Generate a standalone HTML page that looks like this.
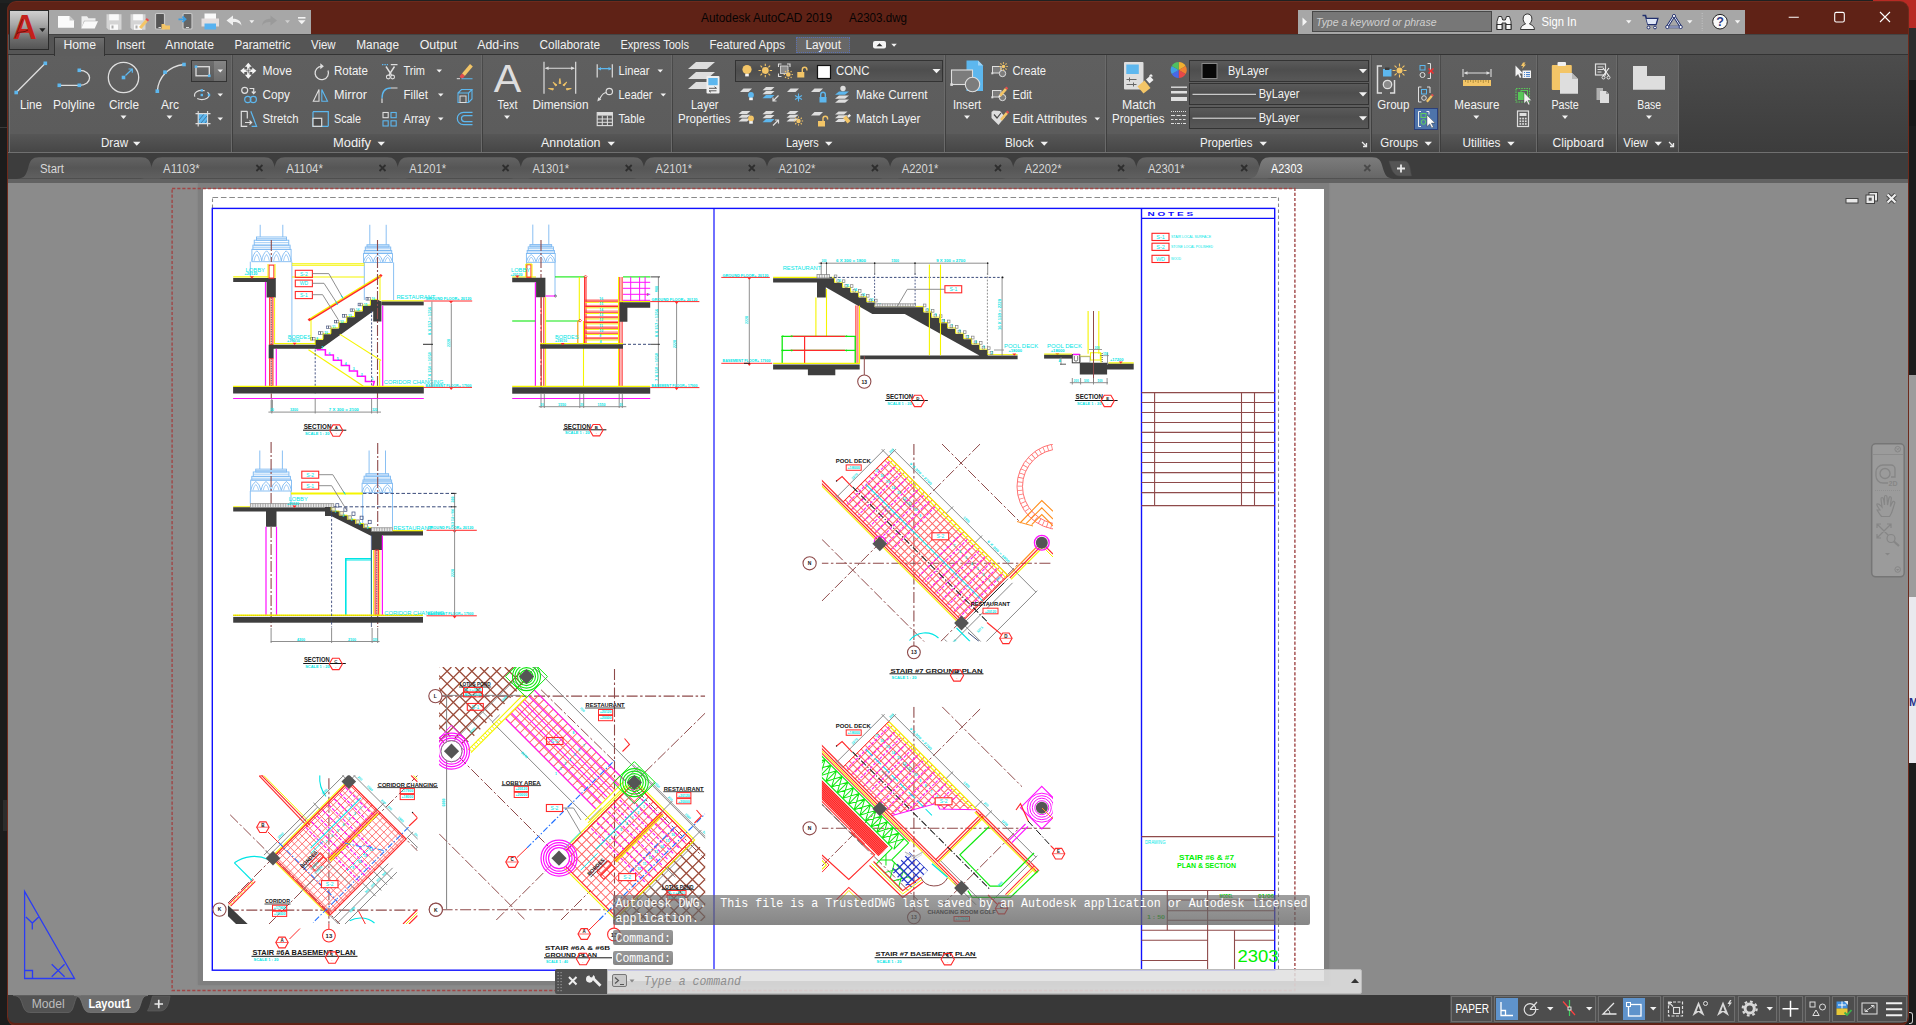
<!DOCTYPE html>
<html><head><meta charset="utf-8"><title>Autodesk AutoCAD 2019 - A2303.dwg</title>
<style>
html,body{margin:0;padding:0}
body{width:1916px;height:1025px;overflow:hidden;position:relative;background:#1c1c1c;font-family:"Liberation Sans",sans-serif}
#win{position:absolute;left:8px;top:2px;width:1900px;height:1023px;border-radius:8px;overflow:hidden;background:#5f2216;box-shadow:0 0 0 1px #6d2a1c}
#in{position:absolute;left:-8px;top:-2px;width:1916px;height:1025px}
#draw{position:absolute;left:8px;top:183px;width:1900px;height:812px;background:#8b8b8b;overflow:hidden}
</style></head><body>
<div style="position:absolute;left:0;top:0;width:1916px;height:3px;background:#1f2121"></div>
<div style="position:absolute;left:1873px;top:0;width:43px;height:28px;background:#b82a24"></div>
<div style="position:absolute;left:1908px;top:28px;width:8px;height:52px;background:#2b2b2b"></div>
<div style="position:absolute;left:1908px;top:80px;width:8px;height:46px;background:#181818"></div>
<div style="position:absolute;left:1909px;top:375px;width:7px;height:222px;background:#9c9c9c"></div>
<div style="position:absolute;left:1909px;top:597px;width:7px;height:166px;background:#e9e9ee"></div>
<div style="position:absolute;left:1909px;top:696px;width:7px;height:12px;overflow:hidden;color:#27318c;font:bold 11px Liberation Sans,sans-serif;line-height:12px">M</div>
<div style="position:absolute;left:0;top:127px;width:8px;height:1px;background:#3a3a3a"></div>
<div style="position:absolute;left:3px;top:800px;width:4px;height:31px;background:#2c2c2c"></div>
<div style="position:absolute;left:1909px;top:1012px;width:4px;height:12px;background:#111;border:1.5px solid #d0d0d0;border-left:none;border-radius:0 3px 3px 0;box-sizing:border-box"></div>
<div id="win"><div id="in">
<div id="draw"></div>
<div style="position:absolute;left:198px;top:183.3px;width:1130.5px;height:801.3px;background:#7f7f7f;box-shadow:0 0 1.5px #7f7f7f"></div>
<div style="position:absolute;left:203px;top:188.5px;width:1121.2px;height:792px;background:#fff"></div>
<svg width="1916" height="1025" viewBox="0 0 1916 1025" style="position:absolute;left:0;top:0;" font-family="Liberation Sans, sans-serif">
<rect x="172.1" y="188.5" width="1122.8" height="802" fill="none" stroke="#a04646" stroke-width="1.4" stroke-dasharray="3.2 1.9"/>
<path d="M212.5 208V197.5" fill="none" stroke="#8a8a8a" stroke-width="1.1" stroke-dasharray="3.6 2.4"/>
<path d="M212.5 197.5H1278.5" fill="none" stroke="#8a8a8a" stroke-width="1.1" stroke-dasharray="5.6 2.8"/>
<path d="M1278.5 197.5V970" fill="none" stroke="#8a8a8a" stroke-width="1.1" stroke-dasharray="3.6 2.4"/>
<rect x="212.3" y="208.4" width="1062.4" height="761.8" fill="none" stroke="#1010ff" stroke-width="1.4"/>
<line x1="714" y1="208.4" x2="714" y2="970" stroke="#1010ff" stroke-width="1.2"/>
<line x1="1141.5" y1="208.4" x2="1141.5" y2="970" stroke="#1010ff" stroke-width="1.4"/>
<line x1="1141.5" y1="218.3" x2="1274.7" y2="218.3" stroke="#1010ff" stroke-width="1.3"/>
<text x="1147.6" y="215.8" font-size="5.5" fill="#1010ff" textLength="45.5" lengthAdjust="spacingAndGlyphs" font-weight="bold">N O T E S</text>
<rect x="1152" y="233.3" width="17" height="7.2" fill="none" stroke="#ff2020" stroke-width="1.1"/>
<text x="1160.5" y="239.0" font-size="5.5" fill="#00e8e8" text-anchor="middle">S-1</text>
<text x="1171" y="238.3" font-size="4.3" fill="#00e8e8" textLength="40" lengthAdjust="spacingAndGlyphs">STAIR LOCAL SURFACE</text>
<rect x="1152" y="243.2" width="17" height="7.2" fill="none" stroke="#ff2020" stroke-width="1.1"/>
<text x="1160.5" y="248.89999999999998" font-size="5.5" fill="#00e8e8" text-anchor="middle">S-2</text>
<text x="1171" y="248.2" font-size="4.3" fill="#00e8e8" textLength="42" lengthAdjust="spacingAndGlyphs">STONE LOCAL POLISHED</text>
<rect x="1152" y="255.3" width="17" height="7.2" fill="none" stroke="#ff2020" stroke-width="1.1"/>
<text x="1160.5" y="261.0" font-size="5.5" fill="#00e8e8" text-anchor="middle">WD</text>
<text x="1171" y="260.3" font-size="4.3" fill="#00e8e8" textLength="10" lengthAdjust="spacingAndGlyphs">WOOD</text>
<line x1="1141.5" y1="392.6" x2="1274.7" y2="392.6" stroke="#8e4a4a" stroke-width="1.1"/>
<line x1="1141.5" y1="402.5" x2="1274.7" y2="402.5" stroke="#8e4a4a" stroke-width="1.1"/>
<line x1="1141.5" y1="412.5" x2="1274.7" y2="412.5" stroke="#8e4a4a" stroke-width="1.1"/>
<line x1="1141.5" y1="422.5" x2="1274.7" y2="422.5" stroke="#8e4a4a" stroke-width="1.1"/>
<line x1="1141.5" y1="432.4" x2="1274.7" y2="432.4" stroke="#8e4a4a" stroke-width="1.1"/>
<line x1="1141.5" y1="442.5" x2="1274.7" y2="442.5" stroke="#8e4a4a" stroke-width="1.1"/>
<line x1="1141.5" y1="452.5" x2="1274.7" y2="452.5" stroke="#8e4a4a" stroke-width="1.1"/>
<line x1="1141.5" y1="462.5" x2="1274.7" y2="462.5" stroke="#8e4a4a" stroke-width="1.1"/>
<line x1="1141.5" y1="472.6" x2="1274.7" y2="472.6" stroke="#8e4a4a" stroke-width="1.1"/>
<line x1="1141.5" y1="482.5" x2="1274.7" y2="482.5" stroke="#8e4a4a" stroke-width="1.1"/>
<line x1="1141.5" y1="492.6" x2="1274.7" y2="492.6" stroke="#8e4a4a" stroke-width="1.1"/>
<line x1="1141.5" y1="505.6" x2="1274.7" y2="505.6" stroke="#8e4a4a" stroke-width="1.1"/>
<line x1="1154.6" y1="392.6" x2="1154.6" y2="505.6" stroke="#8e4a4a" stroke-width="1.1"/>
<line x1="1241.5" y1="392.6" x2="1241.5" y2="505.6" stroke="#8e4a4a" stroke-width="1.1"/>
<line x1="1254.5" y1="392.6" x2="1254.5" y2="505.6" stroke="#8e4a4a" stroke-width="1.1"/>
<line x1="1141.5" y1="836.6" x2="1274.7" y2="836.6" stroke="#8e4a4a" stroke-width="1.1"/>
<text x="1145" y="844" font-size="4.8" fill="#00e8e8" textLength="20.5" lengthAdjust="spacingAndGlyphs">DRAWING</text>
<text x="1206.5" y="859.6" font-size="8" fill="#00f000" textLength="55" lengthAdjust="spacingAndGlyphs" text-anchor="middle" font-weight="bold">STAIR #6 &amp; #7</text>
<text x="1206.5" y="868" font-size="8" fill="#00f000" textLength="59" lengthAdjust="spacingAndGlyphs" text-anchor="middle" font-weight="bold">PLAN &amp; SECTION</text>
<line x1="1141.5" y1="890.5" x2="1274.7" y2="890.5" stroke="#8e4a4a" stroke-width="1.1"/>
<line x1="1167.3" y1="890.5" x2="1167.3" y2="930.3" stroke="#8e4a4a" stroke-width="1.1"/>
<line x1="1207.6" y1="890.5" x2="1207.6" y2="969" stroke="#8e4a4a" stroke-width="1.1"/>
<line x1="1234.5" y1="930.3" x2="1234.5" y2="969" stroke="#8e4a4a" stroke-width="1.1"/>
<line x1="1167.3" y1="900" x2="1274.7" y2="900" stroke="#8e4a4a" stroke-width="1.1"/>
<line x1="1167.3" y1="910.7" x2="1274.7" y2="910.7" stroke="#8e4a4a" stroke-width="1.1"/>
<line x1="1167.3" y1="920.3" x2="1274.7" y2="920.3" stroke="#8e4a4a" stroke-width="1.1"/>
<line x1="1141.5" y1="930.3" x2="1274.7" y2="930.3" stroke="#8e4a4a" stroke-width="1.1"/>
<line x1="1141.5" y1="940.2" x2="1207.6" y2="940.2" stroke="#8e4a4a" stroke-width="1.1"/>
<line x1="1234.5" y1="940.2" x2="1274.7" y2="940.2" stroke="#8e4a4a" stroke-width="1.1"/>
<line x1="1141.5" y1="960.5" x2="1207.6" y2="960.5" stroke="#8e4a4a" stroke-width="1.1"/>
<text x="1219.6" y="898" font-size="4.8" fill="#00d000" textLength="13.5" lengthAdjust="spacingAndGlyphs" font-weight="bold">MODEL</text>
<text x="1258" y="898" font-size="4.8" fill="#00d000" textLength="16" lengthAdjust="spacingAndGlyphs" font-weight="bold">01/06</text>
<text x="1147" y="919" font-size="5" fill="#00d000" textLength="18" lengthAdjust="spacingAndGlyphs" font-weight="bold">1 : 50</text>
<text x="1237.5" y="961.5" font-size="17" fill="#00f000" textLength="41" lengthAdjust="spacingAndGlyphs">2303</text>
<g id="v_secA"><line x1="260.2" y1="224.8" x2="260.2" y2="236.977" stroke="#7db9f2" stroke-width="0.9"/><line x1="282.8" y1="224.8" x2="282.8" y2="236.977" stroke="#7db9f2" stroke-width="0.9"/><rect x="256.46" y="236.98" width="30.07" height="3.21" fill="none" stroke="#7db9f2" stroke-width="0.9"/><line x1="256.465" y1="238.58" x2="286.535" y2="238.58" stroke="#7db9f2" stroke-width="0.7200000000000001"/><rect x="254.22" y="240.19" width="34.55" height="4.94" fill="none" stroke="#7db9f2" stroke-width="0.9"/><line x1="254.224" y1="242.66" x2="288.776" y2="242.66" stroke="#7db9f2" stroke-width="0.7200000000000001"/><rect x="252.9" y="245.14" width="37.21" height="4.2" fill="none" stroke="#7db9f2" stroke-width="0.9"/><line x1="252.89600000000002" y1="247.24" x2="290.104" y2="247.24" stroke="#7db9f2" stroke-width="0.7200000000000001"/><rect x="251.9" y="249.34" width="39.2" height="12.36" fill="none" stroke="#7db9f2" stroke-width="0.9"/><path d="M251.90 260.96 Q252.88 253.86 256.80 250.82 Q260.72 253.86 261.70 260.96" fill="none" stroke="#7db9f2" stroke-width="0.9"/><path d="M254.06 260.96 Q254.84 256.40 256.80 254.37 Q258.76 256.40 259.54 260.96" fill="none" stroke="#7db9f2" stroke-width="0.7200000000000001"/><path d="M261.70 260.96 Q262.68 253.86 266.60 250.82 Q270.52 253.86 271.50 260.96" fill="none" stroke="#7db9f2" stroke-width="0.9"/><path d="M263.86 260.96 Q264.64 256.40 266.60 254.37 Q268.56 256.40 269.34 260.96" fill="none" stroke="#7db9f2" stroke-width="0.7200000000000001"/><path d="M271.50 260.96 Q272.48 253.86 276.40 250.82 Q280.32 253.86 281.30 260.96" fill="none" stroke="#7db9f2" stroke-width="0.9"/><path d="M273.66 260.96 Q274.44 256.40 276.40 254.37 Q278.36 256.40 279.14 260.96" fill="none" stroke="#7db9f2" stroke-width="0.7200000000000001"/><path d="M281.30 260.96 Q282.28 253.86 286.20 250.82 Q290.12 253.86 291.10 260.96" fill="none" stroke="#7db9f2" stroke-width="0.9"/><path d="M283.46 260.96 Q284.24 256.40 286.20 254.37 Q288.16 256.40 288.94 260.96" fill="none" stroke="#7db9f2" stroke-width="0.7200000000000001"/><line x1="250.3" y1="261.7" x2="250.3" y2="277" stroke="#7db9f2" stroke-width="0.9"/><line x1="291.9" y1="261.7" x2="291.9" y2="341" stroke="#7db9f2" stroke-width="0.9"/><line x1="369.8" y1="224.8" x2="369.8" y2="244.728" stroke="#7db9f2" stroke-width="0.9"/><line x1="386.2" y1="224.8" x2="386.2" y2="244.728" stroke="#7db9f2" stroke-width="0.9"/><rect x="366.96" y="244.73" width="22.07" height="2.3" fill="none" stroke="#7db9f2" stroke-width="0.9"/><line x1="366.965" y1="245.88" x2="389.035" y2="245.88" stroke="#7db9f2" stroke-width="0.7200000000000001"/><rect x="365.26" y="247.03" width="25.47" height="3.53" fill="none" stroke="#7db9f2" stroke-width="0.9"/><line x1="365.264" y1="248.79" x2="390.736" y2="248.79" stroke="#7db9f2" stroke-width="0.7200000000000001"/><rect x="364.26" y="250.56" width="27.49" height="3.0" fill="none" stroke="#7db9f2" stroke-width="0.9"/><line x1="364.256" y1="252.06" x2="391.744" y2="252.06" stroke="#7db9f2" stroke-width="0.7200000000000001"/><rect x="363.5" y="253.56" width="29.0" height="8.84" fill="none" stroke="#7db9f2" stroke-width="0.9"/><path d="M363.50 261.87 Q364.47 256.80 368.33 254.62 Q372.20 256.80 373.17 261.87" fill="none" stroke="#7db9f2" stroke-width="0.9"/><path d="M365.63 261.87 Q366.40 258.61 368.33 257.16 Q370.27 258.61 371.04 261.87" fill="none" stroke="#7db9f2" stroke-width="0.7200000000000001"/><path d="M373.17 261.87 Q374.13 256.80 378.00 254.62 Q381.87 256.80 382.83 261.87" fill="none" stroke="#7db9f2" stroke-width="0.9"/><path d="M375.29 261.87 Q376.07 258.61 378.00 257.16 Q379.93 258.61 380.71 261.87" fill="none" stroke="#7db9f2" stroke-width="0.7200000000000001"/><path d="M382.83 261.87 Q383.80 256.80 387.67 254.62 Q391.53 256.80 392.50 261.87" fill="none" stroke="#7db9f2" stroke-width="0.9"/><path d="M384.96 261.87 Q385.73 258.61 387.67 257.16 Q389.60 258.61 390.37 261.87" fill="none" stroke="#7db9f2" stroke-width="0.7200000000000001"/><line x1="364.3" y1="262.4" x2="364.3" y2="300" stroke="#7db9f2" stroke-width="0.9"/><line x1="393.6" y1="262.4" x2="393.6" y2="300" stroke="#7db9f2" stroke-width="0.9"/><line x1="291.9" y1="263.7" x2="364.3" y2="263.7" stroke="#f5f500" stroke-width="1.1"/><line x1="291.9" y1="265.3" x2="364.3" y2="265.3" stroke="#f5f500" stroke-width="1.1"/><line x1="291.9" y1="277" x2="364.3" y2="277" stroke="#f5f500" stroke-width="1.1"/><line x1="233.2" y1="276.9" x2="268.6" y2="276.9" stroke="#f5f500" stroke-width="1.2"/><path d="M233.2 278.1H275.8V297.6H266.6V281.9H233.2Z" fill="#3e3e3e"/><rect x="269" y="265.1" width="4.9" height="13" fill="none" stroke="#ff2a2a" stroke-width="1.1"/><line x1="268" y1="264" x2="268" y2="278" stroke="#f5f500" stroke-width="1"/><line x1="275" y1="264" x2="275" y2="278" stroke="#f5f500" stroke-width="1"/><text x="245.5" y="272" font-size="6" fill="#00e5e5" textLength="19.5" lengthAdjust="spacingAndGlyphs">LOBBY</text><text x="244.5" y="275.3" font-size="3.4" fill="#00e5e5" textLength="13" lengthAdjust="spacingAndGlyphs" font-weight="bold">+20120</text><path d="M249.9 276.3h4l-2 2.4z" fill="#ff2a2a"/><line x1="265.5" y1="281.9" x2="265.5" y2="386.3" stroke="#ff10ff" stroke-width="1.2"/><rect x="269.6" y="297.6" width="3.4" height="47" fill="#ffb0a0" stroke="#ff2a2a" stroke-width="0.9"/><line x1="271.3" y1="297.6" x2="271.3" y2="344.7" stroke="#3a4a7a" stroke-width="0.8" stroke-dasharray="1.2 1.2"/><line x1="274.6" y1="297.6" x2="274.6" y2="344" stroke="#f5f500" stroke-width="1"/><line x1="273.6" y1="343.7" x2="318" y2="343.7" stroke="#f5f500" stroke-width="1.2"/><path d="M268.7 344.7H318.6L321 348.7H273.6V358.5H268.7Z" fill="#3e3e3e"/><rect x="269.6" y="358.5" width="3.4" height="28" fill="#ffb0a0" stroke="#ff2a2a" stroke-width="0.9"/><line x1="271.3" y1="358.5" x2="271.3" y2="386.3" stroke="#3a4a7a" stroke-width="0.8" stroke-dasharray="1.2 1.2"/><line x1="276.3" y1="348.7" x2="276.3" y2="386.3" stroke="#ff10ff" stroke-width="1.2"/><text x="287.8" y="338.8" font-size="6" fill="#00e5e5" textLength="23" lengthAdjust="spacingAndGlyphs">BORDES</text><text x="287" y="342.2" font-size="3.4" fill="#00e5e5" textLength="13" lengthAdjust="spacingAndGlyphs" font-weight="bold">+19010</text><path d="M292.6 342.7h4l-2 2.4z" fill="#ff2a2a"/><polygon points="315.1,345.7 315.1,340.0 323.0,340.0 323.0,334.3 330.9,334.3 330.9,328.6 338.8,328.6 338.8,322.9 346.7,322.9 346.7,317.2 354.6,317.2 354.6,311.5 362.5,311.5 362.5,305.8 370.4,305.8 370.4,300.1 378.3,300.1 381.4,301.6 381.4,321.5 373.2,321.5 373.2,311.3 321,348.7 315.1,348.7" fill="#3e3e3e" stroke="none" stroke-width="0"/><polyline points="315.1,345.0 315.1,339.3 323.0,339.3 323.0,333.6 330.9,333.6 330.9,327.9 338.8,327.9 338.8,322.2 346.7,322.2 346.7,316.5 354.6,316.5 354.6,310.8 362.5,310.8 362.5,305.1 370.4,305.1 370.4,299.4 378.3,299.4" fill="none" stroke="#f5f500" stroke-width="1"/><rect x="312.7" y="337.4" width="2.4" height="2.6" fill="none" stroke="#828282" stroke-width="0.7"/><rect x="310.7" y="337.4" width="2" height="2.6" fill="none" stroke="#3a4a7a" stroke-width="0.6"/><text x="316.3" y="339.7" font-size="3.2" fill="#00e5e5" font-weight="bold">8</text><rect x="320.6" y="331.7" width="2.4" height="2.6" fill="none" stroke="#828282" stroke-width="0.7"/><rect x="318.6" y="331.7" width="2" height="2.6" fill="none" stroke="#3a4a7a" stroke-width="0.6"/><text x="324.2" y="334.0" font-size="3.2" fill="#00e5e5" font-weight="bold">10</text><rect x="328.5" y="326.0" width="2.4" height="2.6" fill="none" stroke="#828282" stroke-width="0.7"/><rect x="326.5" y="326.0" width="2" height="2.6" fill="none" stroke="#3a4a7a" stroke-width="0.6"/><text x="332.1" y="328.3" font-size="3.2" fill="#00e5e5" font-weight="bold">11</text><rect x="336.4" y="320.3" width="2.4" height="2.6" fill="none" stroke="#828282" stroke-width="0.7"/><rect x="334.4" y="320.3" width="2" height="2.6" fill="none" stroke="#3a4a7a" stroke-width="0.6"/><text x="340.0" y="322.6" font-size="3.2" fill="#00e5e5" font-weight="bold">12</text><rect x="344.3" y="314.6" width="2.4" height="2.6" fill="none" stroke="#828282" stroke-width="0.7"/><rect x="342.3" y="314.6" width="2" height="2.6" fill="none" stroke="#3a4a7a" stroke-width="0.6"/><text x="347.9" y="316.9" font-size="3.2" fill="#00e5e5" font-weight="bold">13</text><rect x="352.2" y="308.9" width="2.4" height="2.6" fill="none" stroke="#828282" stroke-width="0.7"/><rect x="350.2" y="308.9" width="2" height="2.6" fill="none" stroke="#3a4a7a" stroke-width="0.6"/><text x="355.8" y="311.2" font-size="3.2" fill="#00e5e5" font-weight="bold">14</text><rect x="360.1" y="303.2" width="2.4" height="2.6" fill="none" stroke="#828282" stroke-width="0.7"/><rect x="358.1" y="303.2" width="2" height="2.6" fill="none" stroke="#3a4a7a" stroke-width="0.6"/><text x="363.7" y="305.5" font-size="3.2" fill="#00e5e5" font-weight="bold">15</text><rect x="368.0" y="297.5" width="2.4" height="2.6" fill="none" stroke="#828282" stroke-width="0.7"/><rect x="366.0" y="297.5" width="2" height="2.6" fill="none" stroke="#3a4a7a" stroke-width="0.6"/><text x="371.6" y="299.8" font-size="3.2" fill="#00e5e5" font-weight="bold">16</text><line x1="381.4" y1="300.8" x2="423.7" y2="300.8" stroke="#f5f500" stroke-width="1.2"/><rect x="381.4" y="301.6" width="42.3" height="3.8" fill="#3e3e3e"/><text x="396.4" y="299.3" font-size="6" fill="#00e5e5" textLength="39" lengthAdjust="spacingAndGlyphs">RESTAURANT</text><line x1="423.7" y1="301" x2="472.2" y2="301" stroke="#ff2a2a" stroke-width="1"/><path d="M449 301h4l-2 2.6z" fill="#ff2a2a"/><text x="425.5" y="300.1" font-size="3.6" fill="#00e5e5" textLength="46" lengthAdjust="spacingAndGlyphs" font-weight="bold">GROUND FLOOR+ 20120</text><line x1="382.7" y1="305.4" x2="382.7" y2="386.3" stroke="#ff10ff" stroke-width="1.2"/><line x1="309" y1="319.4" x2="380.7" y2="275.1" stroke="#f5f500" stroke-width="1.6"/><line x1="309.3" y1="320.6" x2="381" y2="276.3" stroke="#ff2a2a" stroke-width="1.5"/><path d="M307.6 319.7l1.8 -1.6l1.8 1.6l-1.8 1.6z" fill="#ff2a2a"/><path d="M379 275.6l1.8 -1.6l1.8 1.6l-1.8 1.6z" fill="#ff2a2a"/><line x1="311" y1="320" x2="311" y2="341" stroke="#f5f500" stroke-width="1"/><line x1="380" y1="276" x2="380" y2="300.5" stroke="#f5f500" stroke-width="1"/><rect x="295.3" y="270.3" width="17.1" height="7.1" fill="none" stroke="#ff2a2a" stroke-width="1.1"/><text x="303.85" y="275.65000000000003" font-size="5" fill="#00e5e5" text-anchor="middle">S-2</text><rect x="295.3" y="280.1" width="17.1" height="6.6" fill="none" stroke="#ff2a2a" stroke-width="1.1"/><text x="303.85" y="285.20000000000005" font-size="5" fill="#00e5e5" text-anchor="middle">WD</text><rect x="295.3" y="291.5" width="17.1" height="7.1" fill="none" stroke="#ff2a2a" stroke-width="1.1"/><text x="303.85" y="296.85" font-size="5" fill="#00e5e5" text-anchor="middle">S-1</text><polyline points="312.4,273.6 328.8,273.6 342.4,297.2" fill="none" stroke="#828282" stroke-width="0.9"/><polyline points="312.4,283.3 324,283.3 337,303.3" fill="none" stroke="#828282" stroke-width="0.9"/><polyline points="312.4,294.7 322.6,294.7 338.3,319.7" fill="none" stroke="#828282" stroke-width="0.9"/><line x1="341.3" y1="295.5" x2="343" y2="298.5" stroke="#00e5e5" stroke-width="1"/><line x1="336" y1="301.8" x2="337.7" y2="304.8" stroke="#00e5e5" stroke-width="1"/><polyline points="316.6,349.7 325.4,349.7 325.4,355.0 333.4,355.0 333.4,360.3 341.4,360.3 341.4,365.6 349.4,365.6 349.4,370.9 357.4,370.9 357.4,376.2 365.4,376.2 365.4,381.5 374.3,381.5 373,386.3" fill="none" stroke="#ff10ff" stroke-width="1.5"/><text x="321.5" y="349.2" font-size="3.4" fill="#00e5e5" font-weight="bold">7</text><text x="328.5" y="354.5" font-size="3.4" fill="#00e5e5" font-weight="bold">6</text><text x="336.8" y="359.8" font-size="3.4" fill="#00e5e5" font-weight="bold">5</text><text x="344.8" y="365" font-size="3.4" fill="#00e5e5" font-weight="bold">4</text><text x="352.8" y="370.4" font-size="3.4" fill="#00e5e5" font-weight="bold">3</text><text x="360.8" y="375.6" font-size="3.4" fill="#00e5e5" font-weight="bold">2</text><text x="371.5" y="379.8" font-size="3.4" fill="#00e5e5" font-weight="bold">1</text><line x1="308.5" y1="349.7" x2="363.4" y2="386.3" stroke="#f5f500" stroke-width="1.1"/><line x1="339.7" y1="334.1" x2="381.1" y2="360.5" stroke="#f5f500" stroke-width="1.1"/><line x1="379.7" y1="360.5" x2="379.7" y2="386.3" stroke="#f5f500" stroke-width="1"/><line x1="315.2" y1="345.7" x2="315.2" y2="393.8" stroke="#3a4a7a" stroke-width="0.9" stroke-dasharray="2.2 1.6"/><line x1="371.6" y1="311" x2="371.6" y2="393.8" stroke="#3a4a7a" stroke-width="0.9" stroke-dasharray="2.2 1.6"/><line x1="271.3" y1="240" x2="271.3" y2="262" stroke="#8e4a4a" stroke-width="1.1" stroke-dasharray="11 2 2 2"/><line x1="377.5" y1="240" x2="377.5" y2="398" stroke="#8e4a4a" stroke-width="1.1" stroke-dasharray="11 2 2 2"/><line x1="271.3" y1="393.5" x2="271.3" y2="398" stroke="#8e4a4a" stroke-width="1.1"/><line x1="233.1" y1="386.3" x2="423.8" y2="386.3" stroke="#f5f500" stroke-width="1.2"/><rect x="233.1" y="387" width="190.7" height="6.5" fill="#3e3e3e"/><line x1="233.1" y1="398.5" x2="423.8" y2="398.5" stroke="#ff10ff" stroke-width="1.2"/><text x="383.8" y="384.4" font-size="6" fill="#00e5e5" textLength="59.7" lengthAdjust="spacingAndGlyphs">CORIDOR CHANGING</text><line x1="423.8" y1="387.4" x2="472" y2="387.4" stroke="#ff2a2a" stroke-width="1"/><path d="M449.2 387.4h4l-2 2.6z" fill="#ff2a2a"/><text x="425.5" y="386.5" font-size="3.6" fill="#00e5e5" textLength="46" lengthAdjust="spacingAndGlyphs" font-weight="bold">BASEMENT FLOOR+ 17900</text><line x1="431.9" y1="301.6" x2="431.9" y2="387.4" stroke="#828282" stroke-width="0.9"/><line x1="451.3" y1="303.5" x2="451.3" y2="387.4" stroke="#828282" stroke-width="0.9"/><line x1="423" y1="344.3" x2="433" y2="344.3" stroke="#151515" stroke-width="0.9"/><text x="431" y="335" font-size="3.4" fill="#00e5e5" textLength="28" lengthAdjust="spacingAndGlyphs" font-weight="bold" transform="rotate(-90 431 335)">8 X 157 = 1256</text><text x="431" y="380" font-size="3.4" fill="#00e5e5" textLength="28" lengthAdjust="spacingAndGlyphs" font-weight="bold" transform="rotate(-90 431 380)">7 X 150 = 1050</text><text x="450" y="347" font-size="3.4" fill="#00e5e5" textLength="8" lengthAdjust="spacingAndGlyphs" font-weight="bold" transform="rotate(-90 450 347)">2220</text><line x1="268.4" y1="412.1" x2="381" y2="412.1" stroke="#828282" stroke-width="0.9"/><line x1="271.8" y1="398.5" x2="271.8" y2="413.5" stroke="#828282" stroke-width="0.9"/><line x1="315.2" y1="398.5" x2="315.2" y2="413.5" stroke="#828282" stroke-width="0.9"/><line x1="371.6" y1="398.5" x2="371.6" y2="413.5" stroke="#828282" stroke-width="0.9"/><line x1="377.4" y1="398.5" x2="377.4" y2="413.5" stroke="#828282" stroke-width="0.9"/><rect x="270.6" y="400" width="2.4" height="12" fill="#999"/><text x="290" y="411.3" font-size="3.4" fill="#00e5e5" textLength="8" lengthAdjust="spacingAndGlyphs" font-weight="bold">3200</text><text x="328.8" y="411.3" font-size="3.4" fill="#00e5e5" textLength="30" lengthAdjust="spacingAndGlyphs" font-weight="bold">7 X 300 = 2100</text><text x="270.2" y="411.3" font-size="3.2" fill="#00e5e5" font-weight="bold">20</text><text x="372" y="411.3" font-size="3.2" fill="#00e5e5" font-weight="bold">320</text><text x="303.7" y="429" font-size="7.2" fill="#151515" textLength="27.8" lengthAdjust="spacingAndGlyphs" font-weight="bold">SECTION</text><line x1="303.0" y1="430.2" x2="346.3" y2="430.2" stroke="#151515" stroke-width="1"/><polygon points="342.9,430.6 339.6,436.32 333.0,436.32 329.7,430.6 333.0,424.88 339.6,424.88" fill="none" stroke="#ff2a2a" stroke-width="1.1"/><text x="336.3" y="429.4" font-size="4.4" fill="#151515" text-anchor="middle" font-weight="bold">A</text><text x="336.3" y="434.2" font-size="4" fill="#ff2a2a" text-anchor="middle">-</text><text x="305.0" y="434.5" font-size="3.4" fill="#00e5e5" textLength="24.5" lengthAdjust="spacingAndGlyphs" font-weight="bold">SCALE  1 : 20</text></g>
<g id="v_secB"><line x1="532.8" y1="224.6" x2="532.8" y2="244.58100000000002" stroke="#7db9f2" stroke-width="0.9"/><line x1="548.8" y1="224.6" x2="548.8" y2="244.58100000000002" stroke="#7db9f2" stroke-width="0.9"/><rect x="529.92" y="244.58" width="21.76" height="2.3" fill="none" stroke="#7db9f2" stroke-width="0.9"/><line x1="529.92" y1="245.73" x2="551.68" y2="245.73" stroke="#7db9f2" stroke-width="0.7200000000000001"/><rect x="528.19" y="246.88" width="25.22" height="3.54" fill="none" stroke="#7db9f2" stroke-width="0.9"/><line x1="528.192" y1="248.66" x2="553.4079999999999" y2="248.66" stroke="#7db9f2" stroke-width="0.7200000000000001"/><rect x="527.17" y="250.43" width="27.26" height="3.01" fill="none" stroke="#7db9f2" stroke-width="0.9"/><line x1="527.168" y1="251.93" x2="554.4319999999999" y2="251.93" stroke="#7db9f2" stroke-width="0.7200000000000001"/><rect x="526.4" y="253.44" width="28.8" height="8.86" fill="none" stroke="#7db9f2" stroke-width="0.9"/><path d="M526.40 261.77 Q527.36 256.68 531.20 254.50 Q535.04 256.68 536.00 261.77" fill="none" stroke="#7db9f2" stroke-width="0.9"/><path d="M528.51 261.77 Q529.28 258.50 531.20 257.05 Q533.12 258.50 533.89 261.77" fill="none" stroke="#7db9f2" stroke-width="0.7200000000000001"/><path d="M536.00 261.77 Q536.96 256.68 540.80 254.50 Q544.64 256.68 545.60 261.77" fill="none" stroke="#7db9f2" stroke-width="0.9"/><path d="M538.11 261.77 Q538.88 258.50 540.80 257.05 Q542.72 258.50 543.49 261.77" fill="none" stroke="#7db9f2" stroke-width="0.7200000000000001"/><path d="M545.60 261.77 Q546.56 256.68 550.40 254.50 Q554.24 256.68 555.20 261.77" fill="none" stroke="#7db9f2" stroke-width="0.9"/><path d="M547.71 261.77 Q548.48 258.50 550.40 257.05 Q552.32 258.50 553.09 261.77" fill="none" stroke="#7db9f2" stroke-width="0.7200000000000001"/><line x1="526.6" y1="262.3" x2="526.6" y2="276.7" stroke="#7db9f2" stroke-width="0.9"/><line x1="555" y1="262.3" x2="555" y2="296" stroke="#7db9f2" stroke-width="0.9"/><circle cx="555.4" cy="296" r="1" fill="none" stroke="#151515" stroke-width="0.6"/><line x1="541" y1="240" x2="541" y2="278" stroke="#8e4a4a" stroke-width="1.1" stroke-dasharray="11 2 2 2"/><line x1="512.2" y1="277" x2="536" y2="277" stroke="#f5f500" stroke-width="1.1"/><path d="M512.2 277.8H545.4V297.3H536.1V282.2H512.2Z" fill="#3e3e3e"/><rect x="526.8" y="264.7" width="4.2" height="12.6" fill="none" stroke="#ff2a2a" stroke-width="1.1"/><line x1="525.8" y1="264" x2="525.8" y2="277" stroke="#f5f500" stroke-width="1"/><line x1="532" y1="264" x2="532" y2="277" stroke="#f5f500" stroke-width="1"/><line x1="525.8" y1="264" x2="532" y2="264" stroke="#f5f500" stroke-width="1"/><text x="511" y="272.3" font-size="6" fill="#00e5e5" textLength="19" lengthAdjust="spacingAndGlyphs">LOBBY</text><text x="510.5" y="275.5" font-size="3.4" fill="#00e5e5" textLength="12" lengthAdjust="spacingAndGlyphs" font-weight="bold">+20120</text><path d="M515.3 275.6h4l-2 2.4z" fill="#ff2a2a"/><line x1="555" y1="276.9" x2="585.3" y2="276.9" stroke="#10e810" stroke-width="1.1"/><path d="M584 276.6l1.5 -1.5l1.5 1.5l-1.5 1.5z" fill="none" stroke="#ff2a2a" stroke-width="0.8"/><line x1="545.4" y1="296" x2="555" y2="296" stroke="#ff10ff" stroke-width="1.1"/><line x1="535.4" y1="282.2" x2="535.4" y2="386.4" stroke="#ff10ff" stroke-width="1.2"/><line x1="512.2" y1="321" x2="535.4" y2="321" stroke="#10e810" stroke-width="1.1"/><line x1="545.4" y1="321" x2="579.8" y2="321" stroke="#10e810" stroke-width="1.1"/><line x1="541.2" y1="297.3" x2="541.2" y2="386.4" stroke="#ff2a2a" stroke-width="1.1"/><line x1="543.8" y1="297.3" x2="543.8" y2="386.4" stroke="#ff2a2a" stroke-width="1.1"/><line x1="545.6" y1="297.3" x2="545.6" y2="386.4" stroke="#f5f500" stroke-width="1"/><line x1="541" y1="297" x2="541" y2="392" stroke="#8e4a4a" stroke-width="1.0" stroke-dasharray="11 2 2 2"/><line x1="579.3" y1="276.9" x2="579.3" y2="321" stroke="#f5f500" stroke-width="1.1"/><line x1="583.5" y1="321" x2="583.5" y2="386.4" stroke="#f5f500" stroke-width="1.1"/><line x1="577.8" y1="321" x2="577.8" y2="344" stroke="#f5f500" stroke-width="1"/><line x1="577.8" y1="321" x2="577.8" y2="344" stroke="#ff2a2a" stroke-width="0.5"/><line x1="584.6" y1="276.9" x2="584.6" y2="344.3" stroke="#ff2a2a" stroke-width="1.1"/><line x1="586" y1="276.9" x2="586" y2="344.3" stroke="#ff2a2a" stroke-width="1.1"/><path d="M578.5 320.6l1.5 -1.5l1.5 1.5l-1.5 1.5z" fill="none" stroke="#ff2a2a" stroke-width="0.8"/><line x1="585.3" y1="301.1" x2="618.5" y2="301.1" stroke="#ff2a2a" stroke-width="1.1"/><line x1="585.3" y1="302.40000000000003" x2="618.5" y2="302.40000000000003" stroke="#f5f500" stroke-width="0.9"/><line x1="585.3" y1="299.90000000000003" x2="618.5" y2="299.90000000000003" stroke="#ff2a2a" stroke-width="0.6"/><text x="599.3" y="299.5" font-size="3.3" fill="#00e5e5" font-weight="bold">16</text><line x1="585.3" y1="306.6" x2="618.5" y2="306.6" stroke="#ff2a2a" stroke-width="1.1"/><line x1="585.3" y1="307.90000000000003" x2="618.5" y2="307.90000000000003" stroke="#f5f500" stroke-width="0.9"/><line x1="585.3" y1="305.40000000000003" x2="618.5" y2="305.40000000000003" stroke="#ff2a2a" stroke-width="0.6"/><text x="599.3" y="305.0" font-size="3.3" fill="#00e5e5" font-weight="bold">15</text><line x1="585.3" y1="312.2" x2="618.5" y2="312.2" stroke="#ff2a2a" stroke-width="1.1"/><line x1="585.3" y1="313.5" x2="618.5" y2="313.5" stroke="#f5f500" stroke-width="0.9"/><line x1="585.3" y1="311.0" x2="618.5" y2="311.0" stroke="#ff2a2a" stroke-width="0.6"/><text x="599.3" y="310.59999999999997" font-size="3.3" fill="#00e5e5" font-weight="bold">14</text><line x1="585.3" y1="317.7" x2="618.5" y2="317.7" stroke="#ff2a2a" stroke-width="1.1"/><line x1="585.3" y1="319.0" x2="618.5" y2="319.0" stroke="#f5f500" stroke-width="0.9"/><line x1="585.3" y1="316.5" x2="618.5" y2="316.5" stroke="#ff2a2a" stroke-width="0.6"/><text x="599.3" y="316.09999999999997" font-size="3.3" fill="#00e5e5" font-weight="bold">13</text><line x1="585.3" y1="322.6" x2="618.5" y2="322.6" stroke="#ff2a2a" stroke-width="1.1"/><line x1="585.3" y1="323.90000000000003" x2="618.5" y2="323.90000000000003" stroke="#f5f500" stroke-width="0.9"/><line x1="585.3" y1="321.40000000000003" x2="618.5" y2="321.40000000000003" stroke="#ff2a2a" stroke-width="0.6"/><text x="599.3" y="321.0" font-size="3.3" fill="#00e5e5" font-weight="bold">12</text><line x1="585.3" y1="328.1" x2="618.5" y2="328.1" stroke="#ff2a2a" stroke-width="1.1"/><line x1="585.3" y1="329.40000000000003" x2="618.5" y2="329.40000000000003" stroke="#f5f500" stroke-width="0.9"/><line x1="585.3" y1="326.90000000000003" x2="618.5" y2="326.90000000000003" stroke="#ff2a2a" stroke-width="0.6"/><text x="599.3" y="326.5" font-size="3.3" fill="#00e5e5" font-weight="bold">11</text><line x1="585.3" y1="333.2" x2="618.5" y2="333.2" stroke="#ff2a2a" stroke-width="1.1"/><line x1="585.3" y1="334.5" x2="618.5" y2="334.5" stroke="#f5f500" stroke-width="0.9"/><line x1="585.3" y1="332.0" x2="618.5" y2="332.0" stroke="#ff2a2a" stroke-width="0.6"/><text x="599.3" y="331.59999999999997" font-size="3.3" fill="#00e5e5" font-weight="bold">10</text><line x1="585.3" y1="338.7" x2="618.5" y2="338.7" stroke="#ff2a2a" stroke-width="1.1"/><line x1="585.3" y1="340.0" x2="618.5" y2="340.0" stroke="#f5f500" stroke-width="0.9"/><line x1="585.3" y1="337.5" x2="618.5" y2="337.5" stroke="#ff2a2a" stroke-width="0.6"/><text x="599.3" y="337.09999999999997" font-size="3.3" fill="#00e5e5" font-weight="bold">9</text><text x="599.8" y="343.3" font-size="3.3" fill="#00e5e5" font-weight="bold">8</text><line x1="618.5" y1="276.9" x2="618.5" y2="386.4" stroke="#f5f500" stroke-width="1"/><line x1="619.8" y1="276.9" x2="619.8" y2="386.4" stroke="#ff2a2a" stroke-width="1.1"/><line x1="622.1" y1="276.9" x2="622.1" y2="386.4" stroke="#ff2a2a" stroke-width="1.1"/><path d="M619.6 302.2H650.2V307.7H627.4V321.7H619.6Z" fill="#3e3e3e"/><line x1="619.6" y1="301.5" x2="650.2" y2="301.5" stroke="#f5f500" stroke-width="1"/><line x1="623" y1="276.9" x2="650.2" y2="276.9" stroke="#10e810" stroke-width="1.1"/><line x1="623" y1="282.3" x2="650.2" y2="282.3" stroke="#ff10ff" stroke-width="1"/><line x1="623" y1="288.3" x2="650.2" y2="288.3" stroke="#ff10ff" stroke-width="1"/><line x1="623" y1="294.3" x2="650.2" y2="294.3" stroke="#ff10ff" stroke-width="1"/><line x1="623" y1="300.3" x2="650.2" y2="300.3" stroke="#ff10ff" stroke-width="1"/><line x1="630.7" y1="276.9" x2="630.7" y2="301" stroke="#ff10ff" stroke-width="1"/><line x1="639.6" y1="276.9" x2="639.6" y2="301" stroke="#ff10ff" stroke-width="1"/><line x1="645.1" y1="276.9" x2="645.1" y2="301" stroke="#ff10ff" stroke-width="1"/><text x="646.5" y="296" font-size="4" fill="#151515" font-style="italic">1</text><line x1="540.3" y1="343.6" x2="623" y2="343.6" stroke="#f5f500" stroke-width="1.1"/><rect x="540.3" y="344.3" width="82.7" height="4.4" fill="#3e3e3e"/><text x="555" y="338.7" font-size="6" fill="#00e5e5" textLength="23.5" lengthAdjust="spacingAndGlyphs">BORDES</text><text x="555" y="342" font-size="3.4" fill="#00e5e5" textLength="12" lengthAdjust="spacingAndGlyphs" font-weight="bold">+19010</text><path d="M560.7 342.9h4l-2 2.4z" fill="#ff2a2a"/><line x1="512.2" y1="386.4" x2="650.2" y2="386.4" stroke="#f5f500" stroke-width="1.2"/><rect x="512.2" y="387.3" width="138" height="6.4" fill="#3e3e3e"/><line x1="512.2" y1="398.5" x2="650.2" y2="398.5" stroke="#ff10ff" stroke-width="1.2"/><line x1="538.8" y1="406.7" x2="626.3" y2="406.7" stroke="#828282" stroke-width="0.9"/><line x1="541" y1="393.7" x2="541" y2="408" stroke="#828282" stroke-width="0.9"/><line x1="544.3" y1="393.7" x2="544.3" y2="408" stroke="#828282" stroke-width="0.9"/><line x1="579.8" y1="393.7" x2="579.8" y2="408" stroke="#828282" stroke-width="0.9"/><line x1="583.7" y1="393.7" x2="583.7" y2="408" stroke="#828282" stroke-width="0.9"/><line x1="619.2" y1="393.7" x2="619.2" y2="408" stroke="#828282" stroke-width="0.9"/><line x1="622.3" y1="393.7" x2="622.3" y2="408" stroke="#828282" stroke-width="0.9"/><text x="558" y="405.8" font-size="3.3" fill="#00e5e5" textLength="8" lengthAdjust="spacingAndGlyphs" font-weight="bold">1550</text><text x="597.5" y="405.8" font-size="3.3" fill="#00e5e5" textLength="8" lengthAdjust="spacingAndGlyphs" font-weight="bold">1550</text><text x="540.3" y="405.8" font-size="3" fill="#00e5e5" font-weight="bold">20</text><text x="580" y="405.8" font-size="3" fill="#00e5e5" font-weight="bold">20</text><text x="619.3" y="405.8" font-size="3" fill="#00e5e5" font-weight="bold">20</text><line x1="658.4" y1="276.9" x2="658.4" y2="387.5" stroke="#828282" stroke-width="0.9"/><line x1="676.6" y1="302" x2="676.6" y2="387.5" stroke="#828282" stroke-width="0.9"/><line x1="623" y1="344.3" x2="650.6" y2="344.3" stroke="#3a4a7a" stroke-width="1" stroke-dasharray="3 2"/><line x1="650.6" y1="276.9" x2="660" y2="276.9" stroke="#151515" stroke-width="0.8"/><line x1="650.6" y1="344.3" x2="660" y2="344.3" stroke="#151515" stroke-width="0.8"/><line x1="650.2" y1="301.6" x2="699.4" y2="301.6" stroke="#ff2a2a" stroke-width="1"/><path d="M674.6 301.6h4l-2 2.6z" fill="#ff2a2a"/><text x="651.5" y="300.70000000000005" font-size="3.6" fill="#00e5e5" textLength="46" lengthAdjust="spacingAndGlyphs" font-weight="bold">GROUND FLOOR+ 20120</text><line x1="650.2" y1="387.6" x2="699.4" y2="387.6" stroke="#ff2a2a" stroke-width="1"/><path d="M674.6 387.6h4l-2 2.6z" fill="#ff2a2a"/><text x="651.5" y="386.70000000000005" font-size="3.6" fill="#00e5e5" textLength="46" lengthAdjust="spacingAndGlyphs" font-weight="bold">BASEMENT FLOOR+ 17900</text><text x="657.5" y="292" font-size="3.3" fill="#00e5e5" textLength="6" lengthAdjust="spacingAndGlyphs" font-weight="bold" transform="rotate(-90 657.5 292)">900</text><text x="657.5" y="337" font-size="3.3" fill="#00e5e5" textLength="28" lengthAdjust="spacingAndGlyphs" font-weight="bold" transform="rotate(-90 657.5 337)">8 X 157 = 1256</text><text x="657.5" y="381" font-size="3.3" fill="#00e5e5" textLength="28" lengthAdjust="spacingAndGlyphs" font-weight="bold" transform="rotate(-90 657.5 381)">7 X 150 = 1050</text><text x="675.6" y="348" font-size="3.3" fill="#00e5e5" textLength="8" lengthAdjust="spacingAndGlyphs" font-weight="bold" transform="rotate(-90 675.6 348)">2220</text><text x="563.8" y="428.6" font-size="7.2" fill="#151515" textLength="27" lengthAdjust="spacingAndGlyphs" font-weight="bold">SECTION</text><line x1="563.0999999999999" y1="429.8" x2="606.4" y2="429.8" stroke="#151515" stroke-width="1"/><polygon points="603.0,430.2 599.7,435.92 593.1,435.92 589.8,430.2 593.1,424.48 599.7,424.48" fill="none" stroke="#ff2a2a" stroke-width="1.1"/><text x="596.4" y="429.0" font-size="4.4" fill="#151515" text-anchor="middle" font-weight="bold">B</text><text x="596.4" y="433.8" font-size="4" fill="#ff2a2a" text-anchor="middle">-</text><text x="565.0999999999999" y="434.1" font-size="3.4" fill="#00e5e5" textLength="24.5" lengthAdjust="spacingAndGlyphs" font-weight="bold">SCALE  1 : 20</text></g>
<g id="v_secC"><line x1="259.8" y1="450.5" x2="259.8" y2="469.13" stroke="#7db9f2" stroke-width="0.9"/><line x1="282.40000000000003" y1="450.5" x2="282.40000000000003" y2="469.13" stroke="#7db9f2" stroke-width="0.9"/><rect x="255.71" y="469.13" width="30.79" height="2.84" fill="none" stroke="#7db9f2" stroke-width="0.9"/><line x1="255.705" y1="470.55" x2="286.495" y2="470.55" stroke="#7db9f2" stroke-width="0.7200000000000001"/><rect x="253.25" y="471.97" width="35.7" height="4.37" fill="none" stroke="#7db9f2" stroke-width="0.9"/><line x1="253.24800000000002" y1="474.16" x2="288.952" y2="474.16" stroke="#7db9f2" stroke-width="0.7200000000000001"/><rect x="251.79" y="476.35" width="38.62" height="3.72" fill="none" stroke="#7db9f2" stroke-width="0.9"/><line x1="251.79200000000003" y1="478.21" x2="290.408" y2="478.21" stroke="#7db9f2" stroke-width="0.7200000000000001"/><rect x="250.7" y="480.06" width="40.8" height="10.94" fill="none" stroke="#7db9f2" stroke-width="0.9"/><path d="M250.70 490.34 Q251.72 484.07 255.80 481.38 Q259.88 484.07 260.90 490.34" fill="none" stroke="#7db9f2" stroke-width="0.9"/><path d="M252.94 490.34 Q253.76 486.31 255.80 484.52 Q257.84 486.31 258.66 490.34" fill="none" stroke="#7db9f2" stroke-width="0.7200000000000001"/><path d="M260.90 490.34 Q261.92 484.07 266.00 481.38 Q270.08 484.07 271.10 490.34" fill="none" stroke="#7db9f2" stroke-width="0.9"/><path d="M263.14 490.34 Q263.96 486.31 266.00 484.52 Q268.04 486.31 268.86 490.34" fill="none" stroke="#7db9f2" stroke-width="0.7200000000000001"/><path d="M271.10 490.34 Q272.12 484.07 276.20 481.38 Q280.28 484.07 281.30 490.34" fill="none" stroke="#7db9f2" stroke-width="0.9"/><path d="M273.34 490.34 Q274.16 486.31 276.20 484.52 Q278.24 486.31 279.06 490.34" fill="none" stroke="#7db9f2" stroke-width="0.7200000000000001"/><path d="M281.30 490.34 Q282.32 484.07 286.40 481.38 Q290.48 484.07 291.50 490.34" fill="none" stroke="#7db9f2" stroke-width="0.9"/><path d="M283.54 490.34 Q284.36 486.31 286.40 484.52 Q288.44 486.31 289.26 490.34" fill="none" stroke="#7db9f2" stroke-width="0.7200000000000001"/><line x1="250.3" y1="491" x2="250.3" y2="503.5" stroke="#7db9f2" stroke-width="0.9"/><line x1="291" y1="491" x2="291" y2="503.5" stroke="#7db9f2" stroke-width="0.9"/><line x1="369.1" y1="450.5" x2="369.1" y2="473.71" stroke="#7db9f2" stroke-width="0.9"/><line x1="385.5" y1="450.5" x2="385.5" y2="473.71" stroke="#7db9f2" stroke-width="0.9"/><rect x="365.95" y="473.71" width="22.7" height="2.47" fill="none" stroke="#7db9f2" stroke-width="0.9"/><line x1="365.95" y1="474.94" x2="388.65000000000003" y2="474.94" stroke="#7db9f2" stroke-width="0.7200000000000001"/><rect x="364.06" y="476.18" width="26.48" height="3.8" fill="none" stroke="#7db9f2" stroke-width="0.9"/><line x1="364.06" y1="478.08" x2="390.54" y2="478.08" stroke="#7db9f2" stroke-width="0.7200000000000001"/><rect x="362.94" y="479.98" width="28.72" height="3.23" fill="none" stroke="#7db9f2" stroke-width="0.9"/><line x1="362.94" y1="481.59" x2="391.66" y2="481.59" stroke="#7db9f2" stroke-width="0.7200000000000001"/><rect x="362.1" y="483.2" width="30.4" height="9.5" fill="none" stroke="#7db9f2" stroke-width="0.9"/><path d="M362.10 492.13 Q363.11 486.68 367.17 484.34 Q371.22 486.68 372.23 492.13" fill="none" stroke="#7db9f2" stroke-width="0.9"/><path d="M364.33 492.13 Q365.14 488.63 367.17 487.07 Q369.19 488.63 370.00 492.13" fill="none" stroke="#7db9f2" stroke-width="0.7200000000000001"/><path d="M372.23 492.13 Q373.25 486.68 377.30 484.34 Q381.35 486.68 382.37 492.13" fill="none" stroke="#7db9f2" stroke-width="0.9"/><path d="M374.46 492.13 Q375.27 488.63 377.30 487.07 Q379.33 488.63 380.14 492.13" fill="none" stroke="#7db9f2" stroke-width="0.7200000000000001"/><path d="M382.37 492.13 Q383.38 486.68 387.43 484.34 Q391.49 486.68 392.50 492.13" fill="none" stroke="#7db9f2" stroke-width="0.9"/><path d="M384.60 492.13 Q385.41 488.63 387.43 487.07 Q389.46 488.63 390.27 492.13" fill="none" stroke="#7db9f2" stroke-width="0.7200000000000001"/><line x1="362.7" y1="492.7" x2="362.7" y2="527.8" stroke="#7db9f2" stroke-width="0.9"/><line x1="392.5" y1="492.7" x2="392.5" y2="527.8" stroke="#7db9f2" stroke-width="0.9"/><line x1="271.1" y1="442" x2="271.1" y2="627" stroke="#8e4a4a" stroke-width="1.1" stroke-dasharray="11 2 2 2"/><line x1="377.7" y1="443" x2="377.7" y2="627" stroke="#8e4a4a" stroke-width="1.1" stroke-dasharray="11 2 2 2"/><line x1="291" y1="493.4" x2="362.7" y2="493.4" stroke="#f5f500" stroke-width="2"/><line x1="363" y1="493.4" x2="454.6" y2="493.4" stroke="#3a4a7a" stroke-width="1" stroke-dasharray="3.5 2"/><line x1="333" y1="506.8" x2="454.6" y2="506.8" stroke="#3a4a7a" stroke-width="1" stroke-dasharray="3.5 2"/><rect x="301.8" y="471.2" width="16.9" height="7" fill="none" stroke="#ff2a2a" stroke-width="1.1"/><text x="310.25" y="476.5" font-size="5" fill="#00e5e5" text-anchor="middle">S-2</text><rect x="301.8" y="482.2" width="16.9" height="7" fill="none" stroke="#ff2a2a" stroke-width="1.1"/><text x="310.25" y="487.5" font-size="5" fill="#00e5e5" text-anchor="middle">S-1</text><polyline points="318.7,474.7 332.8,474.7 344.5,493.4" fill="none" stroke="#828282" stroke-width="0.9"/><polyline points="318.7,485.7 331.6,485.7 346.8,510.3" fill="none" stroke="#828282" stroke-width="0.9"/><line x1="343.6" y1="491.5" x2="345.3" y2="494.5" stroke="#00e5e5" stroke-width="1"/><line x1="233.2" y1="506.9" x2="250.3" y2="506.9" stroke="#f5f500" stroke-width="1.2"/><path d="M233.2 507.2H331.2V515.9H325V511.4H276.5V526.7H266V511.4H233.2Z" fill="#3e3e3e"/><rect x="250.3" y="503.7" width="83.5" height="3.8" fill="#e8e8e8" stroke="#828282" stroke-width="0.7"/><line x1="252.83" y1="503.7" x2="252.83" y2="507.5" stroke="#828282" stroke-width="0.6"/><line x1="255.36" y1="503.7" x2="255.36" y2="507.5" stroke="#828282" stroke-width="0.6"/><line x1="257.89" y1="503.7" x2="257.89" y2="507.5" stroke="#828282" stroke-width="0.6"/><line x1="260.42" y1="503.7" x2="260.42" y2="507.5" stroke="#828282" stroke-width="0.6"/><line x1="262.95" y1="503.7" x2="262.95" y2="507.5" stroke="#828282" stroke-width="0.6"/><line x1="265.48" y1="503.7" x2="265.48" y2="507.5" stroke="#828282" stroke-width="0.6"/><line x1="268.01" y1="503.7" x2="268.01" y2="507.5" stroke="#828282" stroke-width="0.6"/><line x1="270.54" y1="503.7" x2="270.54" y2="507.5" stroke="#828282" stroke-width="0.6"/><line x1="273.07" y1="503.7" x2="273.07" y2="507.5" stroke="#828282" stroke-width="0.6"/><line x1="275.6" y1="503.7" x2="275.6" y2="507.5" stroke="#828282" stroke-width="0.6"/><line x1="278.13" y1="503.7" x2="278.13" y2="507.5" stroke="#828282" stroke-width="0.6"/><line x1="280.66" y1="503.7" x2="280.66" y2="507.5" stroke="#828282" stroke-width="0.6"/><line x1="283.19" y1="503.7" x2="283.19" y2="507.5" stroke="#828282" stroke-width="0.6"/><line x1="285.72" y1="503.7" x2="285.72" y2="507.5" stroke="#828282" stroke-width="0.6"/><line x1="288.25" y1="503.7" x2="288.25" y2="507.5" stroke="#828282" stroke-width="0.6"/><line x1="290.78" y1="503.7" x2="290.78" y2="507.5" stroke="#828282" stroke-width="0.6"/><line x1="293.31" y1="503.7" x2="293.31" y2="507.5" stroke="#828282" stroke-width="0.6"/><line x1="295.84" y1="503.7" x2="295.84" y2="507.5" stroke="#828282" stroke-width="0.6"/><line x1="298.37" y1="503.7" x2="298.37" y2="507.5" stroke="#828282" stroke-width="0.6"/><line x1="300.9" y1="503.7" x2="300.9" y2="507.5" stroke="#828282" stroke-width="0.6"/><line x1="303.43" y1="503.7" x2="303.43" y2="507.5" stroke="#828282" stroke-width="0.6"/><line x1="305.96" y1="503.7" x2="305.96" y2="507.5" stroke="#828282" stroke-width="0.6"/><line x1="308.49" y1="503.7" x2="308.49" y2="507.5" stroke="#828282" stroke-width="0.6"/><line x1="311.02" y1="503.7" x2="311.02" y2="507.5" stroke="#828282" stroke-width="0.6"/><line x1="313.55" y1="503.7" x2="313.55" y2="507.5" stroke="#828282" stroke-width="0.6"/><line x1="316.08" y1="503.7" x2="316.08" y2="507.5" stroke="#828282" stroke-width="0.6"/><line x1="318.61" y1="503.7" x2="318.61" y2="507.5" stroke="#828282" stroke-width="0.6"/><line x1="321.14" y1="503.7" x2="321.14" y2="507.5" stroke="#828282" stroke-width="0.6"/><line x1="323.67" y1="503.7" x2="323.67" y2="507.5" stroke="#828282" stroke-width="0.6"/><line x1="326.2" y1="503.7" x2="326.2" y2="507.5" stroke="#828282" stroke-width="0.6"/><line x1="328.73" y1="503.7" x2="328.73" y2="507.5" stroke="#828282" stroke-width="0.6"/><line x1="331.26" y1="503.7" x2="331.26" y2="507.5" stroke="#828282" stroke-width="0.6"/><text x="288.7" y="501.4" font-size="6" fill="#00e5e5" textLength="19" lengthAdjust="spacingAndGlyphs">LOBBY</text><text x="287" y="504.5" font-size="3.3" fill="#00e5e5" textLength="12" lengthAdjust="spacingAndGlyphs" font-weight="bold">+20120</text><path d="M292.5 505.6h4l-2 2.4z" fill="#ff2a2a"/><line x1="266" y1="526.7" x2="266" y2="615.2" stroke="#ff10ff" stroke-width="1.2"/><line x1="276.5" y1="526.7" x2="276.5" y2="615.2" stroke="#ff10ff" stroke-width="1.2"/><polygon points="325,506.9 331.2,506.9 331.2,511.05 339.3,511.05 339.3,515.2 347.4,515.2 347.4,519.35 355.5,519.35 355.5,523.5 363.6,523.5 363.6,527.65 371.7,527.65 371.8,531.1 423,531.1 423,535.6 382,535.6 382,550.1 371.8,550.1 371.8,536.2 331.2,515.9 325,515.9" fill="#3e3e3e" stroke="none" stroke-width="0"/><polyline points="331.2,506.9 331.2,511.05 339.3,511.05 339.3,515.2 347.4,515.2 347.4,519.35 355.5,519.35 355.5,523.5 363.6,523.5 363.6,527.65 371.7,527.65" fill="none" stroke="#f5f500" stroke-width="0.9"/><rect x="331.8" y="507.5" width="3.4" height="3.4" fill="#f4f4c0" stroke="#828282" stroke-width="0.7"/><rect x="335.8" y="503.7" width="3" height="3.4" fill="none" stroke="#3a4a7a" stroke-width="0.7"/><text x="334.7" y="512.7" font-size="3" fill="#00e5e5" font-weight="bold">1</text><rect x="339.9" y="511.65" width="3.4" height="3.4" fill="#f4f4c0" stroke="#828282" stroke-width="0.7"/><rect x="343.9" y="507.85" width="3" height="3.4" fill="none" stroke="#3a4a7a" stroke-width="0.7"/><text x="342.8" y="516.85" font-size="3" fill="#00e5e5" font-weight="bold">2</text><rect x="348.0" y="515.8" width="3.4" height="3.4" fill="#f4f4c0" stroke="#828282" stroke-width="0.7"/><rect x="352.0" y="512.0" width="3" height="3.4" fill="none" stroke="#3a4a7a" stroke-width="0.7"/><text x="350.9" y="521.0" font-size="3" fill="#00e5e5" font-weight="bold">3</text><rect x="356.1" y="519.95" width="3.4" height="3.4" fill="#f4f4c0" stroke="#828282" stroke-width="0.7"/><rect x="360.1" y="516.15" width="3" height="3.4" fill="none" stroke="#3a4a7a" stroke-width="0.7"/><text x="359.0" y="525.15" font-size="3" fill="#00e5e5" font-weight="bold">4</text><rect x="364.2" y="524.1" width="3.4" height="3.4" fill="#f4f4c0" stroke="#828282" stroke-width="0.7"/><rect x="368.2" y="520.3" width="3" height="3.4" fill="none" stroke="#3a4a7a" stroke-width="0.7"/><text x="367.1" y="529.3" font-size="3" fill="#00e5e5" font-weight="bold">5</text><rect x="371.6" y="527.8" width="21" height="3.6" fill="#e8e8e8" stroke="#828282" stroke-width="0.7"/><line x1="374.2" y1="527.8" x2="374.2" y2="531.4" stroke="#828282" stroke-width="0.6"/><line x1="376.8" y1="527.8" x2="376.8" y2="531.4" stroke="#828282" stroke-width="0.6"/><line x1="379.4" y1="527.8" x2="379.4" y2="531.4" stroke="#828282" stroke-width="0.6"/><line x1="382.0" y1="527.8" x2="382.0" y2="531.4" stroke="#828282" stroke-width="0.6"/><line x1="384.6" y1="527.8" x2="384.6" y2="531.4" stroke="#828282" stroke-width="0.6"/><line x1="387.2" y1="527.8" x2="387.2" y2="531.4" stroke="#828282" stroke-width="0.6"/><line x1="389.8" y1="527.8" x2="389.8" y2="531.4" stroke="#828282" stroke-width="0.6"/><line x1="392.5" y1="530.7" x2="423" y2="530.7" stroke="#f5f500" stroke-width="1.2"/><text x="393.2" y="529.5" font-size="6" fill="#00e5e5" textLength="39" lengthAdjust="spacingAndGlyphs">RESTAURANT</text><line x1="426.5" y1="530.3" x2="476.8" y2="530.3" stroke="#ff2a2a" stroke-width="1"/><path d="M452.6 530.3h4l-2 2.6z" fill="#ff2a2a"/><text x="427.5" y="529.4" font-size="3.6" fill="#00e5e5" textLength="46" lengthAdjust="spacingAndGlyphs" font-weight="bold">GROUND FLOOR+ 20120</text><path d="M345.8 615.2V558.8H371.4" fill="none" stroke="#00e5e5" stroke-width="1.6"/><line x1="345.8" y1="560.2" x2="371.4" y2="560.2" stroke="#00e5e5" stroke-width="0.7"/><line x1="371.4" y1="550.1" x2="371.4" y2="615.2" stroke="#00e5e5" stroke-width="1.1"/><line x1="371.4" y1="535" x2="371.4" y2="627" stroke="#3a4a7a" stroke-width="0.8"/><rect x="375" y="550.1" width="3.4" height="65" fill="#ffb0a0" stroke="#ff2a2a" stroke-width="0.9"/><line x1="376.7" y1="550.1" x2="376.7" y2="615.2" stroke="#3a4a7a" stroke-width="0.8" stroke-dasharray="1.2 1.2"/><line x1="373.6" y1="550.1" x2="373.6" y2="615.2" stroke="#f5f500" stroke-width="0.9"/><line x1="379.8" y1="550.1" x2="379.8" y2="615.2" stroke="#f5f500" stroke-width="0.9"/><line x1="382.4" y1="535.6" x2="382.4" y2="615.2" stroke="#ff10ff" stroke-width="1.2"/><line x1="233.2" y1="615.3" x2="423" y2="615.3" stroke="#f5f500" stroke-width="1.6"/><line x1="233.2" y1="615.3" x2="423" y2="615.3" stroke="#c8a000" stroke-width="0.6" stroke-dasharray="1 1"/><rect x="233.2" y="616.9" width="189.8" height="5.8" fill="#3e3e3e"/><text x="384.3" y="614.5" font-size="6" fill="#00e5e5" textLength="59.7" lengthAdjust="spacingAndGlyphs">CORIDOR CHANGING</text><line x1="426.5" y1="615.8" x2="476.8" y2="615.8" stroke="#ff2a2a" stroke-width="1"/><path d="M452.6 615.8h4l-2 2.6z" fill="#ff2a2a"/><text x="427.5" y="614.9" font-size="3.6" fill="#00e5e5" textLength="46" lengthAdjust="spacingAndGlyphs" font-weight="bold">BASEMENT FLOOR+ 17900</text><line x1="454.6" y1="493.4" x2="454.6" y2="615.8" stroke="#828282" stroke-width="0.9"/><line x1="451" y1="493.4" x2="456.5" y2="493.4" stroke="#151515" stroke-width="0.8"/><line x1="451" y1="506.8" x2="456.5" y2="506.8" stroke="#151515" stroke-width="0.8"/><text x="453.7" y="502.5" font-size="3.2" fill="#00e5e5" textLength="6" lengthAdjust="spacingAndGlyphs" font-weight="bold" transform="rotate(-90 453.7 502.5)">300</text><text x="453.7" y="526" font-size="3.2" fill="#00e5e5" textLength="17" lengthAdjust="spacingAndGlyphs" font-weight="bold" transform="rotate(-90 453.7 526)">6 X 150 = 900</text><text x="453.7" y="577" font-size="3.3" fill="#00e5e5" textLength="8" lengthAdjust="spacingAndGlyphs" font-weight="bold" transform="rotate(-90 453.7 577)">2220</text><line x1="331.6" y1="510.3" x2="331.6" y2="627.4" stroke="#3a4a7a" stroke-width="0.9" stroke-dasharray="2.5 1.8"/><line x1="270.7" y1="641.5" x2="379.6" y2="641.5" stroke="#828282" stroke-width="0.9"/><line x1="271.1" y1="628" x2="271.1" y2="643" stroke="#828282" stroke-width="0.9"/><line x1="331.6" y1="628" x2="331.6" y2="643" stroke="#828282" stroke-width="0.9"/><line x1="372.1" y1="628" x2="372.1" y2="643" stroke="#828282" stroke-width="0.9"/><line x1="377.7" y1="628" x2="377.7" y2="643" stroke="#828282" stroke-width="0.9"/><text x="297" y="640.6" font-size="3.3" fill="#00e5e5" textLength="8" lengthAdjust="spacingAndGlyphs" font-weight="bold">4200</text><text x="348" y="640.6" font-size="3.3" fill="#00e5e5" textLength="8" lengthAdjust="spacingAndGlyphs" font-weight="bold">2100</text><text x="372.4" y="640.6" font-size="3" fill="#00e5e5" font-weight="bold">320</text><text x="303.9" y="662.3" font-size="7.2" fill="#151515" textLength="25.8" lengthAdjust="spacingAndGlyphs" font-weight="bold">SECTION</text><line x1="303.2" y1="663.5" x2="345.8" y2="663.5" stroke="#151515" stroke-width="1"/><polygon points="342.4,663.9 339.1,669.62 332.5,669.62 329.2,663.9 332.5,658.18 339.1,658.18" fill="none" stroke="#ff2a2a" stroke-width="1.1"/><text x="335.8" y="662.6999999999999" font-size="4.4" fill="#151515" text-anchor="middle" font-weight="bold">C</text><text x="335.8" y="667.5" font-size="4" fill="#ff2a2a" text-anchor="middle">-</text><text x="305.2" y="667.8" font-size="3.4" fill="#00e5e5" textLength="24.5" lengthAdjust="spacingAndGlyphs" font-weight="bold">SCALE  1 : 20</text></g>
<g id="v_secD"><line x1="721.3" y1="277.4" x2="769.8" y2="277.4" stroke="#ff2a2a" stroke-width="1"/><path d="M747.3 277.4h4l-2 2.6z" fill="#ff2a2a"/><text x="722.5" y="276.5" font-size="3.6" fill="#00e5e5" textLength="46" lengthAdjust="spacingAndGlyphs" font-weight="bold">GROUND FLOOR+ 20120</text><line x1="721.3" y1="363.3" x2="772.2" y2="363.3" stroke="#ff2a2a" stroke-width="1"/><path d="M747.3 363.3h4l-2 2.6z" fill="#ff2a2a"/><text x="722.5" y="362.40000000000003" font-size="3.6" fill="#00e5e5" textLength="48" lengthAdjust="spacingAndGlyphs" font-weight="bold">BASEMENT FLOOR+ 17900</text><line x1="749.3" y1="279.5" x2="749.3" y2="363.3" stroke="#828282" stroke-width="0.9"/><text x="748.3" y="324" font-size="3.4" fill="#00e5e5" textLength="8" lengthAdjust="spacingAndGlyphs" font-weight="bold" transform="rotate(-90 748.3 324)">2220</text><line x1="744" y1="363.3" x2="750" y2="363.3" stroke="#151515" stroke-width="0.9"/><line x1="773.1" y1="277.4" x2="817" y2="277.4" stroke="#f5f500" stroke-width="1.2"/><text x="782.7" y="270" font-size="6" fill="#00e5e5" textLength="38.5" lengthAdjust="spacingAndGlyphs">RESTAURANT</text><polygon points="773.1,278.2 826.5,278.2 834.55,278.2 834.55,283.04 842.6,283.04 842.6,287.88 850.65,287.88 850.65,292.72 858.7,292.72 858.7,297.56 866.75,297.56 866.75,302.4 874.8,302.4 874.8,307.24 915.6,307.24 923.62,307.24 923.62,312.59 931.64,312.59 931.64,317.94 939.66,317.94 939.66,323.29 947.68,323.29 947.68,328.64 955.7,328.64 955.7,333.99 963.72,333.99 963.72,339.34 971.74,339.34 971.74,344.69 979.76,344.69 979.76,350.04 987.78,350.04 987.78,355.39 1017.6,355.39 1017.6,359.19 860.2,359.19 860.2,355.39 979.4,355.39 904.8,313.94 872.4,313.94 825.8,287.3 825.8,297.6 817,297.6 817,282.4 773.1,282.4" fill="#3e3e3e" stroke="none" stroke-width="0"/><polyline points="826.5,278.2 834.55,278.2 834.55,283.04 842.6,283.04 842.6,287.88 850.65,287.88 850.65,292.72 858.7,292.72 858.7,297.56 866.75,297.56 866.75,302.4 874.8,302.4 874.8,307.24 915.6,307.24 923.62,307.24 923.62,312.59 931.64,312.59 931.64,317.94 939.66,317.94 939.66,323.29 947.68,323.29 947.68,328.64 955.7,328.64 955.7,333.99 963.72,333.99 963.72,339.34 971.74,339.34 971.74,344.69 979.76,344.69 979.76,350.04 987.78,350.04 987.78,355.39 1017.6,355.39" fill="none" stroke="#f5f500" stroke-width="0.9" transform="translate(0,-0.8)"/><rect x="817" y="274.6" width="12.5" height="3.3" fill="#eee" stroke="#828282" stroke-width="0.7"/><line x1="819.5" y1="274.6" x2="819.5" y2="277.9" stroke="#828282" stroke-width="0.6"/><line x1="822.0" y1="274.6" x2="822.0" y2="277.9" stroke="#828282" stroke-width="0.6"/><line x1="824.5" y1="274.6" x2="824.5" y2="277.9" stroke="#828282" stroke-width="0.6"/><line x1="827.0" y1="274.6" x2="827.0" y2="277.9" stroke="#828282" stroke-width="0.6"/><rect x="834.25" y="275.0" width="2.6" height="2.8" fill="none" stroke="#828282" stroke-width="0.7"/><rect x="836.95" y="279.8" width="2.6" height="2.8" fill="none" stroke="#828282" stroke-width="0.7"/><text x="837.55" y="281.8" font-size="3" fill="#00e5e5" font-weight="bold">16</text><rect x="842.3" y="279.84" width="2.6" height="2.8" fill="none" stroke="#828282" stroke-width="0.7"/><rect x="845.0" y="284.64" width="2.6" height="2.8" fill="none" stroke="#828282" stroke-width="0.7"/><text x="845.6" y="286.64" font-size="3" fill="#00e5e5" font-weight="bold">15</text><rect x="850.35" y="284.68" width="2.6" height="2.8" fill="none" stroke="#828282" stroke-width="0.7"/><rect x="853.05" y="289.48" width="2.6" height="2.8" fill="none" stroke="#828282" stroke-width="0.7"/><text x="853.65" y="291.48" font-size="3" fill="#00e5e5" font-weight="bold">14</text><rect x="858.4" y="289.52" width="2.6" height="2.8" fill="none" stroke="#828282" stroke-width="0.7"/><rect x="861.1" y="294.32" width="2.6" height="2.8" fill="none" stroke="#828282" stroke-width="0.7"/><text x="861.7" y="296.32" font-size="3" fill="#00e5e5" font-weight="bold">13</text><rect x="866.45" y="294.36" width="2.6" height="2.8" fill="none" stroke="#828282" stroke-width="0.7"/><rect x="869.15" y="299.16" width="2.6" height="2.8" fill="none" stroke="#828282" stroke-width="0.7"/><text x="869.75" y="301.16" font-size="3" fill="#00e5e5" font-weight="bold">12</text><rect x="874.5" y="299.2" width="2.6" height="2.8" fill="none" stroke="#828282" stroke-width="0.7"/><rect x="877.2" y="304.0" width="2.6" height="2.8" fill="none" stroke="#828282" stroke-width="0.7"/><text x="877.8" y="306.0" font-size="3" fill="#00e5e5" font-weight="bold">11</text><rect x="923.32" y="304.04" width="2.6" height="2.8" fill="none" stroke="#828282" stroke-width="0.7"/><rect x="926.02" y="308.84" width="2.6" height="2.8" fill="none" stroke="#828282" stroke-width="0.7"/><text x="926.62" y="310.84" font-size="3" fill="#00e5e5" font-weight="bold">10</text><rect x="931.34" y="309.39" width="2.6" height="2.8" fill="none" stroke="#828282" stroke-width="0.7"/><rect x="934.04" y="314.19" width="2.6" height="2.8" fill="none" stroke="#828282" stroke-width="0.7"/><text x="934.64" y="316.19" font-size="3" fill="#00e5e5" font-weight="bold">9</text><rect x="939.36" y="314.74" width="2.6" height="2.8" fill="none" stroke="#828282" stroke-width="0.7"/><rect x="942.06" y="319.54" width="2.6" height="2.8" fill="none" stroke="#828282" stroke-width="0.7"/><text x="942.66" y="321.54" font-size="3" fill="#00e5e5" font-weight="bold">8</text><rect x="947.38" y="320.09" width="2.6" height="2.8" fill="none" stroke="#828282" stroke-width="0.7"/><rect x="950.08" y="324.89" width="2.6" height="2.8" fill="none" stroke="#828282" stroke-width="0.7"/><text x="950.68" y="326.89" font-size="3" fill="#00e5e5" font-weight="bold">7</text><rect x="955.4" y="325.44" width="2.6" height="2.8" fill="none" stroke="#828282" stroke-width="0.7"/><rect x="958.1" y="330.24" width="2.6" height="2.8" fill="none" stroke="#828282" stroke-width="0.7"/><text x="958.7" y="332.24" font-size="3" fill="#00e5e5" font-weight="bold">6</text><rect x="963.42" y="330.79" width="2.6" height="2.8" fill="none" stroke="#828282" stroke-width="0.7"/><rect x="966.12" y="335.59" width="2.6" height="2.8" fill="none" stroke="#828282" stroke-width="0.7"/><text x="966.72" y="337.59" font-size="3" fill="#00e5e5" font-weight="bold">5</text><rect x="971.44" y="336.14" width="2.6" height="2.8" fill="none" stroke="#828282" stroke-width="0.7"/><rect x="974.14" y="340.94" width="2.6" height="2.8" fill="none" stroke="#828282" stroke-width="0.7"/><text x="974.74" y="342.94" font-size="3" fill="#00e5e5" font-weight="bold">4</text><rect x="979.46" y="341.49" width="2.6" height="2.8" fill="none" stroke="#828282" stroke-width="0.7"/><rect x="982.16" y="346.29" width="2.6" height="2.8" fill="none" stroke="#828282" stroke-width="0.7"/><text x="982.76" y="348.29" font-size="3" fill="#00e5e5" font-weight="bold">3</text><rect x="987.48" y="346.84" width="2.6" height="2.8" fill="none" stroke="#828282" stroke-width="0.7"/><rect x="990.18" y="351.64" width="2.6" height="2.8" fill="none" stroke="#828282" stroke-width="0.7"/><text x="990.78" y="353.64" font-size="3" fill="#00e5e5" font-weight="bold">2</text><rect x="874.8" y="303.83999999999986" width="40.8" height="2.8" fill="#eee" stroke="#828282" stroke-width="0.7"/><line x1="877.35" y1="303.83999999999986" x2="877.35" y2="306.6399999999998" stroke="#828282" stroke-width="0.6"/><line x1="879.9" y1="303.83999999999986" x2="879.9" y2="306.6399999999998" stroke="#828282" stroke-width="0.6"/><line x1="882.45" y1="303.83999999999986" x2="882.45" y2="306.6399999999998" stroke="#828282" stroke-width="0.6"/><line x1="885.0" y1="303.83999999999986" x2="885.0" y2="306.6399999999998" stroke="#828282" stroke-width="0.6"/><line x1="887.55" y1="303.83999999999986" x2="887.55" y2="306.6399999999998" stroke="#828282" stroke-width="0.6"/><line x1="890.1" y1="303.83999999999986" x2="890.1" y2="306.6399999999998" stroke="#828282" stroke-width="0.6"/><line x1="892.65" y1="303.83999999999986" x2="892.65" y2="306.6399999999998" stroke="#828282" stroke-width="0.6"/><line x1="895.2" y1="303.83999999999986" x2="895.2" y2="306.6399999999998" stroke="#828282" stroke-width="0.6"/><line x1="897.75" y1="303.83999999999986" x2="897.75" y2="306.6399999999998" stroke="#828282" stroke-width="0.6"/><line x1="900.3" y1="303.83999999999986" x2="900.3" y2="306.6399999999998" stroke="#828282" stroke-width="0.6"/><line x1="902.85" y1="303.83999999999986" x2="902.85" y2="306.6399999999998" stroke="#828282" stroke-width="0.6"/><line x1="905.4" y1="303.83999999999986" x2="905.4" y2="306.6399999999998" stroke="#828282" stroke-width="0.6"/><line x1="907.95" y1="303.83999999999986" x2="907.95" y2="306.6399999999998" stroke="#828282" stroke-width="0.6"/><line x1="910.5" y1="303.83999999999986" x2="910.5" y2="306.6399999999998" stroke="#828282" stroke-width="0.6"/><line x1="913.05" y1="303.83999999999986" x2="913.05" y2="306.6399999999998" stroke="#828282" stroke-width="0.6"/><line x1="829.5" y1="277.4" x2="1002.6" y2="277.4" stroke="#3a4a7a" stroke-width="1" stroke-dasharray="2.5 1.8"/><line x1="874.6" y1="273" x2="874.6" y2="306" stroke="#3a4a7a" stroke-width="0.9" stroke-dasharray="1.8 1.5"/><line x1="915.1" y1="273" x2="915.1" y2="306" stroke="#3a4a7a" stroke-width="0.9" stroke-dasharray="1.8 1.5"/><line x1="987.4" y1="273" x2="987.4" y2="353" stroke="#828282" stroke-width="0.9" stroke-dasharray="1.8 1.5"/><line x1="1002.1" y1="276.5" x2="1002.1" y2="356.2" stroke="#828282" stroke-width="0.9"/><line x1="994" y1="350" x2="1004" y2="350" stroke="#828282" stroke-width="0.8"/><circle cx="1002.6" cy="277.4" r="0.9" fill="#151515"/><line x1="818.7" y1="263.2" x2="987.7" y2="263.2" stroke="#828282" stroke-width="0.9"/><line x1="821.2" y1="262" x2="821.2" y2="275" stroke="#828282" stroke-width="0.9"/><circle cx="821.2" cy="263.2" r="0.8" fill="#151515"/><line x1="826.5" y1="262" x2="826.5" y2="275" stroke="#828282" stroke-width="0.9"/><circle cx="826.5" cy="263.2" r="0.8" fill="#151515"/><line x1="874.7" y1="262" x2="874.7" y2="275" stroke="#828282" stroke-width="0.9"/><circle cx="874.7" cy="263.2" r="0.8" fill="#151515"/><line x1="915" y1="262" x2="915" y2="275" stroke="#828282" stroke-width="0.9"/><circle cx="915" cy="263.2" r="0.8" fill="#151515"/><line x1="987.7" y1="262" x2="987.7" y2="275" stroke="#828282" stroke-width="0.9"/><circle cx="987.7" cy="263.2" r="0.8" fill="#151515"/><text x="821.5" y="262" font-size="3.2" fill="#00e5e5" textLength="5" lengthAdjust="spacingAndGlyphs" font-weight="bold">300</text><text x="836" y="262" font-size="3.3" fill="#00e5e5" textLength="30" lengthAdjust="spacingAndGlyphs" font-weight="bold">6 X 300 = 1800</text><text x="891.2" y="262" font-size="3.3" fill="#00e5e5" textLength="7.8" lengthAdjust="spacingAndGlyphs" font-weight="bold">1500</text><text x="936.3" y="262" font-size="3.3" fill="#00e5e5" textLength="29" lengthAdjust="spacingAndGlyphs" font-weight="bold">9 X 300 = 2700</text><line x1="815.9" y1="297.6" x2="815.9" y2="336.3" stroke="#f5f500" stroke-width="1.1"/><line x1="826.5" y1="289" x2="826.5" y2="336.3" stroke="#f5f500" stroke-width="1.1"/><line x1="929.4" y1="264.6" x2="929.4" y2="355.3" stroke="#f5f500" stroke-width="1.1"/><line x1="940.5" y1="264.6" x2="940.5" y2="355.3" stroke="#f5f500" stroke-width="1.1"/><line x1="855.9" y1="305.6" x2="855.9" y2="363.7" stroke="#ff2a2a" stroke-width="1.1"/><line x1="857.9" y1="305.6" x2="857.9" y2="363.7" stroke="#ff2a2a" stroke-width="0.9"/><line x1="859.5" y1="305.6" x2="859.5" y2="364" stroke="#f5f500" stroke-width="1.1"/><line x1="781.4" y1="336.3" x2="856" y2="336.3" stroke="#10e810" stroke-width="1.3"/><line x1="790.5" y1="336.3" x2="845.2" y2="336.3" stroke="#ff2a2a" stroke-width="1.3"/><path d="M781.6 336.3l1.3 -1l1.3 1l-1.3 1z" fill="#10e810"/><path d="M790.5 336.3l1.3 -1l1.3 1l-1.3 1z" fill="#10e810"/><path d="M845.2 336.3l1.3 -1l1.3 1l-1.3 1z" fill="#10e810"/><line x1="781.4" y1="350.4" x2="856" y2="350.4" stroke="#10e810" stroke-width="1.3"/><line x1="790.5" y1="350.4" x2="845.2" y2="350.4" stroke="#ff2a2a" stroke-width="1.3"/><path d="M781.6 350.4l1.3 -1l1.3 1l-1.3 1z" fill="#10e810"/><path d="M790.5 350.4l1.3 -1l1.3 1l-1.3 1z" fill="#10e810"/><path d="M845.2 350.4l1.3 -1l1.3 1l-1.3 1z" fill="#10e810"/><line x1="782.2" y1="336.3" x2="782.2" y2="363" stroke="#10e810" stroke-width="1.3"/><line x1="855.2" y1="336.3" x2="855.2" y2="363" stroke="#10e810" stroke-width="1.3"/><line x1="804.6" y1="336.3" x2="804.6" y2="363" stroke="#ff2a2a" stroke-width="1.2"/><line x1="773.1" y1="363.3" x2="859.3" y2="363.3" stroke="#f5f500" stroke-width="1.3"/><path d="M773.1 364.5H859.7V369.5H835.3V375.3H807.9V369.5H773.1Z" fill="#3e3e3e"/><line x1="864.3" y1="356" x2="864.3" y2="375" stroke="#8e4a4a" stroke-width="1"/><circle cx="864.3" cy="381.6" r="6.6" fill="#fff" stroke="#8e4a4a" stroke-width="1.1"/><text x="864.3" y="383.6" font-size="5" fill="#151515" text-anchor="middle" font-weight="bold">13</text><rect x="944.9" y="285.7" width="16.8" height="7.1" fill="none" stroke="#ff2a2a" stroke-width="1.1"/><text x="953.3" y="291.05" font-size="5" fill="#00e5e5" text-anchor="middle">S-1</text><polyline points="944.9,289.3 907.3,289.3 896.8,307.2" fill="none" stroke="#828282" stroke-width="0.9"/><text x="1000.6" y="330" font-size="3.4" fill="#00e5e5" textLength="31" lengthAdjust="spacingAndGlyphs" font-weight="bold" transform="rotate(-90 1000.6 330)">16 X 139 = 2220</text><text x="1004" y="348.2" font-size="6" fill="#00e5e5" textLength="34.3" lengthAdjust="spacingAndGlyphs">POOL DECK</text><text x="1008.5" y="352.4" font-size="3.6" fill="#00e5e5" textLength="13.5" lengthAdjust="spacingAndGlyphs" font-weight="bold">+18000</text><path d="M1012.3 353.4h4l-2 2.4z" fill="#ff2a2a"/><text x="885.9" y="399.3" font-size="7.2" fill="#151515" textLength="27.4" lengthAdjust="spacingAndGlyphs" font-weight="bold">SECTION</text><line x1="885.1999999999999" y1="400.5" x2="927.8" y2="400.5" stroke="#151515" stroke-width="1"/><polygon points="924.4,400.9 921.1,406.62 914.5,406.62 911.2,400.9 914.5,395.18 921.1,395.18" fill="none" stroke="#ff2a2a" stroke-width="1.1"/><text x="917.8" y="399.7" font-size="4.4" fill="#151515" text-anchor="middle" font-weight="bold">D</text><text x="917.8" y="404.5" font-size="4" fill="#ff2a2a" text-anchor="middle">-</text><text x="887.1999999999999" y="404.8" font-size="3.4" fill="#00e5e5" textLength="24.5" lengthAdjust="spacingAndGlyphs" font-weight="bold">SCALE  1 : 20</text></g>
<g id="v_secE"><text x="1047.1" y="348.2" font-size="6" fill="#00e5e5" textLength="34.8" lengthAdjust="spacingAndGlyphs">POOL DECK</text><text x="1050.7" y="352.4" font-size="3.6" fill="#00e5e5" textLength="14" lengthAdjust="spacingAndGlyphs" font-weight="bold">+18000</text><path d="M1055.4 353.2h4l-2 2.4z" fill="#ff2a2a"/><line x1="1044.1" y1="354.1" x2="1072.3" y2="354.1" stroke="#f5f500" stroke-width="1.2"/><rect x="1044.1" y="354.8" width="28.2" height="3.8" fill="#3e3e3e"/><rect x="1072.3" y="354.6" width="7.5" height="8.2" fill="#fff" stroke="#3e3e3e" stroke-width="1"/><line x1="1073" y1="354.4" x2="1079.8" y2="354.4" stroke="#ff10ff" stroke-width="1.4"/><path d="M1074.3 356v3.5a1.7 1.7 0 0 0 3.4 0v-3.5" fill="none" stroke="#151515" stroke-width="0.6"/><path d="M1079.8 362.8H1107.1V363.6H1133.7V369.4H1107.1V374.4H1079.8Z" fill="#3e3e3e"/><line x1="1108.5" y1="362.9" x2="1133.7" y2="362.9" stroke="#f5f500" stroke-width="1.2"/><path d="M1079.8 356.2H1090.5V360H1100.4V352.8H1090.5V356.2" fill="none" stroke="#f5f500" stroke-width="1.1"/><rect x="1080.5" y="356.8" width="9.5" height="5.6" fill="#fff" stroke="#828282" stroke-width="0.6"/><rect x="1100.4" y="352.8" width="1.2" height="9.8" fill="#f5f500"/><line x1="1088.1" y1="311" x2="1088.1" y2="353.7" stroke="#f5f500" stroke-width="1.1"/><line x1="1098.8" y1="311" x2="1098.8" y2="353.7" stroke="#f5f500" stroke-width="1.1"/><line x1="1093.5" y1="311" x2="1093.5" y2="383" stroke="#8e4a4a" stroke-width="1"/><line x1="1089" y1="349.5" x2="1102" y2="349.5" stroke="#828282" stroke-width="0.8"/><text x="1094.5" y="348.6" font-size="3" fill="#00e5e5" font-weight="bold">300</text><line x1="1107.5" y1="352.5" x2="1107.5" y2="365" stroke="#828282" stroke-width="0.8"/><line x1="1100" y1="355.6" x2="1109" y2="355.6" stroke="#828282" stroke-width="0.7"/><text x="1103" y="354.6" font-size="3" fill="#00e5e5" font-weight="bold">150</text><line x1="1102.2" y1="353" x2="1102.2" y2="363" stroke="#151515" stroke-width="0.7" stroke-dasharray="1 1"/><text x="1110" y="360.8" font-size="3.4" fill="#00e5e5" textLength="13.5" lengthAdjust="spacingAndGlyphs" font-weight="bold">+17200</text><path d="M1118.8 361.4h4l-2 2.4z" fill="#ff2a2a"/><line x1="1061" y1="357" x2="1061" y2="364.5" stroke="#828282" stroke-width="0.8"/><line x1="1060" y1="364.2" x2="1066" y2="364.2" stroke="#151515" stroke-width="0.7"/><text x="1058.5" y="362" font-size="3.4" fill="#00e5e5" font-weight="bold">A</text><line x1="1069.8" y1="382.7" x2="1108" y2="382.7" stroke="#828282" stroke-width="0.9"/><line x1="1072.3" y1="378" x2="1072.3" y2="384.5" stroke="#828282" stroke-width="0.9"/><line x1="1080.6" y1="378" x2="1080.6" y2="384.5" stroke="#828282" stroke-width="0.9"/><line x1="1093.5" y1="378" x2="1093.5" y2="384.5" stroke="#828282" stroke-width="0.9"/><line x1="1107.1" y1="378" x2="1107.1" y2="384.5" stroke="#828282" stroke-width="0.9"/><text x="1073.6" y="381.9" font-size="3" fill="#00e5e5" font-weight="bold">300</text><text x="1084" y="381.9" font-size="3" fill="#00e5e5" font-weight="bold">500</text><text x="1097.5" y="381.9" font-size="3" fill="#00e5e5" font-weight="bold">500</text><text x="1075.6" y="399.3" font-size="7.2" fill="#151515" textLength="27.4" lengthAdjust="spacingAndGlyphs" font-weight="bold">SECTION</text><line x1="1074.8999999999999" y1="400.5" x2="1117.6" y2="400.5" stroke="#151515" stroke-width="1"/><polygon points="1114.2,400.9 1110.9,406.62 1104.3,406.62 1101.0,400.9 1104.3,395.18 1110.9,395.18" fill="none" stroke="#ff2a2a" stroke-width="1.1"/><text x="1107.6" y="399.7" font-size="4.4" fill="#151515" text-anchor="middle" font-weight="bold">E</text><text x="1107.6" y="404.5" font-size="4" fill="#ff2a2a" text-anchor="middle">-</text><text x="1076.8999999999999" y="404.8" font-size="3.4" fill="#00e5e5" textLength="24.5" lengthAdjust="spacingAndGlyphs" font-weight="bold">SCALE  1 : 20</text></g>
<g id="v_plan6a"><defs><clipPath id="cp6a"><rect x="227.8" y="775.3" width="189.8" height="148.6"/></clipPath></defs><g clip-path="url(#cp6a)"><line x1="227.8" y1="910.1" x2="417.6" y2="910.1" stroke="#8e4a4a" stroke-width="1.1" stroke-dasharray="11 2.5 2.5 2.5"/><line x1="328.9" y1="778.3" x2="328.9" y2="929.2" stroke="#8e4a4a" stroke-width="1.1" stroke-dasharray="11 2.5 2.5 2.5"/><line x1="230.2" y1="814.8" x2="345" y2="929" stroke="#8e4a4a" stroke-width="1" stroke-dasharray="11 2.5 2.5 2.5"/><line x1="372" y1="805" x2="417.6" y2="851" stroke="#8e4a4a" stroke-width="1" stroke-dasharray="11 2.5 2.5 2.5"/><line x1="268" y1="925" x2="420" y2="773" stroke="#8e4a4a" stroke-width="1" stroke-dasharray="11 2.5 2.5 2.5"/><line x1="228" y1="903" x2="280" y2="851" stroke="#8e4a4a" stroke-width="1" stroke-dasharray="11 2.5 2.5 2.5"/><line x1="259.3" y1="775.8" x2="308.2" y2="827.2" stroke="#ff2a2a" stroke-width="1.1"/><line x1="261.5" y1="775.3" x2="310" y2="825.4" stroke="#ff2a2a" stroke-width="1.1"/><line x1="263.6" y1="775.3" x2="311.5" y2="824" stroke="#f5f500" stroke-width="1"/><line x1="259.3" y1="775.8" x2="263" y2="775.8" stroke="#ff2a2a" stroke-width="1"/><line x1="228.6" y1="904.3" x2="253.5" y2="879.4" stroke="#ff2a2a" stroke-width="1.1"/><line x1="230.6" y1="906.2" x2="255.3" y2="881.4" stroke="#ff2a2a" stroke-width="1.1"/><line x1="229.6" y1="905.3" x2="254.5" y2="880.4" stroke="#f5f500" stroke-width="0.9" stroke-dasharray="3 2"/><path d="M227.8 905.1L247.7 923.9H236L227.8 916Z" fill="#3e3e3e"/><line x1="403" y1="924" x2="417.6" y2="909.5" stroke="#ff2a2a" stroke-width="1.1"/><line x1="406" y1="924" x2="417.6" y2="912.5" stroke="#f5f500" stroke-width="1"/><line x1="409" y1="924" x2="417.6" y2="915.5" stroke="#ff2a2a" stroke-width="1.1"/><line x1="411" y1="775.3" x2="417.6" y2="782" stroke="#ff2a2a" stroke-width="1.1"/><line x1="413.5" y1="775.3" x2="417.6" y2="779.5" stroke="#f5f500" stroke-width="1"/><path d="M234.4 862.8A34 34 0 0 1 268.4 859.5" fill="none" stroke="#00e5e5" stroke-width="1.2"/><line x1="234.4" y1="862.8" x2="252" y2="880.5" stroke="#00e5e5" stroke-width="1.1"/><path d="M319.8 775.3A30 30 0 0 0 326 796.5" fill="none" stroke="#00e5e5" stroke-width="1.1"/><path d="M349.6 920.8A22 22 0 0 1 374.5 923" fill="none" stroke="#00e5e5" stroke-width="1.1"/><line x1="358" y1="910" x2="368" y2="929" stroke="#ff2a2a" stroke-width="1"/><g transform="translate(348.8 781.6) rotate(45)"><path d="M0.00 0V107.8M5.50 0V107.8M11.00 0V107.8M16.50 0V107.8M22.00 0V107.8M27.50 0V107.8M33.00 0V107.8M38.50 0V107.8M44.00 0V107.8M49.50 0V107.8M55.00 0V107.8M60.50 0V107.8M66.00 0V107.8M71.50 0V107.8M77.00 0V107.8M0 0.00H81M0 5.50H81M0 11.00H81M0 16.50H81M0 22.00H81M0 27.50H81M0 33.00H81M0 38.50H81M0 44.00H81M0 49.50H81M0 55.00H81M0 60.50H81M0 66.00H81M0 71.50H81M0 77.00H81M0 82.50H81M0 88.00H81M0 93.50H81M0 99.00H81M0 104.50H81" fill="none" stroke="#ff6c6c" stroke-width="0.9"/><rect x="0" y="0" width="81" height="107.8" fill="none" stroke="#ff2a2a" stroke-width="1.2"/><rect x="1.7" y="1.7" width="77.6" height="104.4" fill="none" stroke="#ff2a2a" stroke-width="0.9"/><path d="M-1.3 0V109.1H81" fill="none" stroke="#f5f500" stroke-width="1"/><line x1="40" y1="2" x2="40" y2="69" stroke="#ff2a2a" stroke-width="1.4"/><line x1="42" y1="2" x2="42" y2="69" stroke="#ff2a2a" stroke-width="1.1"/><line x1="43.3" y1="2" x2="43.3" y2="69" stroke="#f5f500" stroke-width="1.2"/><line x1="41" y1="60" x2="41" y2="69" stroke="#f5f500" stroke-width="1.2"/><line x1="2" y1="6.5" x2="40" y2="6.5" stroke="#ff10ff" stroke-width="1.1" stroke-dasharray="3.5 1.6"/><line x1="2" y1="14.55" x2="40" y2="14.55" stroke="#ff10ff" stroke-width="1.1" stroke-dasharray="3.5 1.6"/><line x1="2" y1="22.6" x2="40" y2="22.6" stroke="#ff10ff" stroke-width="1.1" stroke-dasharray="3.5 1.6"/><line x1="2" y1="30.65" x2="40" y2="30.65" stroke="#ff10ff" stroke-width="1.1" stroke-dasharray="3.5 1.6"/><line x1="2" y1="38.7" x2="40" y2="38.7" stroke="#ff10ff" stroke-width="1.1" stroke-dasharray="3.5 1.6"/><line x1="2" y1="46.75" x2="40" y2="46.75" stroke="#ff10ff" stroke-width="1.1" stroke-dasharray="3.5 1.6"/><line x1="2" y1="54.8" x2="40" y2="54.8" stroke="#ff10ff" stroke-width="1.1" stroke-dasharray="3.5 1.6"/><line x1="2" y1="62.85" x2="40" y2="62.85" stroke="#ff10ff" stroke-width="1.1" stroke-dasharray="3.5 1.6"/><text x="27" y="11.7" font-size="3.3" fill="#00e5e5" font-weight="bold" transform="rotate(-45 27 11.70)">1</text><text x="27" y="19.75" font-size="3.3" fill="#00e5e5" font-weight="bold" transform="rotate(-45 27 19.75)">2</text><text x="27" y="27.8" font-size="3.3" fill="#00e5e5" font-weight="bold" transform="rotate(-45 27 27.80)">3</text><text x="27" y="35.85" font-size="3.3" fill="#00e5e5" font-weight="bold" transform="rotate(-45 27 35.85)">4</text><text x="27" y="43.9" font-size="3.3" fill="#00e5e5" font-weight="bold" transform="rotate(-45 27 43.90)">5</text><text x="27" y="51.95" font-size="3.3" fill="#00e5e5" font-weight="bold" transform="rotate(-45 27 51.95)">6</text><text x="27" y="60.0" font-size="3.3" fill="#00e5e5" font-weight="bold" transform="rotate(-45 27 60.00)">7</text><line x1="20" y1="3" x2="20" y2="74" stroke="#00e5e5" stroke-width="1"/><line x1="24" y1="60" x2="24" y2="78" stroke="#00e5e5" stroke-width="0.9"/><line x1="43.5" y1="63.0" x2="79" y2="63.0" stroke="#ff10ff" stroke-width="1.1" stroke-dasharray="3.5 1.6"/><line x1="43.5" y1="54.95" x2="79" y2="54.95" stroke="#ff10ff" stroke-width="1.1" stroke-dasharray="3.5 1.6"/><line x1="43.5" y1="46.9" x2="79" y2="46.9" stroke="#ff10ff" stroke-width="1.1" stroke-dasharray="3.5 1.6"/><line x1="43.5" y1="38.85" x2="66" y2="38.85" stroke="#ff10ff" stroke-width="1.1" stroke-dasharray="3.5 1.6"/><line x1="43.5" y1="30.8" x2="66" y2="30.8" stroke="#ff10ff" stroke-width="1.1" stroke-dasharray="3.5 1.6"/><text x="64" y="59.0" font-size="3.3" fill="#00e5e5" font-weight="bold" transform="rotate(-45 64 59.00)">9</text><text x="64" y="50.95" font-size="3.3" fill="#00e5e5" font-weight="bold" transform="rotate(-45 64 50.95)">10</text><text x="64" y="42.9" font-size="3.3" fill="#00e5e5" font-weight="bold" transform="rotate(-45 64 42.90)">11</text><text x="64" y="34.85" font-size="3.3" fill="#00e5e5" font-weight="bold" transform="rotate(-45 64 34.85)">12</text><line x1="62" y1="30" x2="62" y2="66" stroke="#00e5e5" stroke-width="0.9" stroke-dasharray="3 1.5"/><line x1="-7" y1="92.6" x2="76" y2="92.6" stroke="#2070ff" stroke-width="1" stroke-dasharray="6 2 1.5 2"/><line x1="74.5" y1="-10" x2="74.5" y2="125" stroke="#2070ff" stroke-width="1" stroke-dasharray="6 2 1.5 2"/><line x1="-8" y1="-6" x2="-8" y2="112" stroke="#828282" stroke-width="0.9"/><line x1="-4" y1="40" x2="-4" y2="108" stroke="#828282" stroke-width="0.9"/><line x1="-10" y1="0" x2="0" y2="0" stroke="#828282" stroke-width="0.9"/><line x1="-10" y1="40" x2="0" y2="40" stroke="#828282" stroke-width="0.9"/><line x1="-10" y1="107.8" x2="0" y2="107.8" stroke="#828282" stroke-width="0.9"/><text x="-9" y="28" font-size="3.3" fill="#00e5e5" font-weight="bold" transform="rotate(-90 -9 28)">3200</text><text x="-9" y="90" font-size="3.3" fill="#00e5e5" font-weight="bold" transform="rotate(-90 -9 90)">3960</text><line x1="-6" y1="-8" x2="100" y2="-8" stroke="#828282" stroke-width="0.9"/><line x1="0" y1="-10" x2="0" y2="0" stroke="#828282" stroke-width="0.9"/><line x1="40" y1="-10" x2="40" y2="0" stroke="#828282" stroke-width="0.9"/><line x1="81" y1="-10" x2="81" y2="0" stroke="#828282" stroke-width="0.9"/><line x1="95" y1="-10" x2="95" y2="0" stroke="#828282" stroke-width="0.9"/><line x1="40" y1="-10" x2="40" y2="2" stroke="#828282" stroke-width="0.9"/><line x1="81" y1="-2" x2="95" y2="-2" stroke="#828282" stroke-width="0.9"/><text x="3" y="-9" font-size="3.2" fill="#00e5e5" font-weight="bold">200</text><text x="16" y="-9" font-size="3.2" fill="#00e5e5" font-weight="bold">1550</text><text x="36" y="-9" font-size="3.2" fill="#00e5e5" font-weight="bold">200</text><text x="45" y="-9" font-size="3.2" fill="#00e5e5" font-weight="bold">200</text><text x="60" y="-9" font-size="3.2" fill="#00e5e5" font-weight="bold">1550</text><text x="83" y="-9" font-size="3.2" fill="#00e5e5" font-weight="bold">200</text><line x1="86" y1="30" x2="86" y2="108" stroke="#828282" stroke-width="0.9"/><line x1="92" y1="30" x2="92" y2="108" stroke="#828282" stroke-width="0.9"/><line x1="98" y1="30" x2="98" y2="108" stroke="#828282" stroke-width="0.9"/><line x1="81" y1="38" x2="100" y2="38" stroke="#828282" stroke-width="0.9"/><line x1="81" y1="46" x2="100" y2="46" stroke="#828282" stroke-width="0.9"/><line x1="81" y1="54" x2="100" y2="54" stroke="#828282" stroke-width="0.9"/><line x1="81" y1="62" x2="100" y2="62" stroke="#828282" stroke-width="0.9"/><line x1="81" y1="108" x2="100" y2="108" stroke="#828282" stroke-width="0.9"/><text x="91" y="43" font-size="3" fill="#00e5e5" font-weight="bold" transform="rotate(-90 91 43)">300</text><text x="91" y="51" font-size="3" fill="#00e5e5" font-weight="bold" transform="rotate(-90 91 51)">300</text><text x="91" y="59" font-size="3" fill="#00e5e5" font-weight="bold" transform="rotate(-90 91 59)">300</text><text x="91" y="67" font-size="3" fill="#00e5e5" font-weight="bold" transform="rotate(-90 91 67)">300</text><text x="94" y="92" font-size="3.2" fill="#00e5e5" font-weight="bold" transform="rotate(-90 94 92)">1560</text><line x1="44" y1="72" x2="44" y2="112" stroke="#828282" stroke-width="0.9"/><line x1="44" y1="72" x2="81" y2="72" stroke="#828282" stroke-width="0.8"/></g><polyline points="344.7,843 362,847 364,845.5 386.1,851.2" fill="none" stroke="#2090ff" stroke-width="1" stroke-dasharray="6 2 1.5 2"/><path d="M348.8 774.3000000000001L356.1 781.6L348.8 788.9L341.5 781.6Z" fill="#555"/><path d="M273 850.9000000000001L280.3 858.2L273 865.5L265.7 858.2Z" fill="#555"/><line x1="268" y1="832" x2="279" y2="843" stroke="#ff2a2a" stroke-width="1"/><line x1="279" y1="843" x2="283" y2="847" stroke="#2070ff" stroke-width="1"/><path d="M256.7 827.2H269.09999999999997" fill="none" stroke="#ff2a2a" stroke-width="0.7"/><polygon points="269.1,827.2 266.0,832.57 259.8,832.57 256.7,827.2 259.8,821.83 266.0,821.83" fill="none" stroke="#ff2a2a" stroke-width="1.1"/><text x="262.9" y="826.6" font-size="4.5" fill="#151515" text-anchor="middle" font-weight="bold">B</text><path d="M412.5 812.5l5 5.5l-8.5 8" fill="none" stroke="#ff2a2a" stroke-width="1.1"/><circle cx="412.5" cy="812.5" r="0.7" fill="#151515"/><text x="265" y="903" font-size="5.4" fill="#151515" textLength="25" lengthAdjust="spacingAndGlyphs" font-weight="bold">CORIDOR</text><line x1="264.5" y1="904" x2="290.5" y2="904" stroke="#151515" stroke-width="0.8"/><rect x="272.5" y="905.2" width="14.2" height="5.2" fill="none" stroke="#ff2a2a" stroke-width="1"/><text x="279.6" y="909.1000000000001" font-size="3.4" fill="#00e5e5" textLength="11.7" lengthAdjust="spacingAndGlyphs" text-anchor="middle" font-weight="bold">+17900</text><rect x="272.5" y="911.2" width="14.2" height="5.2" fill="none" stroke="#ff2a2a" stroke-width="1"/><text x="279.6" y="915.1" font-size="3.4" fill="#00e5e5" textLength="11.7" lengthAdjust="spacingAndGlyphs" text-anchor="middle" font-weight="bold">+18000</text><text x="302.5" y="868.5" font-size="5.4" fill="#151515" textLength="22" lengthAdjust="spacingAndGlyphs" font-weight="bold" transform="rotate(-45 302.5 868.5)">BORDES</text><line x1="303.5" y1="869.8" x2="319.5" y2="853.8" stroke="#151515" stroke-width="0.8"/><rect x="309" y="864" width="16" height="4.6" fill="none" stroke="#ff2a2a" stroke-width="1" transform="rotate(-45 309 864)"/><rect x="312.5" y="868" width="16" height="4.6" fill="none" stroke="#ff2a2a" stroke-width="1" transform="rotate(-45 312.5 868)"/><text x="311" y="870.5" font-size="3.2" fill="#00e5e5" font-weight="bold" transform="rotate(-45 311 870.5)">+19010</text><text x="315" y="874.5" font-size="3.2" fill="#00e5e5" font-weight="bold" transform="rotate(-45 315 874.5)">+19010</text><rect x="321.5" y="880.6" width="16.5" height="7.1" fill="#fff" stroke="#ff2a2a" stroke-width="1.1"/><text x="329.7" y="886.2" font-size="5" fill="#00e5e5" text-anchor="middle">S-2</text></g><text x="377.8" y="786.6" font-size="5.4" fill="#151515" textLength="59.7" lengthAdjust="spacingAndGlyphs" font-weight="bold">CORIDOR CHANGING</text><line x1="377.3" y1="787.6" x2="438.0" y2="787.6" stroke="#151515" stroke-width="0.8"/><rect x="400.2" y="788.4" width="14.2" height="5.2" fill="none" stroke="#ff2a2a" stroke-width="1"/><text x="407.3" y="792.3000000000001" font-size="3.4" fill="#00e5e5" textLength="11.7" lengthAdjust="spacingAndGlyphs" text-anchor="middle" font-weight="bold">+17900</text><rect x="400.2" y="794.4" width="14.2" height="5.2" fill="none" stroke="#ff2a2a" stroke-width="1"/><text x="407.3" y="798.3" font-size="3.4" fill="#00e5e5" textLength="11.7" lengthAdjust="spacingAndGlyphs" text-anchor="middle" font-weight="bold">+18000</text><circle cx="219.5" cy="909.6" r="6.6" fill="#fff" stroke="#8e4a4a" stroke-width="1.1"/><text x="219.5" y="911.4" font-size="5" fill="#151515" text-anchor="middle" font-weight="bold">K</text><circle cx="435.9" cy="909.6" r="6.6" fill="#fff" stroke="#8e4a4a" stroke-width="1.1"/><text x="435.9" y="911.4" font-size="5" fill="#151515" text-anchor="middle" font-weight="bold">K</text><line x1="328.9" y1="924" x2="328.9" y2="929" stroke="#ff2a2a" stroke-width="1"/><circle cx="328.9" cy="935.6" r="6.4" fill="#fff" stroke="#ff2a2a" stroke-width="1.1"/><text x="328.9" y="937.76" font-size="6" fill="#151515" text-anchor="middle" font-weight="bold">13</text><line x1="300" y1="928.5" x2="289.5" y2="939" stroke="#ff2a2a" stroke-width="1"/><path d="M275.8 942.5H288.2" fill="none" stroke="#ff2a2a" stroke-width="0.7"/><polygon points="288.2,942.5 285.1,947.87 278.9,947.87 275.8,942.5 278.9,937.13 285.1,937.13" fill="none" stroke="#ff2a2a" stroke-width="1.1"/><text x="282" y="941.9" font-size="4.5" fill="#151515" text-anchor="middle" font-weight="bold">A</text><text x="252.4" y="955" font-size="6.4" fill="#151515" textLength="103" lengthAdjust="spacingAndGlyphs" font-weight="bold" xml:space="preserve" style="white-space:pre">STAIR #6A BASEMENT PLAN</text><line x1="251.5" y1="956.3" x2="357.5" y2="956.3" stroke="#151515" stroke-width="1"/><polygon points="338.6,957.6 335.3,963.32 328.7,963.32 325.4,957.6 328.7,951.88 335.3,951.88" fill="none" stroke="#ff2a2a" stroke-width="1.1"/><text x="332" y="955.6" font-size="4.4" fill="#151515" text-anchor="middle" font-weight="bold">1</text><text x="332" y="961.4" font-size="4" fill="#ff2a2a" text-anchor="middle">-</text><text x="253.5" y="961" font-size="3.4" fill="#00e5e5" textLength="25" lengthAdjust="spacingAndGlyphs" font-weight="bold">SCALE  1 : 20</text></g>
<g id="v_plan6g"><defs><clipPath id="cp6g"><rect x="439.1" y="667" width="266.1" height="253.9"/></clipPath><clipPath id="pond1"><path d="M439.1 667H515L527.5 680L464 746.5L452 735L439.1 747Z"/></clipPath><clipPath id="pond2"><path d="M692.5 840L706 853V921H612L650 884Z"/></clipPath></defs><g clip-path="url(#cp6g)"><g clip-path="url(#pond1)"><path d="M356.0 667l83.0 83.0M368.4 667l83.0 83.0M380.8 667l83.0 83.0M393.2 667l83.0 83.0M405.6 667l83.0 83.0M418.0 667l83.0 83.0M430.4 667l83.0 83.0M442.8 667l83.0 83.0M455.2 667l83.0 83.0M467.6 667l83.0 83.0M480.0 667l83.0 83.0M492.4 667l83.0 83.0M504.8 667l83.0 83.0M517.2 667l83.0 83.0M529.6 667l83.0 83.0M439.0 667l-83.0 83.0M451.4 667l-83.0 83.0M463.8 667l-83.0 83.0M476.2 667l-83.0 83.0M488.6 667l-83.0 83.0M501.0 667l-83.0 83.0M513.4 667l-83.0 83.0M525.8 667l-83.0 83.0M538.2 667l-83.0 83.0M550.6 667l-83.0 83.0M563.0 667l-83.0 83.0M575.4 667l-83.0 83.0M587.8 667l-83.0 83.0M600.2 667l-83.0 83.0M612.6 667l-83.0 83.0" fill="none" stroke="#9a4a38" stroke-width="1.3"/></g><g clip-path="url(#pond2)"><path d="M527.0 838l83.0 83.0M539.4 838l83.0 83.0M551.8 838l83.0 83.0M564.2 838l83.0 83.0M576.6 838l83.0 83.0M589.0 838l83.0 83.0M601.4 838l83.0 83.0M613.8 838l83.0 83.0M626.2 838l83.0 83.0M638.6 838l83.0 83.0M651.0 838l83.0 83.0M663.4 838l83.0 83.0M675.8 838l83.0 83.0M688.2 838l83.0 83.0M700.6 838l83.0 83.0M610.0 838l-83.0 83.0M622.4 838l-83.0 83.0M634.8 838l-83.0 83.0M647.2 838l-83.0 83.0M659.6 838l-83.0 83.0M672.0 838l-83.0 83.0M684.4 838l-83.0 83.0M696.8 838l-83.0 83.0M709.2 838l-83.0 83.0M721.6 838l-83.0 83.0M734.0 838l-83.0 83.0M746.4 838l-83.0 83.0M758.8 838l-83.0 83.0M771.2 838l-83.0 83.0M783.6 838l-83.0 83.0" fill="none" stroke="#9a4a38" stroke-width="1.3"/></g><line x1="441.6" y1="696.1" x2="705.2" y2="696.1" stroke="#8e4a4a" stroke-width="1.1" stroke-dasharray="11 2.5 2.5 2.5"/><line x1="614.5" y1="669" x2="614.5" y2="921" stroke="#8e4a4a" stroke-width="1.1" stroke-dasharray="11 2.5 2.5 2.5"/><line x1="441.6" y1="909.8" x2="614" y2="909.8" stroke="#8e4a4a" stroke-width="1.1" stroke-dasharray="11 2.5 2.5 2.5"/><line x1="446.6" y1="696.1" x2="446.6" y2="909.8" stroke="#828282" stroke-width="1"/><line x1="441.6" y1="695.4" x2="520" y2="695.4" stroke="#828282" stroke-width="0.9"/><line x1="541.1" y1="689.8" x2="615.7" y2="762.8" stroke="#8e4a4a" stroke-width="1" stroke-dasharray="11 2.5 2.5 2.5"/><line x1="458.2" y1="756.2" x2="551" y2="849" stroke="#8e4a4a" stroke-width="1" stroke-dasharray="11 2.5 2.5 2.5"/><line x1="705.2" y1="713.1" x2="614" y2="802.6" stroke="#8e4a4a" stroke-width="1" stroke-dasharray="11 2.5 2.5 2.5"/><line x1="439.1" y1="833.8" x2="524.5" y2="919.2" stroke="#8e4a4a" stroke-width="1" stroke-dasharray="11 2.5 2.5 2.5"/><line x1="496.3" y1="920" x2="624" y2="792.4" stroke="#8e4a4a" stroke-width="1" stroke-dasharray="11 2.5 2.5 2.5"/><line x1="561" y1="920" x2="590.8" y2="890.2" stroke="#8e4a4a" stroke-width="1" stroke-dasharray="11 2.5 2.5 2.5"/><line x1="636" y1="790" x2="705" y2="859" stroke="#8e4a4a" stroke-width="1" stroke-dasharray="11 2.5 2.5 2.5"/><g transform="translate(526.5 676.6) rotate(45)"><path d="M15.00 4V44.5M21.75 4V44.5M28.50 4V44.5M35.25 4V44.5M42.00 4V44.5M48.75 4V44.5M55.50 4V44.5M62.25 4V44.5M69.00 4V44.5M75.75 4V44.5M82.50 4V44.5M89.25 4V44.5M96.00 4V44.5M102.75 4V44.5M109.50 4V44.5M116.25 4V44.5M123.00 4V44.5M129.75 4V44.5M136.50 4V44.5M15 4.00H143M15 10.75H143M15 17.50H143M15 24.25H143M15 31.00H143M15 37.75H143M15 44.50H143" fill="none" stroke="#ff6464" stroke-width="0.95"/><line x1="15" y1="4.0" x2="143" y2="4.0" stroke="#ff10ff" stroke-width="1.05"/><line x1="15" y1="12.1" x2="143" y2="12.1" stroke="#ff10ff" stroke-width="1.05"/><line x1="15" y1="20.2" x2="143" y2="20.2" stroke="#ff10ff" stroke-width="1.05"/><line x1="15" y1="28.3" x2="143" y2="28.3" stroke="#ff10ff" stroke-width="1.05"/><line x1="15" y1="36.4" x2="143" y2="36.4" stroke="#ff10ff" stroke-width="1.05"/><line x1="15" y1="44.5" x2="143" y2="44.5" stroke="#ff10ff" stroke-width="1.05"/><path d="M-2 -12H260" fill="none" stroke="#828282" stroke-width="0.9"/><path d="M8 56.4H146" fill="none" stroke="#828282" stroke-width="0.9"/><path d="M8 56.4V46M146 56.4V40" fill="none" stroke="#828282" stroke-width="0.9"/><path d="M-6 12V96" fill="none" stroke="#828282" stroke-width="0.9"/><path d="M-6 12H8M-6 56H8M-6 96H8" fill="none" stroke="#828282" stroke-width="0.8"/><path d="M0 -16V-2M143 -16V4M165 -16V6" fill="none" stroke="#828282" stroke-width="0.9"/><line x1="10.5" y1="14" x2="10.5" y2="93" stroke="#f5f500" stroke-width="1.1"/><line x1="14.5" y1="14" x2="14.5" y2="93" stroke="#f5f500" stroke-width="1.1"/><path d="M10.5 50.0H14.5M10.5 53.2H14.5M10.5 56.4H14.5M10.5 59.6H14.5M10.5 62.8H14.5M10.5 66.0H14.5M10.5 69.2H14.5M10.5 72.4H14.5M10.5 75.6H14.5M10.5 78.8H14.5M10.5 82.0H14.5M10.5 85.2H14.5M10.5 88.4H14.5M10.5 91.6H14.5" fill="none" stroke="#f5f500" stroke-width="0.9"/><line x1="143" y1="6" x2="143" y2="60" stroke="#f5f500" stroke-width="1.1"/><line x1="147" y1="6" x2="147" y2="60" stroke="#f5f500" stroke-width="1.1"/><text x="89.5" y="9.6" font-size="3.3" fill="#00e5e5" font-weight="bold" transform="rotate(-45 89.5 9.6)">7</text><text x="89.5" y="16.2" font-size="3.3" fill="#00e5e5" font-weight="bold" transform="rotate(-45 89.5 16.2)">6</text><text x="89.5" y="22.8" font-size="3.3" fill="#00e5e5" font-weight="bold" transform="rotate(-45 89.5 22.8)">5</text><text x="89.5" y="29.4" font-size="3.3" fill="#00e5e5" font-weight="bold" transform="rotate(-45 89.5 29.4)">4</text><text x="89.5" y="36.0" font-size="3.3" fill="#00e5e5" font-weight="bold" transform="rotate(-45 89.5 36.0)">3</text><text x="89.5" y="42.6" font-size="3.3" fill="#00e5e5" font-weight="bold" transform="rotate(-45 89.5 42.6)">2</text><text x="89.5" y="49.2" font-size="3.3" fill="#00e5e5" font-weight="bold" transform="rotate(-45 89.5 49.2)">1</text><text x="73" y="8" font-size="3.3" fill="#00e5e5" font-weight="bold" transform="rotate(-45 73 8)">8</text><text x="1" y="35" font-size="3.3" fill="#00e5e5" font-weight="bold" transform="rotate(-90 1 35)">1560</text><text x="1" y="80" font-size="3.3" fill="#00e5e5" font-weight="bold" transform="rotate(-90 1 80)">3030</text><text x="60" y="-15" font-size="3.3" fill="#00e5e5" font-weight="bold">700</text><text x="50" y="58" font-size="3.6" fill="#00e5e5" font-weight="bold">8240</text></g><g transform="translate(634.3 782.6) rotate(45)"><path d="M0.00 0V107.8M6.75 0V107.8M13.50 0V107.8M20.25 0V107.8M27.00 0V107.8M33.75 0V107.8M40.50 0V107.8M47.25 0V107.8M54.00 0V107.8M60.75 0V107.8M67.50 0V107.8M74.25 0V107.8M81.00 0V107.8M0 0.00H81M0 6.75H81M0 13.50H81M0 20.25H81M0 27.00H81M0 33.75H81M0 40.50H81M0 47.25H81M0 54.00H81M0 60.75H81M0 67.50H81M0 74.25H81M0 81.00H81M0 87.75H81M0 94.50H81M0 101.25H81" fill="none" stroke="#ff6464" stroke-width="0.95"/><rect x="0" y="0" width="81" height="107.8" fill="none" stroke="#ff2a2a" stroke-width="1.1"/><rect x="-2.2" y="-2.2" width="85.4" height="112.2" fill="none" stroke="#f5f500" stroke-width="1.1"/><line x1="40" y1="2" x2="40" y2="69" stroke="#ff2a2a" stroke-width="1.4"/><line x1="42" y1="2" x2="42" y2="69" stroke="#ff2a2a" stroke-width="1.1"/><line x1="43.3" y1="2" x2="43.3" y2="69" stroke="#f5f500" stroke-width="1.2"/><line x1="41" y1="4" x2="41" y2="69" stroke="#f5f500" stroke-width="1.0"/><line x1="2" y1="6.5" x2="40" y2="6.5" stroke="#ff10ff" stroke-width="1.1" stroke-dasharray="3.5 1.6"/><line x1="43.5" y1="6.5" x2="79" y2="6.5" stroke="#ff10ff" stroke-width="1.1" stroke-dasharray="3.5 1.6"/><line x1="2" y1="14.55" x2="40" y2="14.55" stroke="#ff10ff" stroke-width="1.1" stroke-dasharray="3.5 1.6"/><line x1="43.5" y1="14.55" x2="79" y2="14.55" stroke="#ff10ff" stroke-width="1.1" stroke-dasharray="3.5 1.6"/><line x1="2" y1="22.6" x2="40" y2="22.6" stroke="#ff10ff" stroke-width="1.1" stroke-dasharray="3.5 1.6"/><line x1="43.5" y1="22.6" x2="79" y2="22.6" stroke="#ff10ff" stroke-width="1.1" stroke-dasharray="3.5 1.6"/><line x1="2" y1="30.65" x2="40" y2="30.65" stroke="#ff10ff" stroke-width="1.1" stroke-dasharray="3.5 1.6"/><line x1="43.5" y1="30.65" x2="79" y2="30.65" stroke="#ff10ff" stroke-width="1.1" stroke-dasharray="3.5 1.6"/><line x1="2" y1="38.7" x2="40" y2="38.7" stroke="#ff10ff" stroke-width="1.1" stroke-dasharray="3.5 1.6"/><line x1="43.5" y1="38.7" x2="79" y2="38.7" stroke="#ff10ff" stroke-width="1.1" stroke-dasharray="3.5 1.6"/><line x1="2" y1="46.75" x2="40" y2="46.75" stroke="#ff10ff" stroke-width="1.1" stroke-dasharray="3.5 1.6"/><line x1="43.5" y1="46.75" x2="79" y2="46.75" stroke="#ff10ff" stroke-width="1.1" stroke-dasharray="3.5 1.6"/><line x1="2" y1="54.8" x2="40" y2="54.8" stroke="#ff10ff" stroke-width="1.1" stroke-dasharray="3.5 1.6"/><line x1="43.5" y1="54.8" x2="79" y2="54.8" stroke="#ff10ff" stroke-width="1.1" stroke-dasharray="3.5 1.6"/><line x1="2" y1="62.85" x2="40" y2="62.85" stroke="#ff10ff" stroke-width="1.1" stroke-dasharray="3.5 1.6"/><line x1="43.5" y1="62.85" x2="79" y2="62.85" stroke="#ff10ff" stroke-width="1.1" stroke-dasharray="3.5 1.6"/><text x="24" y="11.7" font-size="3.3" fill="#00e5e5" font-weight="bold" transform="rotate(-45 24 11.70)">1</text><text x="64" y="11.7" font-size="3.3" fill="#00e5e5" font-weight="bold" transform="rotate(-45 64 11.70)">16</text><text x="24" y="19.75" font-size="3.3" fill="#00e5e5" font-weight="bold" transform="rotate(-45 24 19.75)">2</text><text x="64" y="19.75" font-size="3.3" fill="#00e5e5" font-weight="bold" transform="rotate(-45 64 19.75)">15</text><text x="24" y="27.8" font-size="3.3" fill="#00e5e5" font-weight="bold" transform="rotate(-45 24 27.80)">3</text><text x="64" y="27.8" font-size="3.3" fill="#00e5e5" font-weight="bold" transform="rotate(-45 64 27.80)">14</text><text x="24" y="35.85" font-size="3.3" fill="#00e5e5" font-weight="bold" transform="rotate(-45 24 35.85)">4</text><text x="64" y="35.85" font-size="3.3" fill="#00e5e5" font-weight="bold" transform="rotate(-45 64 35.85)">13</text><text x="24" y="43.9" font-size="3.3" fill="#00e5e5" font-weight="bold" transform="rotate(-45 24 43.90)">5</text><text x="64" y="43.9" font-size="3.3" fill="#00e5e5" font-weight="bold" transform="rotate(-45 64 43.90)">12</text><text x="24" y="51.95" font-size="3.3" fill="#00e5e5" font-weight="bold" transform="rotate(-45 24 51.95)">6</text><text x="64" y="51.95" font-size="3.3" fill="#00e5e5" font-weight="bold" transform="rotate(-45 64 51.95)">11</text><text x="24" y="60.0" font-size="3.3" fill="#00e5e5" font-weight="bold" transform="rotate(-45 24 60.00)">7</text><text x="64" y="60.0" font-size="3.3" fill="#00e5e5" font-weight="bold" transform="rotate(-45 64 60.00)">10</text><line x1="20" y1="3" x2="20" y2="74" stroke="#00e5e5" stroke-width="1"/><line x1="60" y1="3" x2="60" y2="74" stroke="#2070ff" stroke-width="1" stroke-dasharray="6 2 1.5 2"/><line x1="-3" y1="73" x2="-3" y2="110" stroke="#00e5e5" stroke-width="0.9"/><line x1="24" y1="76" x2="24" y2="100" stroke="#00e5e5" stroke-width="0.9"/><path d="M-14 -12H110" fill="none" stroke="#828282" stroke-width="0.9"/><path d="M0 -14V0M40 -14V2M81 -14V0" fill="none" stroke="#828282" stroke-width="0.9"/><path d="M86 0V108M92 30V108" fill="none" stroke="#828282" stroke-width="0.9"/><path d="M81 38H96M81 62H96M81 108H96" fill="none" stroke="#828282" stroke-width="0.8"/><text x="14" y="-13" font-size="3.2" fill="#00e5e5" font-weight="bold">1550</text><text x="34" y="-13" font-size="3.2" fill="#00e5e5" font-weight="bold">200</text><text x="58" y="-13" font-size="3.2" fill="#00e5e5" font-weight="bold">1550</text><text x="83" y="-13" font-size="3.2" fill="#00e5e5" font-weight="bold">200</text></g><line x1="527" y1="847.9" x2="614.5" y2="760.4" stroke="#2070ff" stroke-width="1.1" stroke-dasharray="6 2 1.5 2"/><line x1="599.1" y1="920" x2="705" y2="814" stroke="#2070ff" stroke-width="1.1" stroke-dasharray="6 2 1.5 2"/><circle cx="526.5" cy="676.6" r="6.5" fill="none" stroke="#10e810" stroke-width="1.1"/><circle cx="526.5" cy="676.6" r="9" fill="none" stroke="#10e810" stroke-width="1.1"/><circle cx="526.5" cy="676.6" r="11.5" fill="none" stroke="#10e810" stroke-width="1.1"/><circle cx="526.5" cy="676.6" r="14" fill="none" stroke="#10e810" stroke-width="1.1"/><path d="M526.5 655.6l21 21l-21 21l-21 -21z" fill="none" stroke="#10e810" stroke-width="1"/><path d="M526.5 669.0L534.1 676.6L526.5 684.2L518.9 676.6Z" fill="#555"/><circle cx="634.3" cy="782.6" r="6.5" fill="none" stroke="#10e810" stroke-width="1.1"/><circle cx="634.3" cy="782.6" r="9" fill="none" stroke="#10e810" stroke-width="1.1"/><circle cx="634.3" cy="782.6" r="11.5" fill="none" stroke="#10e810" stroke-width="1.1"/><circle cx="634.3" cy="782.6" r="14" fill="none" stroke="#10e810" stroke-width="1.1"/><path d="M634.3 761.6l21 21l-21 21l-21 -21z" fill="none" stroke="#10e810" stroke-width="1"/><path d="M634.3 775.0L641.9 782.6L634.3 790.2L626.6999999999999 782.6Z" fill="#555"/><circle cx="451.5" cy="751.2" r="10.5" fill="none" stroke="#ff10ff" stroke-width="1.2"/><circle cx="451.5" cy="751.2" r="13" fill="none" stroke="#ff10ff" stroke-width="1.2"/><circle cx="451.5" cy="751.2" r="15.5" fill="none" stroke="#ff10ff" stroke-width="1.2"/><circle cx="451.5" cy="751.2" r="18" fill="none" stroke="#ff10ff" stroke-width="1.2"/><circle cx="451.5" cy="751.2" r="10.5" fill="#fff" stroke="#828282" stroke-width="1"/><path d="M451.5 743.6L459.1 751.2L451.5 758.8000000000001L443.9 751.2Z" fill="#555"/><circle cx="559" cy="858.2" r="13" fill="none" stroke="#ff10ff" stroke-width="1.2"/><circle cx="559" cy="858.2" r="15.5" fill="none" stroke="#ff10ff" stroke-width="1.2"/><circle cx="559" cy="858.2" r="18" fill="none" stroke="#ff10ff" stroke-width="1.2"/><circle cx="559" cy="858.2" r="10.5" fill="#fff" stroke="#ff10ff" stroke-width="1.2"/><path d="M559 850.6L566.6 858.2L559 865.8000000000001L551.4 858.2Z" fill="#555"/><path d="M439.5 738.2L451.5 725.2L464.5 738.2" fill="none" stroke="#ff10ff" stroke-width="1"/><rect x="467.3" y="703.5" width="16" height="6.8" fill="none" stroke="#ff2a2a" stroke-width="1.1"/><text x="475.3" y="708.6999999999999" font-size="5" fill="#00e5e5" text-anchor="middle">S-1</text><rect x="546.5" y="737.5" width="16.5" height="7" fill="none" stroke="#ff2a2a" stroke-width="1.1"/><text x="554.75" y="742.8" font-size="5" fill="#00e5e5" text-anchor="middle">S-2</text><rect x="546.4" y="804.5" width="16.2" height="7" fill="none" stroke="#ff2a2a" stroke-width="1.1"/><text x="554.5" y="809.8" font-size="5" fill="#00e5e5" text-anchor="middle">S-2</text><rect x="618.7" y="873.6" width="16.9" height="7" fill="#fff" stroke="#ff2a2a" stroke-width="1.1"/><text x="627.2" y="879.2" font-size="5" fill="#00e5e5" text-anchor="middle">S-2</text><polyline points="562.6,808 573.5,808 581,820" fill="none" stroke="#828282" stroke-width="0.9"/><polyline points="566,808 581,833.5" fill="none" stroke="#828282" stroke-width="0.9"/><path d="M624.5 738.5l5 6l-7 7" fill="none" stroke="#ff2a2a" stroke-width="1.1"/><path d="M696.5 810l5 6l-7 7" fill="none" stroke="#ff2a2a" stroke-width="1.1"/><text x="459.6" y="686" font-size="5.4" fill="#151515" textLength="31" lengthAdjust="spacingAndGlyphs" font-weight="bold">LOTUS POND</text><line x1="459.1" y1="687" x2="491.1" y2="687" stroke="#151515" stroke-width="0.8"/><rect x="463.5" y="687.5" width="19" height="4.3" fill="none" stroke="#ff2a2a" stroke-width="1"/><text x="473.0" y="690.5" font-size="3.4" fill="#00e5e5" textLength="16.5" lengthAdjust="spacingAndGlyphs" text-anchor="middle" font-weight="bold">TL = +19.70</text><rect x="463.5" y="692.5999999999999" width="19" height="4.3" fill="none" stroke="#ff2a2a" stroke-width="1"/><text x="473.0" y="695.6" font-size="3.4" fill="#00e5e5" textLength="16.5" lengthAdjust="spacingAndGlyphs" text-anchor="middle" font-weight="bold">BL = +19.00</text><text x="585.6" y="707" font-size="5.4" fill="#151515" textLength="39" lengthAdjust="spacingAndGlyphs" font-weight="bold">RESTAURANT</text><line x1="585.1" y1="708" x2="625.1" y2="708" stroke="#151515" stroke-width="0.8"/><rect x="598.5" y="709.5" width="14.2" height="5.2" fill="none" stroke="#ff2a2a" stroke-width="1"/><text x="605.6" y="713.4000000000001" font-size="3.4" fill="#00e5e5" textLength="11.7" lengthAdjust="spacingAndGlyphs" text-anchor="middle" font-weight="bold">+20120</text><rect x="598.5" y="715.5" width="14.2" height="5.2" fill="none" stroke="#ff2a2a" stroke-width="1"/><text x="605.6" y="719.4" font-size="3.4" fill="#00e5e5" textLength="11.7" lengthAdjust="spacingAndGlyphs" text-anchor="middle" font-weight="bold">+20000</text><text x="502.1" y="784.6" font-size="5.4" fill="#151515" textLength="38.5" lengthAdjust="spacingAndGlyphs" font-weight="bold">LOBBY AREA</text><line x1="501.6" y1="785.6" x2="541.1" y2="785.6" stroke="#151515" stroke-width="0.8"/><rect x="514.2" y="786.3" width="14.2" height="5.2" fill="none" stroke="#ff2a2a" stroke-width="1"/><text x="521.3000000000001" y="790.2" font-size="3.4" fill="#00e5e5" textLength="11.7" lengthAdjust="spacingAndGlyphs" text-anchor="middle" font-weight="bold">+20120</text><rect x="514.2" y="792.3" width="14.2" height="5.2" fill="none" stroke="#ff2a2a" stroke-width="1"/><text x="521.3000000000001" y="796.1999999999999" font-size="3.4" fill="#00e5e5" textLength="11.7" lengthAdjust="spacingAndGlyphs" text-anchor="middle" font-weight="bold">+20000</text><text x="663.8" y="790.7" font-size="5.4" fill="#151515" textLength="39.8" lengthAdjust="spacingAndGlyphs" font-weight="bold">RESTAURANT</text><line x1="663.3" y1="791.7" x2="704.0999999999999" y2="791.7" stroke="#151515" stroke-width="0.8"/><rect x="676.7" y="792.6" width="14.2" height="5.2" fill="none" stroke="#ff2a2a" stroke-width="1"/><text x="683.8000000000001" y="796.5000000000001" font-size="3.4" fill="#00e5e5" textLength="11.7" lengthAdjust="spacingAndGlyphs" text-anchor="middle" font-weight="bold">+20120</text><rect x="676.7" y="798.6" width="14.2" height="5.2" fill="none" stroke="#ff2a2a" stroke-width="1"/><text x="683.8000000000001" y="802.5" font-size="3.4" fill="#00e5e5" textLength="11.7" lengthAdjust="spacingAndGlyphs" text-anchor="middle" font-weight="bold">+20000</text><text x="662.1" y="888.6" font-size="5.4" fill="#151515" textLength="31.5" lengthAdjust="spacingAndGlyphs" font-weight="bold">LOTUS POND</text><line x1="661.6" y1="889.6" x2="694.1" y2="889.6" stroke="#151515" stroke-width="0.8"/><rect x="667" y="890.5" width="19" height="4.3" fill="none" stroke="#ff2a2a" stroke-width="1"/><text x="676.5" y="893.5" font-size="3.4" fill="#00e5e5" textLength="16.5" lengthAdjust="spacingAndGlyphs" text-anchor="middle" font-weight="bold">TL = +19.70</text><rect x="667" y="895.5999999999999" width="19" height="4.3" fill="none" stroke="#ff2a2a" stroke-width="1"/><text x="676.5" y="898.6" font-size="3.4" fill="#00e5e5" textLength="16.5" lengthAdjust="spacingAndGlyphs" text-anchor="middle" font-weight="bold">BL = +19.00</text><text x="589.5" y="876" font-size="5.4" fill="#151515" textLength="22" lengthAdjust="spacingAndGlyphs" font-weight="bold" transform="rotate(-45 589.5 876)">BORDES</text><line x1="590.5" y1="877.3" x2="607" y2="860.8" stroke="#151515" stroke-width="0.8"/><rect x="597" y="872" width="16" height="4.6" fill="none" stroke="#ff2a2a" stroke-width="1" transform="rotate(-45 597 872)"/><rect x="600.5" y="876" width="16" height="4.6" fill="none" stroke="#ff2a2a" stroke-width="1" transform="rotate(-45 600.5 876)"/><text x="445" y="806.5" font-size="3.4" fill="#00e5e5" textLength="8" lengthAdjust="spacingAndGlyphs" font-weight="bold" transform="rotate(-90 445 806.5)">6000</text></g><circle cx="435.4" cy="696.1" r="6.6" fill="#fff" stroke="#8e4a4a" stroke-width="1.1"/><text x="435.4" y="697.9" font-size="5" fill="#151515" text-anchor="middle" font-weight="bold">L</text><circle cx="435.8" cy="909.8" r="6.6" fill="#fff" stroke="#8e4a4a" stroke-width="1.1"/><text x="435.8" y="911.5999999999999" font-size="5" fill="#151515" text-anchor="middle" font-weight="bold">K</text><line x1="527" y1="847.9" x2="517" y2="857.5" stroke="#ff2a2a" stroke-width="1"/><path d="M505.8 862H518.2" fill="none" stroke="#ff2a2a" stroke-width="0.7"/><polygon points="518.2,862.0 515.1,867.37 508.9,867.37 505.8,862.0 508.9,856.63 515.1,856.63" fill="none" stroke="#ff2a2a" stroke-width="1.1"/><text x="512" y="861.4" font-size="4.5" fill="#151515" text-anchor="middle" font-weight="bold">C</text><line x1="599.1" y1="920" x2="589" y2="930" stroke="#ff2a2a" stroke-width="1"/><path d="M578.0 934H590.4000000000001" fill="none" stroke="#ff2a2a" stroke-width="0.7"/><polygon points="590.4,934.0 587.3,939.37 581.1,939.37 578.0,934.0 581.1,928.63 587.3,928.63" fill="none" stroke="#ff2a2a" stroke-width="1.1"/><text x="584.2" y="933.4" font-size="4.5" fill="#151515" text-anchor="middle" font-weight="bold">A</text><line x1="614.2" y1="921" x2="614.2" y2="928" stroke="#ff2a2a" stroke-width="1"/><circle cx="614" cy="934.5" r="6.4" fill="#fff" stroke="#ff2a2a" stroke-width="1.1"/><text x="614" y="936.66" font-size="6" fill="#151515" text-anchor="middle" font-weight="bold">13</text><text x="545" y="949.6" font-size="6.2" fill="#151515" textLength="65" lengthAdjust="spacingAndGlyphs" font-weight="bold">STAIR #6A &amp; #6B</text><text x="545" y="956.6" font-size="6.2" fill="#151515" textLength="52" lengthAdjust="spacingAndGlyphs" font-weight="bold">GROUND PLAN</text><line x1="544" y1="957.8" x2="612" y2="957.8" stroke="#151515" stroke-width="1"/><polygon points="589.6,959.0 586.3,964.72 579.7,964.72 576.4,959.0 579.7,953.28 586.3,953.28" fill="none" stroke="#ff2a2a" stroke-width="1.1"/><text x="583" y="957" font-size="4.4" fill="#151515" text-anchor="middle" font-weight="bold">2</text><text x="583" y="962.8" font-size="4" fill="#ff2a2a" text-anchor="middle">-</text><text x="546" y="962.6" font-size="3.4" fill="#00e5e5" textLength="22" lengthAdjust="spacingAndGlyphs" font-weight="bold">SCALE  1 : 40</text></g>
<g id="v_plan7g"><defs><clipPath id="cp7g"><rect x="821.9" y="444" width="231.1" height="197.4"/></clipPath></defs><g clip-path="url(#cp7g)"><line x1="817.4" y1="563.3" x2="1050.8" y2="563.3" stroke="#8e4a4a" stroke-width="1.1" stroke-dasharray="11 2.5 2.5 2.5"/><line x1="913.9" y1="444" x2="913.9" y2="646" stroke="#8e4a4a" stroke-width="1.1" stroke-dasharray="11 2.5 2.5 2.5"/><line x1="942" y1="444" x2="1019.4" y2="521.4" stroke="#8e4a4a" stroke-width="1" stroke-dasharray="11 2.5 2.5 2.5"/><line x1="980.1" y1="444" x2="924" y2="500.1" stroke="#8e4a4a" stroke-width="1" stroke-dasharray="11 2.5 2.5 2.5"/><line x1="821.9" y1="539.3" x2="927.4" y2="644.8" stroke="#8e4a4a" stroke-width="1" stroke-dasharray="11 2.5 2.5 2.5"/><line x1="821.9" y1="601" x2="889.2" y2="533.7" stroke="#8e4a4a" stroke-width="1" stroke-dasharray="11 2.5 2.5 2.5"/><line x1="940.8" y1="641.4" x2="1019.4" y2="562.9" stroke="#8e4a4a" stroke-width="1" stroke-dasharray="11 2.5 2.5 2.5"/><circle cx="1060" cy="486.5" r="43" fill="none" stroke="#ff7272" stroke-width="1"/><circle cx="1060" cy="486.5" r="37.5" fill="none" stroke="#ff7272" stroke-width="1"/><circle cx="1060" cy="486.5" r="40.2" fill="none" stroke="#ff7272" stroke-width="5.5" stroke-dasharray="0.8 3.4"/><path d="M1020 523L1041.8 500.5L1053 511.3" fill="none" stroke="#ff9020" stroke-width="1.1"/><path d="M1026.1 523.6L1041.8 507.9L1053 519.1" fill="none" stroke="#ff9020" stroke-width="1.1"/><path d="M1031.7 524.7L1041.8 514.6L1053 525.9" fill="none" stroke="#ff9020" stroke-width="1.1"/><path d="M1017 521.5l16 4.5" fill="none" stroke="#ff9020" stroke-width="1"/><g transform="translate(888.8 456.3) rotate(45)"><path d="M0.00 0V65M5.60 0V65M11.20 0V65M16.80 0V65M22.40 0V65M28.00 0V65M33.60 0V65M39.20 0V65M44.80 0V65M50.40 0V65M56.00 0V65M61.60 0V65M67.20 0V65M72.80 0V65M78.40 0V65M84.00 0V65M89.60 0V65M95.20 0V65M100.80 0V65M106.40 0V65M112.00 0V65M117.60 0V65M123.20 0V65M128.80 0V65M134.40 0V65M140.00 0V65M145.60 0V65M151.20 0V65M156.80 0V65M162.40 0V65M168.00 0V65M0 0.00H169M0 5.60H169M0 11.20H169M0 16.80H169M0 22.40H169M0 28.00H169M0 33.60H169M0 39.20H169M0 44.80H169M0 50.40H169M0 56.00H169M0 61.60H169" fill="none" stroke="#ff6666" stroke-width="1"/><line x1="0" y1="0" x2="169" y2="0" stroke="#f5f500" stroke-width="1.2"/><line x1="0" y1="3" x2="169" y2="3" stroke="#f5f500" stroke-width="1.2"/><line x1="-60" y1="64.5" x2="171" y2="64.5" stroke="#ff2a2a" stroke-width="1.2"/><line x1="-60" y1="66.8" x2="171" y2="66.8" stroke="#ff2a2a" stroke-width="1.2"/><line x1="-60" y1="68.4" x2="171" y2="68.4" stroke="#f5f500" stroke-width="1.1"/><line x1="0" y1="0" x2="0" y2="65" stroke="#ff2a2a" stroke-width="0.9"/><line x1="169" y1="0" x2="169" y2="65" stroke="#ff2a2a" stroke-width="0.9"/><line x1="4.0" y1="3" x2="4.0" y2="63" stroke="#ff10ff" stroke-width="1.05" stroke-dasharray="3 1.5"/><line x1="12.05" y1="3" x2="12.05" y2="63" stroke="#ff10ff" stroke-width="1.05" stroke-dasharray="3 1.5"/><line x1="20.1" y1="3" x2="20.1" y2="63" stroke="#ff10ff" stroke-width="1.05" stroke-dasharray="3 1.5"/><line x1="28.15" y1="3" x2="28.15" y2="63" stroke="#ff10ff" stroke-width="1.05" stroke-dasharray="3 1.5"/><line x1="36.2" y1="3" x2="36.2" y2="63" stroke="#ff10ff" stroke-width="1.05" stroke-dasharray="3 1.5"/><line x1="44.25" y1="3" x2="44.25" y2="63" stroke="#ff10ff" stroke-width="1.05" stroke-dasharray="3 1.5"/><line x1="52.3" y1="3" x2="52.3" y2="63" stroke="#ff10ff" stroke-width="1.05" stroke-dasharray="3 1.5"/><line x1="60.35" y1="3" x2="60.35" y2="63" stroke="#ff10ff" stroke-width="1.05" stroke-dasharray="3 1.5"/><line x1="68.4" y1="3" x2="68.4" y2="63" stroke="#ff10ff" stroke-width="1.05" stroke-dasharray="3 1.5"/><line x1="106.0" y1="3" x2="106.0" y2="63" stroke="#ff10ff" stroke-width="1.05" stroke-dasharray="3 1.5"/><line x1="114.25" y1="3" x2="114.25" y2="63" stroke="#ff10ff" stroke-width="1.05" stroke-dasharray="3 1.5"/><line x1="122.5" y1="3" x2="122.5" y2="63" stroke="#ff10ff" stroke-width="1.05" stroke-dasharray="3 1.5"/><line x1="130.75" y1="3" x2="130.75" y2="63" stroke="#ff10ff" stroke-width="1.05" stroke-dasharray="3 1.5"/><line x1="139.0" y1="3" x2="139.0" y2="63" stroke="#ff10ff" stroke-width="1.05" stroke-dasharray="3 1.5"/><line x1="147.25" y1="3" x2="147.25" y2="63" stroke="#ff10ff" stroke-width="1.05" stroke-dasharray="3 1.5"/><line x1="155.5" y1="3" x2="155.5" y2="63" stroke="#ff10ff" stroke-width="1.05" stroke-dasharray="3 1.5"/><line x1="163.75" y1="3" x2="163.75" y2="63" stroke="#ff10ff" stroke-width="1.05" stroke-dasharray="3 1.5"/><text x="1.0" y="21" font-size="3.3" fill="#00e5e5" font-weight="bold" transform="rotate(-45 1.0 21)">17</text><text x="8.9" y="21" font-size="3.3" fill="#00e5e5" font-weight="bold" transform="rotate(-45 8.9 21)">16</text><text x="16.8" y="21" font-size="3.3" fill="#00e5e5" font-weight="bold" transform="rotate(-45 16.8 21)">15</text><text x="24.7" y="21" font-size="3.3" fill="#00e5e5" font-weight="bold" transform="rotate(-45 24.7 21)">14</text><text x="32.6" y="21" font-size="3.3" fill="#00e5e5" font-weight="bold" transform="rotate(-45 32.6 21)">13</text><text x="40.5" y="21" font-size="3.3" fill="#00e5e5" font-weight="bold" transform="rotate(-45 40.5 21)">12</text><text x="48.4" y="21" font-size="3.3" fill="#00e5e5" font-weight="bold" transform="rotate(-45 48.4 21)">11</text><text x="56.3" y="21" font-size="3.3" fill="#00e5e5" font-weight="bold" transform="rotate(-45 56.3 21)">10</text><text x="64.2" y="21" font-size="3.3" fill="#00e5e5" font-weight="bold" transform="rotate(-45 64.2 21)">9</text><text x="110.0" y="18.5" font-size="3.3" fill="#00e5e5" font-weight="bold" transform="rotate(-45 110.0 18.5)">7</text><text x="118.2" y="18.5" font-size="3.3" fill="#00e5e5" font-weight="bold" transform="rotate(-45 118.2 18.5)">6</text><text x="126.5" y="18.5" font-size="3.3" fill="#00e5e5" font-weight="bold" transform="rotate(-45 126.5 18.5)">5</text><text x="134.8" y="18.5" font-size="3.3" fill="#00e5e5" font-weight="bold" transform="rotate(-45 134.8 18.5)">4</text><text x="143.0" y="18.5" font-size="3.3" fill="#00e5e5" font-weight="bold" transform="rotate(-45 143.0 18.5)">3</text><text x="151.2" y="18.5" font-size="3.3" fill="#00e5e5" font-weight="bold" transform="rotate(-45 151.2 18.5)">2</text><text x="159.5" y="18.5" font-size="3.3" fill="#00e5e5" font-weight="bold" transform="rotate(-45 159.5 18.5)">1</text><line x1="4" y1="36" x2="169" y2="36" stroke="#00e5e5" stroke-width="1"/><line x1="-4" y1="47.3" x2="186" y2="47.3" stroke="#151515" stroke-width="1" stroke-dasharray="7 2 1.2 2"/><line x1="40" y1="20" x2="52" y2="20" stroke="#828282" stroke-width="1"/><line x1="30" y1="40" x2="44" y2="40" stroke="#828282" stroke-width="1"/><path d="M-2 -8H200M0 -10V0M81 -10V0M122 -10V0M169 -10V0M200 -10V30" fill="none" stroke="#828282" stroke-width="0.9"/><path d="M-8 -2V66M-10 0H0M-10 65H0" fill="none" stroke="#828282" stroke-width="0.9"/><path d="M171 2V66M177 2V90M200 30V68M171 66H200M169 90H200" fill="none" stroke="#828282" stroke-width="0.9"/><line x1="171" y1="8" x2="171" y2="50" stroke="#151515" stroke-width="0.8"/><text x="20" y="-9" font-size="3.4" fill="#00e5e5" textLength="30" lengthAdjust="spacingAndGlyphs" font-weight="bold">9 X 300 = 2700</text><text x="96" y="-9" font-size="3.4" fill="#00e5e5" font-weight="bold">1500</text><text x="130" y="-9" font-size="3.4" fill="#00e5e5" textLength="30" lengthAdjust="spacingAndGlyphs" font-weight="bold">6 X 300 = 1800</text><text x="-9" y="42" font-size="3.4" fill="#00e5e5" font-weight="bold" transform="rotate(-90 -9 42)">2270</text><text x="188" y="62" font-size="3.4" fill="#00e5e5" font-weight="bold" transform="rotate(-90 188 62)">1271</text><text x="178" y="88" font-size="3.2" fill="#00e5e5" font-weight="bold" transform="rotate(-90 178 88)">200</text><text x="165" y="12" font-size="3.2" fill="#00e5e5" font-weight="bold" transform="rotate(-90 165 12)">200</text><text x="-1" y="-3" font-size="3.2" fill="#00e5e5" font-weight="bold" transform="rotate(-90 -1 -3)">200</text></g><line x1="1008.1" y1="576.3" x2="1039.6" y2="544" stroke="#ff9020" stroke-width="1.2"/><line x1="1009.8" y1="578" x2="1041" y2="546" stroke="#ff2a2a" stroke-width="1.1"/><line x1="1011" y1="579.4" x2="1042.5" y2="547.5" stroke="#f5f500" stroke-width="1.1"/><line x1="1044" y1="545" x2="1053" y2="554" stroke="#ff2a2a" stroke-width="1.1"/><line x1="1042.5" y1="546.5" x2="1053" y2="557" stroke="#f5f500" stroke-width="1"/><circle cx="879.8" cy="541.5" r="5.5" fill="none" stroke="#ff10ff" stroke-width="1.1"/><path d="M879.8 536.4L887.1999999999999 543.8L879.8 551.1999999999999L872.4 543.8Z" fill="#555"/><path d="M961.5 615.6L968.9 623L961.5 630.4L954.1 623Z" fill="#555"/><circle cx="1041.8" cy="542.7" r="7.4" fill="none" stroke="#ff10ff" stroke-width="1.3"/><circle cx="1041.8" cy="542.7" r="6" fill="#555"/><path d="M836.5 481L842.1 476.5L852.2 487.1" fill="none" stroke="#ff2a2a" stroke-width="1.1"/><circle cx="836.5" cy="481" r="0.7" fill="#151515"/><line x1="987" y1="622.5" x2="1001.5" y2="634.5" stroke="#ff2a2a" stroke-width="1.1"/><path d="M909.5 640.5A20 20 0 0 1 938.5 638" fill="none" stroke="#00e5e5" stroke-width="1.2"/><line x1="956.5" y1="628" x2="970" y2="641.4" stroke="#00e5e5" stroke-width="1.2"/><line x1="968" y1="632.5" x2="979" y2="641.4" stroke="#3a4a7a" stroke-width="1"/><text x="835.8" y="463" font-size="5.6" fill="#151515" textLength="35" lengthAdjust="spacingAndGlyphs" font-weight="bold">POOL DECK</text><rect x="846.2" y="464.9" width="15" height="5.4" fill="none" stroke="#ff2a2a" stroke-width="1"/><text x="853.7" y="468.99999999999994" font-size="3.4" fill="#00e5e5" textLength="12.5" lengthAdjust="spacingAndGlyphs" text-anchor="middle" font-weight="bold">+18000</text><text x="970.7" y="606" font-size="5.6" fill="#151515" textLength="39.3" lengthAdjust="spacingAndGlyphs" font-weight="bold">RESTAURANT</text><rect x="983" y="608.2" width="15" height="5.6" fill="#fff" stroke="#ff2a2a" stroke-width="1"/><text x="990.5" y="612.6" font-size="3.4" fill="#00e5e5" text-anchor="middle" font-weight="bold">+20120</text><rect x="931.9" y="532.8" width="16.8" height="7" fill="#fff" stroke="#ff2a2a" stroke-width="1.1"/><text x="940.3" y="538.4" font-size="5" fill="#00e5e5" text-anchor="middle">S-2</text></g><circle cx="809.6" cy="563.3" r="6.6" fill="#fff" stroke="#8e4a4a" stroke-width="1.1"/><text x="809.6" y="565.0999999999999" font-size="5" fill="#151515" text-anchor="middle" font-weight="bold">N</text><line x1="913.9" y1="641.4" x2="913.9" y2="646" stroke="#8e4a4a" stroke-width="1"/><circle cx="913.9" cy="652.3" r="6.4" fill="#fff" stroke="#8e4a4a" stroke-width="1.1"/><text x="913.9" y="654.0999999999999" font-size="5" fill="#151515" text-anchor="middle" font-weight="bold">13</text><path d="M999.6999999999999 638.3H1012.1" fill="none" stroke="#ff2a2a" stroke-width="0.7"/><polygon points="1012.1,638.3 1009.0,643.67 1002.8,643.67 999.7,638.3 1002.8,632.93 1009.0,632.93" fill="none" stroke="#ff2a2a" stroke-width="1.1"/><text x="1005.9" y="637.6999999999999" font-size="4.5" fill="#151515" text-anchor="middle" font-weight="bold">D</text><text x="890.5" y="672.5" font-size="6.2" fill="#151515" textLength="92" lengthAdjust="spacingAndGlyphs" font-weight="bold">STAIR #7 GROUND PLAN</text><line x1="889.5" y1="673.8" x2="983.5" y2="673.8" stroke="#151515" stroke-width="1"/><polygon points="963.6,675.4 960.3,681.12 953.7,681.12 950.4,675.4 953.7,669.68 960.3,669.68" fill="none" stroke="#ff2a2a" stroke-width="1.1"/><text x="957" y="673.3" font-size="4.4" fill="#151515" text-anchor="middle" font-weight="bold">4</text><text x="957" y="679.2" font-size="4" fill="#ff2a2a" text-anchor="middle">-</text><text x="891.5" y="678.6" font-size="3.4" fill="#00e5e5" textLength="25" lengthAdjust="spacingAndGlyphs" font-weight="bold">SCALE  1 : 20</text></g>
<g id="v_plan7b"><defs><clipPath id="cp7b"><rect x="821.9" y="706.7" width="231.1" height="198"/></clipPath><clipPath id="h7b"><path d="M0 0H125L98 26L92 24L68.5 65H0Z"/></clipPath><clipPath id="bluex"><path d="M909.4 852L928 870.6L909.4 889.2L890.8 870.6Z"/></clipPath></defs><g clip-path="url(#cp7b)"><line x1="817.4" y1="828.3" x2="1050.8" y2="828.3" stroke="#8e4a4a" stroke-width="1.1" stroke-dasharray="11 2.5 2.5 2.5"/><line x1="913.9" y1="706.7" x2="913.9" y2="905" stroke="#8e4a4a" stroke-width="1.1" stroke-dasharray="11 2.5 2.5 2.5"/><line x1="942" y1="706.7" x2="1022" y2="786.7" stroke="#8e4a4a" stroke-width="1" stroke-dasharray="11 2.5 2.5 2.5"/><line x1="980.1" y1="709" x2="924" y2="765.1" stroke="#8e4a4a" stroke-width="1" stroke-dasharray="11 2.5 2.5 2.5"/><line x1="821.9" y1="804.3" x2="927.4" y2="909.8" stroke="#8e4a4a" stroke-width="1" stroke-dasharray="11 2.5 2.5 2.5"/><line x1="821.9" y1="866" x2="889.2" y2="798.7" stroke="#8e4a4a" stroke-width="1" stroke-dasharray="11 2.5 2.5 2.5"/><line x1="940.8" y1="906.4" x2="1019.4" y2="827.9" stroke="#8e4a4a" stroke-width="1" stroke-dasharray="11 2.5 2.5 2.5"/><g transform="translate(888.8 721.3) rotate(45)"><g clip-path="url(#h7b)"><path d="M0.00 0V65M5.60 0V65M11.20 0V65M16.80 0V65M22.40 0V65M28.00 0V65M33.60 0V65M39.20 0V65M44.80 0V65M50.40 0V65M56.00 0V65M61.60 0V65M67.20 0V65M72.80 0V65M78.40 0V65M84.00 0V65M89.60 0V65M95.20 0V65M100.80 0V65M106.40 0V65M112.00 0V65M117.60 0V65M123.20 0V65M128.80 0V65M134.40 0V65M140.00 0V65M145.60 0V65M151.20 0V65M156.80 0V65M162.40 0V65M168.00 0V65M0 0.00H169M0 5.60H169M0 11.20H169M0 16.80H169M0 22.40H169M0 28.00H169M0 33.60H169M0 39.20H169M0 44.80H169M0 50.40H169M0 56.00H169M0 61.60H169" fill="none" stroke="#ff6666" stroke-width="1"/><line x1="4.0" y1="3" x2="4.0" y2="63" stroke="#ff10ff" stroke-width="1.05" stroke-dasharray="3 1.5"/><line x1="12.05" y1="3" x2="12.05" y2="63" stroke="#ff10ff" stroke-width="1.05" stroke-dasharray="3 1.5"/><line x1="20.1" y1="3" x2="20.1" y2="63" stroke="#ff10ff" stroke-width="1.05" stroke-dasharray="3 1.5"/><line x1="28.15" y1="3" x2="28.15" y2="63" stroke="#ff10ff" stroke-width="1.05" stroke-dasharray="3 1.5"/><line x1="36.2" y1="3" x2="36.2" y2="63" stroke="#ff10ff" stroke-width="1.05" stroke-dasharray="3 1.5"/><line x1="44.25" y1="3" x2="44.25" y2="63" stroke="#ff10ff" stroke-width="1.05" stroke-dasharray="3 1.5"/><line x1="52.3" y1="3" x2="52.3" y2="63" stroke="#ff10ff" stroke-width="1.05" stroke-dasharray="3 1.5"/><line x1="60.35" y1="3" x2="60.35" y2="63" stroke="#ff10ff" stroke-width="1.05" stroke-dasharray="3 1.5"/><line x1="68.4" y1="3" x2="68.4" y2="63" stroke="#ff10ff" stroke-width="1.05" stroke-dasharray="3 1.5"/><line x1="76.5" y1="3" x2="76.5" y2="63" stroke="#ff10ff" stroke-width="1.05" stroke-dasharray="3 1.5"/><line x1="84.55" y1="3" x2="84.55" y2="63" stroke="#ff10ff" stroke-width="1.05" stroke-dasharray="3 1.5"/><line x1="92.6" y1="3" x2="92.6" y2="63" stroke="#ff10ff" stroke-width="1.05" stroke-dasharray="3 1.5"/><line x1="100.65" y1="3" x2="100.65" y2="63" stroke="#ff10ff" stroke-width="1.05" stroke-dasharray="3 1.5"/></g><path d="M125 0L98 26L92 24L68.5 65" fill="none" stroke="#ff10ff" stroke-width="1.1"/><line x1="0" y1="0" x2="125" y2="0" stroke="#f5f500" stroke-width="1.2"/><line x1="0" y1="3" x2="122" y2="3" stroke="#f5f500" stroke-width="1.2"/><line x1="0" y1="0" x2="0" y2="65" stroke="#ff2a2a" stroke-width="0.9"/><line x1="-60" y1="64.5" x2="171" y2="64.5" stroke="#ff2a2a" stroke-width="1.2"/><line x1="-60" y1="66.8" x2="171" y2="66.8" stroke="#ff2a2a" stroke-width="1.2"/><line x1="-60" y1="68.4" x2="171" y2="68.4" stroke="#f5f500" stroke-width="1.1"/><line x1="-60" y1="70" x2="100" y2="70" stroke="#ff2a2a" stroke-width="1"/><line x1="-60" y1="72" x2="100" y2="72" stroke="#10e810" stroke-width="1.2"/><line x1="-60" y1="87" x2="92" y2="87" stroke="#10e810" stroke-width="1.2"/><path d="M-58 72l8 15M-50 72l-8 15M-50 72v15M-50 72l8 15M-42 72l-8 15M-42 72v15M-42 72l8 15M-34 72l-8 15M-34 72v15M-34 72l8 15M-26 72l-8 15M-26 72v15M-26 72l8 15M-18 72l-8 15M-18 72v15M-18 72l8 15M-10 72l-8 15M-10 72v15M-10 72l8 15M-2 72l-8 15M-2 72v15M-2 72l8 15M6 72l-8 15M6 72v15M6 72l8 15M14 72l-8 15M14 72v15M14 72l8 15M22 72l-8 15M22 72v15M22 72l8 15M30 72l-8 15M30 72v15M30 72l8 15M38 72l-8 15M38 72v15M38 72l8 15M46 72l-8 15M46 72v15M46 72l8 15M54 72l-8 15M54 72v15M54 72l8 15M62 72l-8 15M62 72v15M62 72l8 15M70 72l-8 15M70 72v15M70 72l8 15M78 72l-8 15M78 72v15M78 72l8 15M86 72l-8 15M86 72v15M86 72l8 15M94 72l-8 15M94 72v15" fill="none" stroke="#10e810" stroke-width="1"/><path d="M100 72V96M92 87V110M100 96H128M92 110H128" fill="none" stroke="#10e810" stroke-width="1.1"/><path d="M92 96l8 8M100 96l-8 8M104 96l8 14M112 96l-8 14M116 96l8 14M124 96l-8 14" fill="none" stroke="#10e810" stroke-width="1"/><rect x="-60" y="89" width="148" height="13.5" fill="#ff5a5a"/><path d="M-60 89.5H88M-60 91.1H88M-60 92.7H88M-60 94.3H88M-60 95.9H88M-60 97.5H88M-60 99.1H88M-60 100.7H88M-60 102.3H88" fill="none" stroke="#ff1010" stroke-width="0.8"/><line x1="-60" y1="104" x2="70" y2="104" stroke="#ff2a2a" stroke-width="1"/><line x1="-60" y1="106" x2="70" y2="106" stroke="#7a6a6a" stroke-width="1" stroke-dasharray="8 3"/><line x1="131" y1="0" x2="131" y2="65" stroke="#ff2a2a" stroke-width="1.2"/><line x1="133.4" y1="0" x2="133.4" y2="65" stroke="#ff2a2a" stroke-width="1.2"/><line x1="135" y1="0" x2="135" y2="65" stroke="#f5f500" stroke-width="1.1"/><line x1="125" y1="-0.5" x2="212" y2="-0.5" stroke="#ff2a2a" stroke-width="1.2"/><line x1="125" y1="1.8" x2="212" y2="1.8" stroke="#ff2a2a" stroke-width="1.2"/><line x1="125" y1="3.4" x2="212" y2="3.4" stroke="#f5f500" stroke-width="1.1"/><line x1="135" y1="62" x2="212" y2="62" stroke="#828282" stroke-width="0.9"/><line x1="205" y1="0" x2="205" y2="40" stroke="#ff2a2a" stroke-width="1"/><line x1="207" y1="0" x2="207" y2="40" stroke="#f5f500" stroke-width="1"/><text x="1.0" y="21" font-size="3.3" fill="#00e5e5" font-weight="bold" transform="rotate(-45 1.0 21)">17</text><text x="8.9" y="21" font-size="3.3" fill="#00e5e5" font-weight="bold" transform="rotate(-45 8.9 21)">16</text><text x="16.8" y="21" font-size="3.3" fill="#00e5e5" font-weight="bold" transform="rotate(-45 16.8 21)">15</text><text x="24.7" y="21" font-size="3.3" fill="#00e5e5" font-weight="bold" transform="rotate(-45 24.7 21)">14</text><text x="32.6" y="21" font-size="3.3" fill="#00e5e5" font-weight="bold" transform="rotate(-45 32.6 21)">13</text><text x="40.5" y="21" font-size="3.3" fill="#00e5e5" font-weight="bold" transform="rotate(-45 40.5 21)">12</text><text x="48.4" y="21" font-size="3.3" fill="#00e5e5" font-weight="bold" transform="rotate(-45 48.4 21)">11</text><text x="56.3" y="21" font-size="3.3" fill="#00e5e5" font-weight="bold" transform="rotate(-45 56.3 21)">10</text><text x="64.2" y="21" font-size="3.3" fill="#00e5e5" font-weight="bold" transform="rotate(-45 64.2 21)">9</text><text x="72" y="21" font-size="3.3" fill="#00e5e5" font-weight="bold" transform="rotate(-45 72.0 21)">8</text><text x="80" y="21" font-size="3.3" fill="#00e5e5" font-weight="bold" transform="rotate(-45 80.0 21)">7</text><text x="88" y="21" font-size="3.3" fill="#00e5e5" font-weight="bold" transform="rotate(-45 88.0 21)">6</text><text x="96" y="21" font-size="3.3" fill="#00e5e5" font-weight="bold" transform="rotate(-45 96.0 21)">5</text><line x1="4" y1="36" x2="98" y2="36" stroke="#00e5e5" stroke-width="1" stroke-dasharray="9 3"/><line x1="-4" y1="47.3" x2="190" y2="47.3" stroke="#151515" stroke-width="1" stroke-dasharray="7 2 1.2 2"/><line x1="40" y1="20" x2="52" y2="20" stroke="#828282" stroke-width="1"/><line x1="30" y1="40" x2="44" y2="40" stroke="#828282" stroke-width="1"/><path d="M-2 -8H200M0 -10V0M81 -10V0M122 -10V0M136 -10V0M200 -10V30" fill="none" stroke="#828282" stroke-width="0.9"/><path d="M-8 -2V66M-10 0H0M-10 65H0" fill="none" stroke="#828282" stroke-width="0.9"/><path d="M200 30V68M200 68H160" fill="none" stroke="#828282" stroke-width="0.9"/><text x="20" y="-9" font-size="3.4" fill="#00e5e5" textLength="30" lengthAdjust="spacingAndGlyphs" font-weight="bold">9 X 300 = 2700</text><text x="96" y="-9" font-size="3.4" fill="#00e5e5" font-weight="bold">1500</text><text x="125" y="-9" font-size="3.2" fill="#00e5e5" font-weight="bold">200</text><text x="150" y="-9" font-size="3.4" fill="#00e5e5" font-weight="bold">1200</text><text x="-9" y="42" font-size="3.4" fill="#00e5e5" font-weight="bold" transform="rotate(-90 -9 42)">2270</text><text x="-1" y="-3" font-size="3.2" fill="#00e5e5" font-weight="bold" transform="rotate(-90 -1 -3)">200</text></g><polyline points="989,826.8 959.9,854.8 990.2,886.2 1001,886.2 1034,853" fill="none" stroke="#10e810" stroke-width="1.2"/><polyline points="967.8,890.7 972.2,897.4 1010.4,897.4 1038.4,870.5" fill="none" stroke="#10e810" stroke-width="1.2"/><text x="999" y="886.5" font-size="3.2" fill="#00e5e5" font-weight="bold" transform="rotate(-45 999 886.5)">900</text><g clip-path="url(#bluex)"><path d="M852.0 852l38.0 38.0M860.2 852l38.0 38.0M868.4 852l38.0 38.0M876.6 852l38.0 38.0M884.8 852l38.0 38.0M893.0 852l38.0 38.0M901.2 852l38.0 38.0M909.4 852l38.0 38.0M917.6 852l38.0 38.0M925.8 852l38.0 38.0M890.0 852l-38.0 38.0M898.2 852l-38.0 38.0M906.4 852l-38.0 38.0M914.6 852l-38.0 38.0M922.8 852l-38.0 38.0M931.0 852l-38.0 38.0M939.2 852l-38.0 38.0M947.4 852l-38.0 38.0M955.6 852l-38.0 38.0M963.8 852l-38.0 38.0" fill="none" stroke="#2838c8" stroke-width="1.2"/></g><path d="M905 852l9 5l9 -5" fill="none" stroke="#bbb" stroke-width="1.2"/><path d="M906 854.5l8 5l8 -5" fill="none" stroke="#ddd" stroke-width="1"/><polyline points="873.5,861.5 902.7,890.7 920.7,877.2" fill="none" stroke="#ff2a2a" stroke-width="1.1"/><polyline points="871.5,863.5 902.7,894 922,879.5" fill="none" stroke="#f5f500" stroke-width="1"/><polyline points="869.5,865.5 902.7,897.5 923,882" fill="none" stroke="#ff2a2a" stroke-width="1.1"/><polyline points="821.9,855 848.8,879.5 874.6,854.8 851.1,832.4" fill="none" stroke="#ff2a2a" stroke-width="1.1"/><polyline points="836.5,899.7 848.8,887.4 862.3,899.7" fill="none" stroke="#ff2a2a" stroke-width="1.1"/><polyline points="838.5,901.5 848.8,890.5 860,901.5" fill="none" stroke="#f5f500" stroke-width="1"/><polyline points="821.9,860.4 826.4,864.9 821.9,869.4" fill="none" stroke="#f5f500" stroke-width="1.1"/><polyline points="821.9,857.5 829,864.9 821.9,872.3" fill="none" stroke="#ff2a2a" stroke-width="1"/><path d="M920.6 877.2A15 15 0 0 0 947.5 878" fill="none" stroke="#8e4a4a" stroke-width="1"/><line x1="931.9" y1="863.8" x2="947.5" y2="877.2" stroke="#00e5e5" stroke-width="1.3"/><path d="M879.8 801.4L887.1999999999999 808.8L879.8 816.1999999999999L872.4 808.8Z" fill="#555"/><path d="M961.5 880.6L968.9 888L961.5 895.4L954.1 888Z" fill="#555"/><path d="M1041.8 786.4L1063 807.7L1041.8 829L1020.5 807.7Z" fill="none" stroke="#ff10ff" stroke-width="1.1"/><circle cx="1041.8" cy="807.7" r="7" fill="none" stroke="#ff10ff" stroke-width="1"/><circle cx="1041.8" cy="807.7" r="9.5" fill="none" stroke="#ff10ff" stroke-width="1"/><circle cx="1041.8" cy="807.7" r="12" fill="none" stroke="#ff10ff" stroke-width="1"/><circle cx="1041.8" cy="807.7" r="14.5" fill="none" stroke="#ff10ff" stroke-width="1"/><circle cx="1041.8" cy="807.7" r="6" fill="#555"/><line x1="1025.5" y1="824" x2="1009.3" y2="840.2" stroke="#ff10ff" stroke-width="1.1"/><line x1="1028" y1="826.5" x2="1012" y2="842.5" stroke="#ff10ff" stroke-width="1.1"/><path d="M1016 810l4.5 -6.3l7.8 17.5" fill="none" stroke="#ff2a2a" stroke-width="1.1"/><line x1="1028" y1="821" x2="1050.8" y2="845.8" stroke="#151515" stroke-width="1" stroke-dasharray="7 2 1.2 2"/><path d="M836.5 746L842.1 741.5L852.2 752.1" fill="none" stroke="#ff2a2a" stroke-width="1.1"/><circle cx="836.5" cy="746" r="0.7" fill="#151515"/><line x1="1042" y1="808" x2="1053" y2="819" stroke="#ff9020" stroke-width="1"/><text x="835.8" y="728" font-size="5.6" fill="#151515" textLength="35" lengthAdjust="spacingAndGlyphs" font-weight="bold">POOL DECK</text><rect x="846.2" y="729.9" width="15" height="5.4" fill="none" stroke="#ff2a2a" stroke-width="1"/><text x="853.7" y="734.0" font-size="3.4" fill="#00e5e5" textLength="12.5" lengthAdjust="spacingAndGlyphs" text-anchor="middle" font-weight="bold">+18000</text><rect x="935.2" y="797.8" width="16.8" height="7" fill="#fff" stroke="#ff2a2a" stroke-width="1.1"/><text x="943.6" y="803.4" font-size="5" fill="#00e5e5" text-anchor="middle">S-2</text></g><circle cx="809.6" cy="828.3" r="6.6" fill="#fff" stroke="#8e4a4a" stroke-width="1.1"/><text x="809.6" y="830.0999999999999" font-size="5" fill="#151515" text-anchor="middle" font-weight="bold">N</text><line x1="1050.8" y1="845.8" x2="1055" y2="850" stroke="#ff2a2a" stroke-width="1.1"/><path d="M1052.3999999999999 853.7H1064.8" fill="none" stroke="#ff2a2a" stroke-width="0.7"/><polygon points="1064.8,853.7 1061.7,859.07 1055.5,859.07 1052.4,853.7 1055.5,848.33 1061.7,848.33" fill="none" stroke="#ff2a2a" stroke-width="1.1"/><text x="1058.6" y="853.1" font-size="4.5" fill="#151515" text-anchor="middle" font-weight="bold">E</text><line x1="913.9" y1="905" x2="913.9" y2="911" stroke="#8e4a4a" stroke-width="1"/><circle cx="913.9" cy="917.3" r="6.4" fill="#fff" stroke="#8e4a4a" stroke-width="1.1"/><text x="913.9" y="919.0999999999999" font-size="5" fill="#151515" text-anchor="middle" font-weight="bold">13</text><line x1="988" y1="895" x2="997" y2="904" stroke="#ff2a2a" stroke-width="1.1"/><path d="M995.3 908.5H1007.7" fill="none" stroke="#ff2a2a" stroke-width="0.7"/><polygon points="1007.7,908.5 1004.6,913.87 998.4,913.87 995.3,908.5 998.4,903.13 1004.6,903.13" fill="none" stroke="#ff2a2a" stroke-width="1.1"/><text x="1001.5" y="907.9" font-size="4.5" fill="#151515" text-anchor="middle" font-weight="bold">D</text><text x="927.4" y="914.3" font-size="5" fill="#151515" textLength="68.4" lengthAdjust="spacingAndGlyphs" font-weight="bold">CHANGING ROOM GOLF</text><rect x="954" y="916.5" width="15.5" height="4.6" fill="none" stroke="#ff2a2a" stroke-width="1"/><text x="961.75" y="919.8000000000001" font-size="3.4" fill="#00e5e5" textLength="13.0" lengthAdjust="spacingAndGlyphs" text-anchor="middle" font-weight="bold">+17900</text><text x="875.6" y="956.4" font-size="6.2" fill="#151515" textLength="100" lengthAdjust="spacingAndGlyphs" font-weight="bold">STAIR #7 BASEMENT PLAN</text><line x1="874.6" y1="957.7" x2="976.6" y2="957.7" stroke="#151515" stroke-width="1"/><polygon points="954.3,959.2 951.0,964.92 944.4,964.92 941.1,959.2 944.4,953.48 951.0,953.48" fill="none" stroke="#ff2a2a" stroke-width="1.1"/><text x="947.7" y="957.2" font-size="4.4" fill="#151515" text-anchor="middle" font-weight="bold">5</text><text x="947.7" y="963" font-size="4" fill="#ff2a2a" text-anchor="middle">-</text><text x="876.6" y="962.6" font-size="3.4" fill="#00e5e5" textLength="25" lengthAdjust="spacingAndGlyphs" font-weight="bold">SCALE  1 : 20</text></g>
</svg>
<div style="position:absolute;left:555px;top:969px;width:52px;height:25px;background:#4f4f4f;border-radius:2px 0 0 2px"></div>
<div style="position:absolute;left:607px;top:969px;width:755px;height:25px;background:rgba(224,224,224,0.86);border:1px solid #bbb;box-sizing:border-box;border-radius:0 2px 2px 0"></div>
<div style="position:absolute;left:613px;top:895px;width:697px;height:29.5px;background:linear-gradient(rgba(100,100,100,0.62),rgba(100,100,100,0.78));border-radius:2px"></div>
<div style="position:absolute;left:613px;top:930px;width:60px;height:15px;background:linear-gradient(rgba(100,100,100,0.66),rgba(100,100,100,0.78));border-radius:2px"></div>
<div style="position:absolute;left:613px;top:951px;width:60px;height:14px;background:linear-gradient(rgba(100,100,100,0.66),rgba(100,100,100,0.78));border-radius:2px"></div>
<div style="position:absolute;left:9px;top:10px;width:40px;height:40px;background:linear-gradient(#d0d0d0,#a9a9a9 35%,#6a6a6a 75%,#555);border:1px solid #2a2a2a;box-sizing:border-box;z-index:3"></div>
<div style="position:absolute;left:49px;top:10px;width:262px;height:24px;background:#a7a7a7"></div>
<div style="position:absolute;left:1298px;top:10px;width:447px;height:24px;background:#a7a7a7"></div>
<div style="position:absolute;left:1312px;top:11px;width:180px;height:21px;background:#777;border:1px solid #484848;box-sizing:border-box"></div>
<div style="position:absolute;left:8px;top:34px;width:1900px;height:21px;background:#555;border-top:1px solid #444;box-sizing:border-box"></div>
<div style="position:absolute;left:54px;top:37px;width:51px;height:19px;background:linear-gradient(#6e6e6e,#5e5e5e 60%);border:1px solid #333;border-bottom:none;box-sizing:border-box;z-index:2"></div>
<div style="position:absolute;left:796px;top:37px;width:54px;height:16px;background:#676767;border:1px dotted #5a6fb0;box-sizing:border-box"></div>
<div style="position:absolute;left:8px;top:54px;width:1900px;height:99px;background:linear-gradient(#4c4c4c,#3c3c3c);border-top:1px solid #333;box-sizing:border-box"></div>
<div style="position:absolute;left:9px;top:55px;width:223px;height:97px;background:linear-gradient(#5f5f5f 0,#5c5c5c 78.5px,#565656 79.5px,#464646 97px);border-right:1px solid #6a6a6a;box-sizing:border-box"></div>
<div style="position:absolute;left:233px;top:55px;width:249px;height:97px;background:linear-gradient(#5f5f5f 0,#5c5c5c 78.5px,#565656 79.5px,#464646 97px);border-right:1px solid #6a6a6a;box-sizing:border-box"></div>
<div style="position:absolute;left:483px;top:55px;width:189px;height:97px;background:linear-gradient(#5f5f5f 0,#5c5c5c 78.5px,#565656 79.5px,#464646 97px);border-right:1px solid #6a6a6a;box-sizing:border-box"></div>
<div style="position:absolute;left:673px;top:55px;width:272px;height:97px;background:linear-gradient(#5f5f5f 0,#5c5c5c 78.5px,#565656 79.5px,#464646 97px);border-right:1px solid #6a6a6a;box-sizing:border-box"></div>
<div style="position:absolute;left:946px;top:55px;width:160px;height:97px;background:linear-gradient(#5f5f5f 0,#5c5c5c 78.5px,#565656 79.5px,#464646 97px);border-right:1px solid #6a6a6a;box-sizing:border-box"></div>
<div style="position:absolute;left:1107px;top:55px;width:264px;height:97px;background:linear-gradient(#5f5f5f 0,#5c5c5c 78.5px,#565656 79.5px,#464646 97px);border-right:1px solid #6a6a6a;box-sizing:border-box"></div>
<div style="position:absolute;left:1372px;top:55px;width:68px;height:97px;background:linear-gradient(#5f5f5f 0,#5c5c5c 78.5px,#565656 79.5px,#464646 97px);border-right:1px solid #6a6a6a;box-sizing:border-box"></div>
<div style="position:absolute;left:1441px;top:55px;width:96px;height:97px;background:linear-gradient(#5f5f5f 0,#5c5c5c 78.5px,#565656 79.5px,#464646 97px);border-right:1px solid #6a6a6a;box-sizing:border-box"></div>
<div style="position:absolute;left:1538px;top:55px;width:79px;height:97px;background:linear-gradient(#5f5f5f 0,#5c5c5c 78.5px,#565656 79.5px,#464646 97px);border-right:1px solid #6a6a6a;box-sizing:border-box"></div>
<div style="position:absolute;left:1618px;top:55px;width:61px;height:97px;background:linear-gradient(#5f5f5f 0,#5c5c5c 78.5px,#565656 79.5px,#464646 97px);border-right:1px solid #6a6a6a;box-sizing:border-box"></div>
<div style="position:absolute;left:8px;top:152px;width:1900px;height:1px;background:#707070"></div>
<div style="position:absolute;left:9px;top:55px;width:1px;height:97px;background:#707070"></div>
<div style="position:absolute;left:735px;top:60px;width:208px;height:22px;background:linear-gradient(#5a5a5a,#4e4e4e 45%,#585858);border:1px solid #333;box-sizing:border-box"></div>
<div style="position:absolute;left:1189px;top:60px;width:180px;height:22px;background:linear-gradient(#5a5a5a,#4e4e4e 45%,#585858);border:1px solid #333;box-sizing:border-box"></div>
<div style="position:absolute;left:1189px;top:83px;width:180px;height:22px;background:linear-gradient(#5a5a5a,#4e4e4e 45%,#585858);border:1px solid #333;box-sizing:border-box"></div>
<div style="position:absolute;left:1189px;top:107px;width:180px;height:22px;background:linear-gradient(#5a5a5a,#4e4e4e 45%,#585858);border:1px solid #333;box-sizing:border-box"></div>
<div style="position:absolute;left:191px;top:60px;width:36px;height:22px;background:linear-gradient(#6e6e6e,#5a5a5a);border:1px solid #333;box-sizing:border-box"></div>
<div style="position:absolute;left:214px;top:61px;width:12px;height:20px;background:linear-gradient(#858585,#6c6c6c);"></div>
<div style="position:absolute;left:1414px;top:108px;width:24px;height:22px;background:#4e74ab;border:1px solid #2b3f7a;box-sizing:border-box"></div>
<div style="position:absolute;left:8px;top:153px;width:1900px;height:26px;background:#3d3d3d"></div>
<div style="position:absolute;left:8px;top:178.5px;width:1900px;height:4.5px;background:#626262"></div>
<div style="position:absolute;left:8px;top:995px;width:1900px;height:27.5px;background:#383838;border-radius:0 0 7px 7px"></div>
<div style="position:absolute;left:1450px;top:995.4px;width:458px;height:27.2px;background:#525252;border-radius:0 0 7px 0"></div>
<div style="position:absolute;left:1451px;top:996px;width:41px;height:26px;background:#4d4d4d;border:1px solid #6e6e6e;box-sizing:border-box"></div>
<div style="position:absolute;left:1494px;top:996px;width:102px;height:26px;background:#4d4d4d;border:1px solid #6e6e6e;box-sizing:border-box"></div>
<div style="position:absolute;left:1598px;top:996px;width:63px;height:26px;background:#4d4d4d;border:1px solid #6e6e6e;box-sizing:border-box"></div>
<div style="position:absolute;left:1663px;top:996px;width:72px;height:26px;background:#4d4d4d;border:1px solid #6e6e6e;box-sizing:border-box"></div>
<div style="position:absolute;left:1738px;top:996px;width:39px;height:26px;background:#4d4d4d;border:1px solid #6e6e6e;box-sizing:border-box"></div>
<div style="position:absolute;left:1779px;top:996px;width:24px;height:26px;background:#4d4d4d;border:1px solid #6e6e6e;box-sizing:border-box"></div>
<div style="position:absolute;left:1805px;top:996px;width:25px;height:26px;background:#4d4d4d;border:1px solid #6e6e6e;box-sizing:border-box"></div>
<div style="position:absolute;left:1832px;top:996px;width:23px;height:26px;background:#4d4d4d;border:1px solid #6e6e6e;box-sizing:border-box"></div>
<div style="position:absolute;left:1857px;top:996px;width:50px;height:26px;background:#4d4d4d;border:1px solid #6e6e6e;box-sizing:border-box"></div>
<div style="position:absolute;left:1496px;top:998px;width:22px;height:22px;background:#5f93cb"></div>
<div style="position:absolute;left:1623px;top:998px;width:22px;height:22px;background:#5f93cb"></div>
<svg width="1916" height="1025" viewBox="0 0 1916 1025" style="position:absolute;left:0;top:0;z-index:5" font-family="Liberation Sans, sans-serif">
<text x="701" y="21.7" font-size="12" fill="#070404" textLength="131" lengthAdjust="spacingAndGlyphs">Autodesk AutoCAD 2019</text>
<text x="849" y="21.7" font-size="12" fill="#070404" textLength="58" lengthAdjust="spacingAndGlyphs">A2303.dwg</text>
<text x="63.4" y="49.3" font-size="12" fill="#f2f2f2" textLength="32.6" lengthAdjust="spacingAndGlyphs">Home</text>
<text x="116.3" y="49.3" font-size="12" fill="#f2f2f2" textLength="28.7" lengthAdjust="spacingAndGlyphs">Insert</text>
<text x="165.3" y="49.3" font-size="12" fill="#f2f2f2" textLength="48.7" lengthAdjust="spacingAndGlyphs">Annotate</text>
<text x="234.6" y="49.3" font-size="12" fill="#f2f2f2" textLength="55.9" lengthAdjust="spacingAndGlyphs">Parametric</text>
<text x="311" y="49.3" font-size="12" fill="#f2f2f2" textLength="24.6" lengthAdjust="spacingAndGlyphs">View</text>
<text x="356.2" y="49.3" font-size="12" fill="#f2f2f2" textLength="42.8" lengthAdjust="spacingAndGlyphs">Manage</text>
<text x="419.7" y="49.3" font-size="12" fill="#f2f2f2" textLength="37.3" lengthAdjust="spacingAndGlyphs">Output</text>
<text x="477.3" y="49.3" font-size="12" fill="#f2f2f2" textLength="41.7" lengthAdjust="spacingAndGlyphs">Add-ins</text>
<text x="539.6" y="49.3" font-size="12" fill="#f2f2f2" textLength="60.4" lengthAdjust="spacingAndGlyphs">Collaborate</text>
<text x="620.4" y="49.3" font-size="12" fill="#f2f2f2" textLength="68.6" lengthAdjust="spacingAndGlyphs">Express Tools</text>
<text x="709.4" y="49.3" font-size="12" fill="#f2f2f2" textLength="75.6" lengthAdjust="spacingAndGlyphs">Featured Apps</text>
<text x="805.4" y="49.3" font-size="12" fill="#f2f2f2" textLength="35.6" lengthAdjust="spacingAndGlyphs">Layout</text>
<text x="1316" y="25.9" font-size="11.5" fill="#d0d0d0" textLength="120.5" lengthAdjust="spacingAndGlyphs" font-style="italic">Type a keyword or phrase</text>
<text x="1541.4" y="26.4" font-size="12" fill="#fff" textLength="35" lengthAdjust="spacingAndGlyphs">Sign In</text>
<text x="20" y="108.7" font-size="12" fill="#f2f2f2" textLength="22" lengthAdjust="spacingAndGlyphs">Line</text>
<text x="53" y="108.7" font-size="12" fill="#f2f2f2" textLength="42" lengthAdjust="spacingAndGlyphs">Polyline</text>
<text x="109" y="108.7" font-size="12" fill="#f2f2f2" textLength="30" lengthAdjust="spacingAndGlyphs">Circle</text>
<text x="161" y="108.7" font-size="12" fill="#f2f2f2" textLength="18" lengthAdjust="spacingAndGlyphs">Arc</text>
<text x="497.5" y="108.7" font-size="12" fill="#f2f2f2" textLength="20.0" lengthAdjust="spacingAndGlyphs">Text</text>
<text x="532.5" y="108.7" font-size="12" fill="#f2f2f2" textLength="56.0" lengthAdjust="spacingAndGlyphs">Dimension</text>
<text x="691" y="108.7" font-size="12" fill="#f2f2f2" textLength="27.5" lengthAdjust="spacingAndGlyphs">Layer</text>
<text x="953" y="108.7" font-size="12" fill="#f2f2f2" textLength="28" lengthAdjust="spacingAndGlyphs">Insert</text>
<text x="1122" y="108.7" font-size="12" fill="#f2f2f2" textLength="33.5" lengthAdjust="spacingAndGlyphs">Match</text>
<text x="1377.3" y="108.7" font-size="12" fill="#f2f2f2" textLength="32.2" lengthAdjust="spacingAndGlyphs">Group</text>
<text x="1454.3" y="108.7" font-size="12" fill="#f2f2f2" textLength="45.1" lengthAdjust="spacingAndGlyphs">Measure</text>
<text x="1551.4" y="108.7" font-size="12" fill="#f2f2f2" textLength="27.4" lengthAdjust="spacingAndGlyphs">Paste</text>
<text x="1637.3" y="108.7" font-size="12" fill="#f2f2f2" textLength="23.9" lengthAdjust="spacingAndGlyphs">Base</text>
<text x="678" y="123.3" font-size="12" fill="#f2f2f2" textLength="52.5" lengthAdjust="spacingAndGlyphs">Properties</text>
<text x="1112" y="123.3" font-size="12" fill="#f2f2f2" textLength="52.5" lengthAdjust="spacingAndGlyphs">Properties</text>
<path d="M120.5 115.5h6l-3.0 3.5z" fill="#f2f2f2"/>
<path d="M166.5 115.5h6l-3.0 3.5z" fill="#f2f2f2"/>
<path d="M504 115.5h6l-3.0 3.5z" fill="#f2f2f2"/>
<path d="M964 115.5h6l-3.0 3.5z" fill="#f2f2f2"/>
<path d="M1473.3 115.5h6l-3.0 3.5z" fill="#f2f2f2"/>
<path d="M1562 115.5h6l-3.0 3.5z" fill="#f2f2f2"/>
<path d="M1646 115.5h6l-3.0 3.5z" fill="#f2f2f2"/>
<text x="262.5" y="74.7" font-size="12" fill="#f2f2f2" textLength="29.5" lengthAdjust="spacingAndGlyphs">Move</text>
<text x="334" y="74.7" font-size="12" fill="#f2f2f2" textLength="34" lengthAdjust="spacingAndGlyphs">Rotate</text>
<text x="403.5" y="74.7" font-size="12" fill="#f2f2f2" textLength="21.5" lengthAdjust="spacingAndGlyphs">Trim</text>
<text x="618.5" y="74.7" font-size="12" fill="#f2f2f2" textLength="31.0" lengthAdjust="spacingAndGlyphs">Linear</text>
<text x="1012.5" y="74.7" font-size="12" fill="#f2f2f2" textLength="33.5" lengthAdjust="spacingAndGlyphs">Create</text>
<text x="262.5" y="99" font-size="12" fill="#f2f2f2" textLength="27.5" lengthAdjust="spacingAndGlyphs">Copy</text>
<text x="334" y="99" font-size="12" fill="#f2f2f2" textLength="33" lengthAdjust="spacingAndGlyphs">Mirror</text>
<text x="403.5" y="99" font-size="12" fill="#f2f2f2" textLength="24.5" lengthAdjust="spacingAndGlyphs">Fillet</text>
<text x="618.5" y="99" font-size="12" fill="#f2f2f2" textLength="34.0" lengthAdjust="spacingAndGlyphs">Leader</text>
<text x="856" y="99" font-size="12" fill="#f2f2f2" textLength="71.5" lengthAdjust="spacingAndGlyphs">Make Current</text>
<text x="1012.5" y="99" font-size="12" fill="#f2f2f2" textLength="19.5" lengthAdjust="spacingAndGlyphs">Edit</text>
<text x="262.5" y="122.7" font-size="12" fill="#f2f2f2" textLength="36.0" lengthAdjust="spacingAndGlyphs">Stretch</text>
<text x="334" y="122.7" font-size="12" fill="#f2f2f2" textLength="27" lengthAdjust="spacingAndGlyphs">Scale</text>
<text x="403.5" y="122.7" font-size="12" fill="#f2f2f2" textLength="26.5" lengthAdjust="spacingAndGlyphs">Array</text>
<text x="618.5" y="122.7" font-size="12" fill="#f2f2f2" textLength="26.5" lengthAdjust="spacingAndGlyphs">Table</text>
<text x="856" y="122.7" font-size="12" fill="#f2f2f2" textLength="64.5" lengthAdjust="spacingAndGlyphs">Match Layer</text>
<text x="1012.5" y="122.7" font-size="12" fill="#f2f2f2" textLength="74.5" lengthAdjust="spacingAndGlyphs">Edit Attributes</text>
<path d="M436.5 69.5h5.5l-2.75 3z" fill="#f2f2f2"/>
<path d="M438 93.5h5.5l-2.75 3z" fill="#f2f2f2"/>
<path d="M438 117.5h5.5l-2.75 3z" fill="#f2f2f2"/>
<path d="M657.5 69.5h5.5l-2.75 3z" fill="#f2f2f2"/>
<path d="M660.5 93.5h5.5l-2.75 3z" fill="#f2f2f2"/>
<path d="M1094.5 117.5h5.5l-2.75 3z" fill="#f2f2f2"/>
<path d="M217.5 69.5h5.5l-2.75 3z" fill="#f2f2f2"/>
<path d="M217.5 93.5h5.5l-2.75 3z" fill="#f2f2f2"/>
<path d="M217.5 117.5h5.5l-2.75 3z" fill="#f2f2f2"/>
<text x="101" y="147.1" font-size="12" fill="#f2f2f2" textLength="27" lengthAdjust="spacingAndGlyphs">Draw</text>
<path d="M133 141.8h7.5l-3.75 4z" fill="#f2f2f2"/>
<text x="333" y="147.1" font-size="12" fill="#f2f2f2" textLength="38" lengthAdjust="spacingAndGlyphs">Modify</text>
<path d="M377.5 141.8h7.5l-3.75 4z" fill="#f2f2f2"/>
<text x="541" y="147.1" font-size="12" fill="#f2f2f2" textLength="59.5" lengthAdjust="spacingAndGlyphs">Annotation</text>
<path d="M607.5 141.8h7.5l-3.75 4z" fill="#f2f2f2"/>
<text x="786" y="147.1" font-size="12" fill="#f2f2f2" textLength="32.7" lengthAdjust="spacingAndGlyphs">Layers</text>
<path d="M825 141.8h7.5l-3.75 4z" fill="#f2f2f2"/>
<text x="1005" y="147.1" font-size="12" fill="#f2f2f2" textLength="28.7" lengthAdjust="spacingAndGlyphs">Block</text>
<path d="M1040.5 141.8h7.5l-3.75 4z" fill="#f2f2f2"/>
<text x="1200" y="147.1" font-size="12" fill="#f2f2f2" textLength="52.5" lengthAdjust="spacingAndGlyphs">Properties</text>
<path d="M1259.5 141.8h7.5l-3.75 4z" fill="#f2f2f2"/>
<text x="1380.3" y="147.1" font-size="12" fill="#f2f2f2" textLength="37.7" lengthAdjust="spacingAndGlyphs">Groups</text>
<path d="M1424.5 141.8h7.5l-3.75 4z" fill="#f2f2f2"/>
<text x="1462.5" y="147.1" font-size="12" fill="#f2f2f2" textLength="38.0" lengthAdjust="spacingAndGlyphs">Utilities</text>
<path d="M1507.2 141.8h7.5l-3.75 4z" fill="#f2f2f2"/>
<text x="1552.6" y="147.1" font-size="12" fill="#f2f2f2" textLength="51.4" lengthAdjust="spacingAndGlyphs">Clipboard</text>
<text x="1623.3" y="147.1" font-size="12" fill="#f2f2f2" textLength="24.5" lengthAdjust="spacingAndGlyphs">View</text>
<path d="M1654.5 141.8h7.5l-3.75 4z" fill="#f2f2f2"/>
<path d="M1362 142l4.5 4.5m0 -3.5v3.5h-3.5" fill="none" stroke="#e8e8e8" stroke-width="1.3"/>
<path d="M1669 142l4.5 4.5m0 -3.5v3.5h-3.5" fill="none" stroke="#e8e8e8" stroke-width="1.3"/>
<text x="836" y="75" font-size="12" fill="#f2f2f2" textLength="33.5" lengthAdjust="spacingAndGlyphs">CONC</text>
<path d="M932.5 69h8l-4.0 4.2z" fill="#f2f2f2"/>
<text x="1228" y="75" font-size="12" fill="#f2f2f2" textLength="40.3" lengthAdjust="spacingAndGlyphs">ByLayer</text>
<text x="1258.7" y="98.3" font-size="12" fill="#f2f2f2" textLength="40.8" lengthAdjust="spacingAndGlyphs">ByLayer</text>
<text x="1258.7" y="122.2" font-size="12" fill="#f2f2f2" textLength="40.8" lengthAdjust="spacingAndGlyphs">ByLayer</text>
<path d="M1359 69h8l-4.0 4.2z" fill="#f2f2f2"/>
<path d="M1359 92.3h8l-4.0 4.2z" fill="#f2f2f2"/>
<path d="M1359 116.2h8l-4.0 4.2z" fill="#f2f2f2"/>
<line x1="1192.5" y1="94.3" x2="1256" y2="94.3" stroke="#e8e8e8" stroke-width="1"/>
<line x1="1192.5" y1="118.2" x2="1256" y2="118.2" stroke="#e8e8e8" stroke-width="1"/>
<rect x="817.5" y="65.5" width="13" height="13" fill="#fff" stroke="#111" stroke-width="1.2"/>
<rect x="1202" y="63.5" width="15" height="15" fill="#080808" stroke="#8a8a8a" stroke-width="1"/>
<defs><linearGradient id="tg" x1="0" y1="0" x2="0" y2="1"><stop offset="0" stop-color="#636363"/><stop offset="0.5" stop-color="#565656"/><stop offset="1" stop-color="#606060"/></linearGradient><linearGradient id="tga" x1="0" y1="0" x2="0" y2="1"><stop offset="0" stop-color="#7c7c7c"/><stop offset="1" stop-color="#666"/></linearGradient></defs>
<path d="M1124.8999999999999 178.6 C1132.8999999999999 178.6 1133.8999999999999 174.6 1135.8999999999999 168.6 C1137.8999999999999 160.2 1139.8999999999999 157.2 1146.8999999999999 157.2 L1248.8999999999999 157.2 C1255.8999999999999 157.2 1257.8999999999999 160.2 1259.8999999999999 168.6 C1261.8999999999999 174.6 1262.8999999999999 178.6 1270.8999999999999 178.6 Z" fill="url(#tg)"/>
<path d="M1001.8 178.6 C1009.8 178.6 1010.8 174.6 1012.8 168.6 C1014.8 160.2 1016.8 157.2 1023.8 157.2 L1125.8 157.2 C1132.8 157.2 1134.8 160.2 1136.8 168.6 C1138.8 174.6 1139.8 178.6 1147.8 178.6 Z" fill="url(#tg)"/>
<path d="M878.6999999999999 178.6 C886.6999999999999 178.6 887.6999999999999 174.6 889.6999999999999 168.6 C891.6999999999999 160.2 893.6999999999999 157.2 900.6999999999999 157.2 L1002.6999999999998 157.2 C1009.6999999999998 157.2 1011.6999999999998 160.2 1013.6999999999998 168.6 C1015.6999999999998 174.6 1016.6999999999998 178.6 1024.6999999999998 178.6 Z" fill="url(#tg)"/>
<path d="M755.5999999999999 178.6 C763.5999999999999 178.6 764.5999999999999 174.6 766.5999999999999 168.6 C768.5999999999999 160.2 770.5999999999999 157.2 777.5999999999999 157.2 L879.5999999999999 157.2 C886.5999999999999 157.2 888.5999999999999 160.2 890.5999999999999 168.6 C892.5999999999999 174.6 893.5999999999999 178.6 901.5999999999999 178.6 Z" fill="url(#tg)"/>
<path d="M632.5 178.6 C640.5 178.6 641.5 174.6 643.5 168.6 C645.5 160.2 647.5 157.2 654.5 157.2 L756.5 157.2 C763.5 157.2 765.5 160.2 767.5 168.6 C769.5 174.6 770.5 178.6 778.5 178.6 Z" fill="url(#tg)"/>
<path d="M509.4 178.6 C517.4 178.6 518.4 174.6 520.4 168.6 C522.4 160.2 524.4 157.2 531.4 157.2 L633.4 157.2 C640.4 157.2 642.4 160.2 644.4 168.6 C646.4 174.6 647.4 178.6 655.4 178.6 Z" fill="url(#tg)"/>
<path d="M386.29999999999995 178.6 C394.29999999999995 178.6 395.29999999999995 174.6 397.29999999999995 168.6 C399.29999999999995 160.2 401.29999999999995 157.2 408.29999999999995 157.2 L510.29999999999995 157.2 C517.3 157.2 519.3 160.2 521.3 168.6 C523.3 174.6 524.3 178.6 532.3 178.6 Z" fill="url(#tg)"/>
<path d="M263.2 178.6 C271.2 178.6 272.2 174.6 274.2 168.6 C276.2 160.2 278.2 157.2 285.2 157.2 L387.2 157.2 C394.2 157.2 396.2 160.2 398.2 168.6 C400.2 174.6 401.2 178.6 409.2 178.6 Z" fill="url(#tg)"/>
<path d="M140.1 178.6 C148.1 178.6 149.1 174.6 151.1 168.6 C153.1 160.2 155.1 157.2 162.1 157.2 L264.1 157.2 C271.1 157.2 273.1 160.2 275.1 168.6 C277.1 174.6 278.1 178.6 286.1 178.6 Z" fill="url(#tg)"/>
<path d="M17.0 178.6 C25.0 178.6 26.0 174.6 28.0 168.6 C30.0 160.2 32.0 157.2 39.0 157.2 L141.0 157.2 C148.0 157.2 150.0 160.2 152.0 168.6 C154.0 174.6 155.0 178.6 163.0 178.6 Z" fill="url(#tg)"/>
<path d="M1248.0 178.6 C1256.0 178.6 1257.0 174.6 1259.0 168.6 C1261.0 160.2 1263.0 157.2 1270.0 157.2 L1372.0 157.2 C1379.0 157.2 1381.0 160.2 1383.0 168.6 C1385.0 174.6 1386.0 178.6 1394.0 178.6 Z" fill="url(#tga)"/>
<text x="40.0" y="172.5" font-size="12" fill="#d8d8d8" textLength="24" lengthAdjust="spacingAndGlyphs">Start</text>
<text x="163.1" y="172.5" font-size="12" fill="#d8d8d8" textLength="36.7" lengthAdjust="spacingAndGlyphs">A1103*</text>
<path d="M256.4 165l6 6m0 -6l-6 6" fill="none" stroke="#2e2e2e" stroke-width="1.8"/>
<text x="286.2" y="172.5" font-size="12" fill="#d8d8d8" textLength="36.7" lengthAdjust="spacingAndGlyphs">A1104*</text>
<path d="M379.5 165l6 6m0 -6l-6 6" fill="none" stroke="#2e2e2e" stroke-width="1.8"/>
<text x="409.3" y="172.5" font-size="12" fill="#d8d8d8" textLength="36.7" lengthAdjust="spacingAndGlyphs">A1201*</text>
<path d="M502.6 165l6 6m0 -6l-6 6" fill="none" stroke="#2e2e2e" stroke-width="1.8"/>
<text x="532.4" y="172.5" font-size="12" fill="#d8d8d8" textLength="36.7" lengthAdjust="spacingAndGlyphs">A1301*</text>
<path d="M625.7 165l6 6m0 -6l-6 6" fill="none" stroke="#2e2e2e" stroke-width="1.8"/>
<text x="655.5" y="172.5" font-size="12" fill="#d8d8d8" textLength="36.7" lengthAdjust="spacingAndGlyphs">A2101*</text>
<path d="M748.8 165l6 6m0 -6l-6 6" fill="none" stroke="#2e2e2e" stroke-width="1.8"/>
<text x="778.6" y="172.5" font-size="12" fill="#d8d8d8" textLength="36.7" lengthAdjust="spacingAndGlyphs">A2102*</text>
<path d="M871.9 165l6 6m0 -6l-6 6" fill="none" stroke="#2e2e2e" stroke-width="1.8"/>
<text x="901.7" y="172.5" font-size="12" fill="#d8d8d8" textLength="36.7" lengthAdjust="spacingAndGlyphs">A2201*</text>
<path d="M995.0 165l6 6m0 -6l-6 6" fill="none" stroke="#2e2e2e" stroke-width="1.8"/>
<text x="1024.8" y="172.5" font-size="12" fill="#d8d8d8" textLength="36.7" lengthAdjust="spacingAndGlyphs">A2202*</text>
<path d="M1118.1 165l6 6m0 -6l-6 6" fill="none" stroke="#2e2e2e" stroke-width="1.8"/>
<text x="1147.9" y="172.5" font-size="12" fill="#d8d8d8" textLength="36.7" lengthAdjust="spacingAndGlyphs">A2301*</text>
<path d="M1241.2 165l6 6m0 -6l-6 6" fill="none" stroke="#2e2e2e" stroke-width="1.8"/>
<text x="1271.0" y="172.5" font-size="12" fill="#fff" textLength="31.5" lengthAdjust="spacingAndGlyphs">A2303</text>
<path d="M1364.3 165l6 6m0 -6l-6 6" fill="none" stroke="#4a4a4a" stroke-width="1.8"/>
<path d="M1389 161 L1404 161 C1409 161 1410 166 1411.5 176 L1400 176 C1393 176 1391 168 1389 161Z" fill="#555" stroke="#4a4a4a" stroke-width="0.6"/>
<path d="M1397 168.5h8m-4 -4v8" fill="none" stroke="#e8e8e8" stroke-width="1.8"/>
<line x1="1788.7" y1="17.3" x2="1798.8" y2="17.3" stroke="#fff" stroke-width="1.1"/>
<rect x="1834.7" y="12.4" width="9.6" height="9.6" fill="none" stroke="#fff" stroke-width="1.1" rx="1.5"/>
<path d="M1880 12l10 10m0 -10l-10 10" fill="none" stroke="#fff" stroke-width="1.1"/>
<rect x="1846" y="198.5" width="12" height="4.5" fill="#e8e8e8" stroke="#444" stroke-width="1"/>
<rect x="1869" y="192.5" width="8.5" height="8.5" fill="#e8e8e8" stroke="#444" stroke-width="1"/>
<rect x="1866" y="195" width="8.5" height="8.5" fill="#e8e8e8" stroke="#444" stroke-width="1"/>
<rect x="1868.7" y="197.7" width="3" height="3" fill="#555"/>
<path d="M1887.5 194.5l8 8m0 -8l-8 8" fill="none" stroke="#444" stroke-width="4"/>
<path d="M1887.5 194.5l8 8m0 -8l-8 8" fill="none" stroke="#efefef" stroke-width="2.2"/>
<rect x="1871.7" y="443.8" width="32.5" height="133" fill="#9b9b9b" stroke="#767676" stroke-width="1.5" rx="4"/>
<line x1="1873" y1="454.5" x2="1903" y2="454.5" stroke="#8c8c8c" stroke-width="1"/>
<circle cx="1897.7" cy="449.2" r="2.8" fill="none" stroke="#868686" stroke-width="1"/>
<path d="M1896.2 447.7l3 3m0 -3l-3 3" fill="none" stroke="#868686" stroke-width="0.8"/>
<circle cx="1897.7" cy="569.5" r="2.8" fill="none" stroke="#868686" stroke-width="1"/>
<path d="M1896 569h3.4l-1.7 2z" fill="#868686"/>
<path d="M1883 465h8a4 4 0 0 1 4 4v8a0 0 0 0 1 0 0h-4 M1888 483h-5a7 7 0 0 1 -7 -7v-4a7 7 0 0 1 7 -7" fill="none" stroke="#868686" stroke-width="1.3"/>
<circle cx="1885" cy="473.5" r="5" fill="none" stroke="#868686" stroke-width="1.3"/>
<text x="1888.5" y="485.5" font-size="7" fill="#868686" font-weight="bold">2D</text>
<line x1="1875" y1="490.5" x2="1901" y2="490.5" stroke="#8c8c8c" stroke-width="0.8" stroke-dasharray="1 1"/>
<path d="M1880 510c-2 -3 -4 -5 -3 -6c1.5 -1 3 1 5 3l-1 -8c0 -2 2 -2 2.5 0l1 6l0 -8c0 -2 2.3 -2 2.5 0l0.5 8l1.5 -7c0.5 -2 2.5 -1.5 2.3 0.5l-1 8l2 -4c1 -2 3 -1 2.3 1c-1.5 4 -2 9 -5 13h-8c-2 -2 -3 -4 -4.5 -6.5z" fill="none" stroke="#868686" stroke-width="1.2"/>
<path d="M1877 524l14 14m-14 0l14 -14M1877 528v-4h4M1887 524h4v4M1877 534v4h4" fill="none" stroke="#868686" stroke-width="1.2"/>
<circle cx="1891" cy="538.5" r="4" fill="#9b9b9b" stroke="#868686" stroke-width="1.2"/>
<line x1="1894" y1="541.5" x2="1899" y2="546" stroke="#868686" stroke-width="2.2"/>
<path d="M1885 553h5l-2.5 2.5z" fill="#868686"/>
<polygon points="24.6,891.4 24.6,978.5 74.5,978.5" fill="none" stroke="#2b3cf5" stroke-width="1.3"/>
<polyline points="24.6,970.5 32.5,970.5 32.5,978.5" fill="none" stroke="#2b3cf5" stroke-width="1.3"/>
<path d="M25.9 917l6.4 6l6.4 -6M32.3 923v6.4" fill="none" stroke="#2b3cf5" stroke-width="1.3"/>
<path d="M51.7 964.3l12.9 12.4M64.6 964.3l-12.9 12.4" fill="none" stroke="#2b3cf5" stroke-width="1.3"/>
<path d="M58 16h11.5l4.5 4.5v7.3h-16z" fill="#fafafa"/><path d="M69.5 16v4.5h4.5z" fill="#c8c8c8"/><path d="M81.5 16.3h5.5l1.5 2h7v2.5h-11.5l-2.5 7.5z" fill="#eee"/><path d="M84.5 21.3h13.5l-3.3 7.2h-13.5z" fill="#fafafa"/><path d="M106.5 14.3h15v15.5h-13l-2 -2z" fill="#d4d4d4"/><rect x="109.2" y="14.3" width="9.6" height="6" fill="#fafafa"/><rect x="110.0" y="24.5" width="8" height="5.3" fill="#fafafa"/><rect x="111.5" y="25.5" width="2" height="3" fill="#aaa"/><path d="M130.5 14.3h15v15.5h-13l-2 -2z" fill="#d4d4d4"/><rect x="133.2" y="14.3" width="9.6" height="6" fill="#fafafa"/><rect x="134.0" y="24.5" width="8" height="5.3" fill="#fafafa"/><rect x="135.5" y="25.5" width="2" height="3" fill="#aaa"/><path d="M139 27l6.5 -7.5l2.3 2l-6.5 7.5z" fill="#f3c567"/><path d="M145.5 19.5l1.3 -1.5l2.3 2l-1.3 1.5z" fill="#e84c4c"/><rect x="155.5" y="13.5" width="9" height="15.5" fill="#555" stroke="#c8c8c8" stroke-width="1.2" rx="1"/><path d="M161.5 24h3l1 1.5h4.5v4h-8.5z" fill="#f3c567"/><line x1="158.5" y1="27.5" x2="161" y2="27.5" stroke="#ddd" stroke-width="1"/><rect x="183" y="13.5" width="9" height="15.5" fill="#666" stroke="#c8c8c8" stroke-width="1.2" rx="1"/><path d="M178.5 19.3h6M182.5 16.5l3 2.8l-3 2.8" fill="none" stroke="#3f9ee0" stroke-width="1.8"/><line x1="186" y1="27.5" x2="189" y2="27.5" stroke="#ddd" stroke-width="1"/><rect x="204.5" y="13.5" width="11.5" height="5.5" fill="#fafafa"/><rect x="201.5" y="18.5" width="17.5" height="8" fill="#e4dede"/><rect x="204.5" y="23.5" width="11.5" height="6" fill="#58b2f0"/><path d="M226.5 20.5l6.5 -5v3.2c5 0 8 2 8.5 7c-2 -3 -4.5 -3.6 -8.5 -3.6v3.4z" fill="#f0f0f0"/><path d="M249.3 20.3h5l-2.5 3z" fill="#f0f0f0"/><path d="M277 20.5l-6.5 -5v3.2c-5 0 -8 2 -8.5 7c2 -3 4.5 -3.6 8.5 -3.6v3.4z" fill="#9a9a9a"/><path d="M285 20.3h5l-2.5 3z" fill="#cfcfcf"/><rect x="298" y="17" width="7.5" height="1.6" fill="#f4f4f4"/><path d="M298 20.3h7.5l-3.75 4z" fill="#f4f4f4"/><text x="24.8" y="38.8" font-size="34.5" fill="#c4211b" textLength="24" lengthAdjust="spacingAndGlyphs" text-anchor="middle" font-weight="bold">A</text><path d="M15 38l7.5 -19" fill="none" stroke="#8a1510" stroke-width="1.1"/><path d="M17 33.5c3 -2.5 7 -0.5 11 -3.5" fill="none" stroke="#6a100c" stroke-width="1"/><path d="M39.3 28.3h6.2l-3.1 3.6z" fill="#222"/>
<path d="M1302.5 17.5l4.5 4.3l-4.5 4.3z" fill="#f4f4f4"/><path d="M1497 29.5v-8l1.5 -5h3l1.2 3.5h2.6l1.2 -3.5h3l1.5 5v8h-5v-6.5h-4v6.5z" fill="#f8f8f8" stroke="#222" stroke-width="0.9"/><rect x="1497" y="24.5" width="5" height="5" fill="#f8f8f8" stroke="#222" stroke-width="0.9"/><rect x="1506" y="24.5" width="5" height="5" fill="#f8f8f8" stroke="#222" stroke-width="0.9"/><path d="M1520.5 29.5c0.5 -4 3 -4.5 5 -5.5c-2 -2 -2.5 -4 -2.3 -6c0.3 -3 2.3 -4 4.3 -4s4 1 4.3 4c0.2 2 -0.3 4 -2.3 6c2 1 4.5 1.5 5 5.5z" fill="#f8f8f8" stroke="#222" stroke-width="0.9"/><path d="M1626 20.3h5.5l-2.75 3.2z" fill="#f4f4f4"/><path d="M1642.5 15.5h3l2.5 9h8l1.7 -6h-11" fill="none" stroke="#22306e" stroke-width="1.6"/><path d="M1646.5 19h10.5l-1.4 5h-7.8z" fill="#dfe6f5"/><circle cx="1648.5" cy="27.5" r="1.4" fill="#fff" stroke="#22306e" stroke-width="1"/><circle cx="1655" cy="27.5" r="1.4" fill="#fff" stroke="#22306e" stroke-width="1"/><path d="M1674 16l7 11h-14z" fill="none" stroke="#22306e" stroke-width="2.6" stroke-linejoin="round"/><path d="M1674 16l7 11h-14z" fill="none" stroke="#e8eefc" stroke-width="1" stroke-linejoin="round"/><circle cx="1674" cy="16" r="1.6" fill="#fff" stroke="#22306e" stroke-width="0.9"/><circle cx="1667.3" cy="27" r="1.6" fill="#fff" stroke="#22306e" stroke-width="0.9"/><circle cx="1680.7" cy="27" r="1.6" fill="#fff" stroke="#22306e" stroke-width="0.9"/><path d="M1687 20.3h5.5l-2.75 3.2z" fill="#f4f4f4"/><line x1="1702.2" y1="13" x2="1702.2" y2="31" stroke="#c4c4c4" stroke-width="1" stroke-dasharray="1 1.5"/><circle cx="1720" cy="21.7" r="7.3" fill="#fafafa" stroke="#222" stroke-width="1"/><text x="1720" y="26.3" font-size="12.5" fill="#2b3a86" text-anchor="middle" font-weight="bold">?</text><path d="M1734.8 20.3h5.5l-2.75 3.2z" fill="#f4f4f4"/><rect x="873" y="41" width="13" height="7.5" fill="#f4f4f4" rx="2"/><path d="M876.5 46.3l3 -3l3 3z" fill="#333"/><path d="M891.3 43.8h5.5l-2.75 3z" fill="#f4f4f4"/>
<line x1="16.2" y1="92.5" x2="45.3" y2="63.3" stroke="#dedede" stroke-width="1.3"/><rect x="14.4" y="90.7" width="3.6" height="3.6" fill="#5db7ee"/><rect x="43.5" y="61.5" width="3.6" height="3.6" fill="#5db7ee"/><path d="M59.3 85.3H79.3" fill="none" stroke="#dedede" stroke-width="1.3"/><path d="M79.3 85.3C93 85.3 93 70.3 79.3 70.3" fill="none" stroke="#dedede" stroke-width="1.3"/><rect x="57.5" y="83.5" width="3.6" height="3.6" fill="#5db7ee"/><rect x="77.5" y="83.5" width="3.6" height="3.6" fill="#5db7ee"/><rect x="77.5" y="68.5" width="3.6" height="3.6" fill="#5db7ee"/><circle cx="123.5" cy="77.5" r="15.2" fill="none" stroke="#dedede" stroke-width="1.3"/><rect x="121.7" y="75.7" width="3.6" height="3.6" fill="#5db7ee"/><path d="M125.5 75.5L132 69.2M128.5 69h3.8v3.8" fill="none" stroke="#5db7ee" stroke-width="1.2"/><path d="M157.3 91.2C158.5 77 168 66.5 184 64.5" fill="none" stroke="#dedede" stroke-width="1.3"/><rect x="155.5" y="89.4" width="3.6" height="3.6" fill="#5db7ee"/><rect x="163.2" y="70.4" width="3.6" height="3.6" fill="#5db7ee"/><rect x="182.2" y="62.7" width="3.6" height="3.6" fill="#5db7ee"/><rect x="196" y="66.7" width="13.3" height="9.1" fill="none" stroke="#dedede" stroke-width="1.3"/><rect x="194.7" y="65.4" width="2.6" height="2.6" fill="#5db7ee"/><rect x="208.0" y="74.5" width="2.6" height="2.6" fill="#5db7ee"/><ellipse cx="201.8" cy="95" rx="7.3" ry="4.6" fill="none" stroke="#dedede" stroke-width="1.2" stroke-dasharray="14 3"/><rect x="200.6" y="93.8" width="2.4" height="2.4" fill="#5db7ee"/><rect x="200.6" y="89.2" width="2.4" height="2.4" fill="#5db7ee"/><rect x="207.8" y="93.8" width="2.4" height="2.4" fill="#5db7ee"/><rect x="198.2" y="113.6" width="9.4" height="10" fill="#5db7ee"/><path d="M199 120l5 -6M201 123l6 -7M204.5 123.5l3 -3.5" fill="none" stroke="#3d6f96" stroke-width="0.9"/><path d="M195.5 113.6h15M195.5 123.6h15M198.2 111v15.5M207.6 111v15.5" fill="none" stroke="#dedede" stroke-width="1.1"/>
<path d="M242.8 70.8h11M248.3 65.3v11" fill="none" stroke="#f4f4f4" stroke-width="2.4"/><path d="M240.3 70.8l4 -3.4v6.8zM256.3 70.8l-4 -3.4v6.8zM248.3 62.8l-3.4 4h6.8zM248.3 78.8l-3.4 -4h6.8z" fill="#f4f4f4"/><path d="M245.8 70.8h5M248.3 68.3v5" fill="none" stroke="#555" stroke-width="0.7"/><circle cx="244.7" cy="90.3" r="3" fill="none" stroke="#dedede" stroke-width="1.2"/><path d="M249.5 88.5h4.2v4.5M251.8 91.5l1.9 2.2l1.9 -2.2" fill="none" stroke="#dedede" stroke-width="1.2"/><circle cx="247.8" cy="99.5" r="3.1" fill="none" stroke="#5db7ee" stroke-width="1.2"/><circle cx="253.3" cy="99.5" r="3.1" fill="none" stroke="#5db7ee" stroke-width="1.2"/><path d="M247.3 111.3h-6v15h6" fill="none" stroke="#dedede" stroke-width="1.2"/><line x1="247.3" y1="111.3" x2="247.3" y2="118.5" stroke="#dedede" stroke-width="1.2"/><path d="M250.8 111.3l5.8 15h-5" fill="none" stroke="#5db7ee" stroke-width="1.2"/><path d="M245 122.5h6.5M249.5 120.5l2.2 2l-2.2 2" fill="none" stroke="#dedede" stroke-width="1.1"/><path d="M321.8 66.3a6.7 6.7 0 1 0 6.2 4.2" fill="none" stroke="#dedede" stroke-width="1.3"/><path d="M320.3 63.3l3.6 3l-3.6 3z" fill="#dedede"/><path d="M319 89.5v11.8h-5.7z" fill="none" stroke="#dedede" stroke-width="1.1"/><path d="M321.8 89.5v11.8h5.7z" fill="none" stroke="#5db7ee" stroke-width="1.1"/><path d="M313 111.7h15.3v14.6" fill="none" stroke="#5db7ee" stroke-width="1.2"/><path d="M313 111.7v14.6h15.3" fill="none" stroke="#5db7ee" stroke-width="1.2"/><rect x="313" y="118.3" width="8.7" height="8" fill="#4a4a4a" stroke="#dedede" stroke-width="1.2"/><line x1="382" y1="64.7" x2="388" y2="64.7" stroke="#5db7ee" stroke-width="1.2" stroke-dasharray="1.4 1"/><line x1="390.8" y1="64.7" x2="397.5" y2="64.7" stroke="#dedede" stroke-width="1.2"/><path d="M386 66.5l5.5 8.5M394.5 66.5l-5.5 8.5" fill="none" stroke="#dedede" stroke-width="1.4"/><circle cx="388.3" cy="77" r="1.9" fill="none" stroke="#dedede" stroke-width="1.1"/><circle cx="392.6" cy="77" r="1.9" fill="none" stroke="#dedede" stroke-width="1.1"/><path d="M382 98.5C382 91.5 385 88 391 88" fill="none" stroke="#5db7ee" stroke-width="1.3"/><line x1="382" y1="98.5" x2="382" y2="103" stroke="#dedede" stroke-width="1.2"/><line x1="391" y1="88" x2="397.5" y2="88" stroke="#dedede" stroke-width="1.2"/><rect x="383" y="112.5" width="5.2" height="5.2" fill="none" stroke="#dedede" stroke-width="1.1"/><rect x="391" y="112.5" width="5.2" height="5.2" fill="none" stroke="#5db7ee" stroke-width="1.1"/><rect x="383" y="120.8" width="5.2" height="5.2" fill="none" stroke="#5db7ee" stroke-width="1.1"/><rect x="391" y="120.8" width="5.2" height="5.2" fill="none" stroke="#5db7ee" stroke-width="1.1"/><path d="M462 73.5l8 -9.5l2.8 2.4l-8 9.5z" fill="#f3c567"/><path d="M459.5 76.5l2.5 -3l2.8 2.4l-2.5 3z" fill="#e84c4c"/><line x1="456.8" y1="78.7" x2="460" y2="78.7" stroke="#dedede" stroke-width="1"/><line x1="461.5" y1="78.7" x2="472.5" y2="78.7" stroke="#5db7ee" stroke-width="1.1"/><path d="M458 93h10.5v9.5h-10.5zM458 93l3.5 -3.5h10.5l-3.5 3.5M472 89.5v9.5l-3.5 3.5" fill="none" stroke="#5db7ee" stroke-width="1.1"/><rect x="460" y="96" width="6" height="6.5" fill="none" stroke="#dedede" stroke-width="1"/><path d="M472.5 112.3h-9a6.2 6.2 0 0 0 0 12.4h9" fill="none" stroke="#5db7ee" stroke-width="1.2"/><path d="M472.5 115.6h-8a3 3 0 0 0 0 6h8" fill="none" stroke="#5db7ee" stroke-width="1.2"/>
<text x="507.5" y="91.7" font-size="39" fill="#dedede" textLength="27.5" lengthAdjust="spacingAndGlyphs" text-anchor="middle">A</text><line x1="544" y1="61.7" x2="544" y2="93.7" stroke="#dedede" stroke-width="1.2"/><line x1="575.7" y1="61.7" x2="575.7" y2="93.7" stroke="#dedede" stroke-width="1.2"/><line x1="545.5" y1="68.3" x2="574.2" y2="68.3" stroke="#dedede" stroke-width="1.1"/><path d="M545 68.3l3.6 -1.8v3.6zM574.7 68.3l-3.6 -1.8v3.6z" fill="#dedede"/><path d="M559.9 78.5l-0.9 5h1.8zM553 82l2.6 4l1.4 -1zM566.8 82l-2.6 4l-1.4 -1zM548.5 88.5l4.5 1.6l0.4 -1.6zM571.3 88.5l-4.5 1.6l-0.4 -1.6z" fill="#f3c567" stroke="#f3c567" stroke-width="0.8"/><line x1="597.2" y1="64.2" x2="597.2" y2="77.5" stroke="#dedede" stroke-width="1.2"/><line x1="612.3" y1="64.2" x2="612.3" y2="77.5" stroke="#dedede" stroke-width="1.2"/><line x1="598.5" y1="68.7" x2="611" y2="68.7" stroke="#5db7ee" stroke-width="1.2"/><path d="M598 68.7l3 -1.7v3.4zM611.5 68.7l-3 -1.7v3.4z" fill="#5db7ee"/><circle cx="609.3" cy="91.5" r="3.2" fill="none" stroke="#dedede" stroke-width="1.2"/><path d="M606.3 92.5C602 93 601.5 96 599 100" fill="none" stroke="#dedede" stroke-width="1.2"/><path d="M597.3 101.5l1 -4.2l3 2.2z" fill="#dedede"/><rect x="597.2" y="112.6" width="15.2" height="13" fill="none" stroke="#dedede" stroke-width="1.1"/><rect x="597.2" y="112.6" width="15.2" height="3" fill="#dedede"/><path d="M597.2 119h15.2M597.2 122.3h15.2M602.3 115.6v10M607.4 115.6v10" fill="none" stroke="#dedede" stroke-width="1"/>
<path d="M696 62h19l-8 7h-19z" fill="#dedede"/><path d="M696 72h19l-8 7h-19z" fill="#dedede"/><path d="M696 82h19l-8 7h-19z" fill="#dedede"/><rect x="706.5" y="76" width="13" height="17.5" fill="#f0f0f0" rx="1"/><rect x="708.3" y="78" width="9.4" height="7.2" fill="#5db7ee"/><path d="M709 88.3h7.5M714.5 86.8l2 1.5M709 90.8h7.5M711 92.3l-2 -1.5" fill="none" stroke="#4a4a4a" stroke-width="0.9"/><circle cx="747" cy="69.5" r="4.6" fill="#f3c567"/><rect x="745.2" y="73.8" width="3.6" height="2.6" fill="#f4f4f4"/><circle cx="765.3" cy="70.5" r="3.4" fill="#f3c567"/><line x1="769.7" y1="70.5" x2="772.1" y2="70.5" stroke="#f3c567" stroke-width="1.1"/><line x1="768.41" y1="73.61" x2="770.11" y2="75.31" stroke="#f3c567" stroke-width="1.1"/><line x1="765.3" y1="74.9" x2="765.3" y2="77.3" stroke="#f3c567" stroke-width="1.1"/><line x1="762.19" y1="73.61" x2="760.49" y2="75.31" stroke="#f3c567" stroke-width="1.1"/><line x1="760.9" y1="70.5" x2="758.5" y2="70.5" stroke="#f3c567" stroke-width="1.1"/><line x1="762.19" y1="67.39" x2="760.49" y2="65.69" stroke="#f3c567" stroke-width="1.1"/><line x1="765.3" y1="66.1" x2="765.3" y2="63.7" stroke="#f3c567" stroke-width="1.1"/><line x1="768.41" y1="67.39" x2="770.11" y2="65.69" stroke="#f3c567" stroke-width="1.1"/><path d="M778.5 67v-3h3M787 64h3v3M778.5 73.5v3h3" fill="none" stroke="#dedede" stroke-width="1.1"/><rect x="780.5" y="66" width="7.5" height="7.5" fill="#8a8a8a" stroke="#dedede" stroke-width="0.8"/><circle cx="788.3" cy="74.5" r="2.3" fill="#f3c567"/><line x1="791.6" y1="74.5" x2="792.9" y2="74.5" stroke="#f3c567" stroke-width="1.1"/><line x1="790.63" y1="76.83" x2="791.55" y2="77.75" stroke="#f3c567" stroke-width="1.1"/><line x1="788.3" y1="77.8" x2="788.3" y2="79.1" stroke="#f3c567" stroke-width="1.1"/><line x1="785.97" y1="76.83" x2="785.05" y2="77.75" stroke="#f3c567" stroke-width="1.1"/><line x1="785.0" y1="74.5" x2="783.7" y2="74.5" stroke="#f3c567" stroke-width="1.1"/><line x1="785.97" y1="72.17" x2="785.05" y2="71.25" stroke="#f3c567" stroke-width="1.1"/><line x1="788.3" y1="71.2" x2="788.3" y2="69.9" stroke="#f3c567" stroke-width="1.1"/><line x1="790.63" y1="72.17" x2="791.55" y2="71.25" stroke="#f3c567" stroke-width="1.1"/><rect x="797.3" y="72" width="7" height="5.5" fill="#f3c567"/><path d="M802.3 72v-2.5a2.3 2.3 0 0 1 4.6 0v1" fill="none" stroke="#f3c567" stroke-width="1.4"/><path d="M743.5 88.5h8.5l-3.5 3.6h-8.5z" fill="#dedede"/><circle cx="751" cy="95" r="2.9" fill="#5db7ee"/><rect x="749.2" y="97.60000000000001" width="3.6" height="2.6" fill="#f4f4f4"/><path d="M766.0 87h8.5l-3.5 3.2h-8.5z" fill="#dedede"/><path d="M766.0 91h8.5l-3.5 3.2h-8.5z" fill="#dedede"/><path d="M766.0 95h8.5l-3.5 3.2h-8.5z" fill="#5db7ee"/><path d="M778.5 95.5l-5.5 5.5M773 97.5v3.5h3.5" fill="none" stroke="#dedede" stroke-width="1.2"/><path d="M790.5 88.5h8.5l-3.5 3.6h-8.5z" fill="#dedede"/><path d="M798.5 93.5v8M795 95.5l7 4M802 95.5l-7 4" fill="none" stroke="#5db7ee" stroke-width="1.1"/><path d="M814.5 88.5h8.5l-3.5 3.6h-8.5z" fill="#dedede"/><rect x="819.5" y="97" width="7" height="5.5" fill="#5db7ee"/><path d="M820.7 97v-2.5a2.3 2.3 0 0 1 4.6 0v2.5" fill="none" stroke="#5db7ee" stroke-width="1.4"/><path d="M839 95.5h10l-4 3.2h-10z" fill="#dedede"/><path d="M839 99.5h10l-4 3.2h-10z" fill="#dedede"/><path d="M839 91.5h10l-4 3.2h-10z" fill="#5db7ee"/><circle cx="843" cy="88.5" r="2.7" fill="#dedede"/><path d="M742.0 111h8.5l-3.5 3h-8.5z" fill="#dedede"/><path d="M742.0 114.7h8.5l-3.5 3h-8.5z" fill="#dedede"/><path d="M742.0 118.4h8.5l-3.5 3h-8.5z" fill="#dedede"/><circle cx="751" cy="118.5" r="2.9" fill="#f3c567"/><rect x="749.2" y="121.10000000000001" width="3.6" height="2.6" fill="#f4f4f4"/><path d="M766.0 111h8.5l-3.5 3.2h-8.5z" fill="#dedede"/><path d="M766.0 115h8.5l-3.5 3.2h-8.5z" fill="#dedede"/><path d="M766.0 119h8.5l-3.5 3.2h-8.5z" fill="#5db7ee"/><path d="M773 125.5l5.5 -5.5M778.5 123.5v-3.5h-3.5" fill="none" stroke="#dedede" stroke-width="1.2"/><path d="M790.0 111h8.5l-3.5 3h-8.5z" fill="#dedede"/><path d="M790.0 114.7h8.5l-3.5 3h-8.5z" fill="#dedede"/><path d="M790.0 118.4h8.5l-3.5 3h-8.5z" fill="#dedede"/><circle cx="798.5" cy="121" r="2.2" fill="#f3c567"/><line x1="801.7" y1="121.0" x2="803.1" y2="121.0" stroke="#f3c567" stroke-width="1.1"/><line x1="800.76" y1="123.26" x2="801.75" y2="124.25" stroke="#f3c567" stroke-width="1.1"/><line x1="798.5" y1="124.2" x2="798.5" y2="125.6" stroke="#f3c567" stroke-width="1.1"/><line x1="796.24" y1="123.26" x2="795.25" y2="124.25" stroke="#f3c567" stroke-width="1.1"/><line x1="795.3" y1="121.0" x2="793.9" y2="121.0" stroke="#f3c567" stroke-width="1.1"/><line x1="796.24" y1="118.74" x2="795.25" y2="117.75" stroke="#f3c567" stroke-width="1.1"/><line x1="798.5" y1="117.8" x2="798.5" y2="116.4" stroke="#f3c567" stroke-width="1.1"/><line x1="800.76" y1="118.74" x2="801.75" y2="117.75" stroke="#f3c567" stroke-width="1.1"/><path d="M814.5 112h8.5l-3.5 3.6h-8.5z" fill="#dedede"/><rect x="818.0" y="121" width="7" height="5.5" fill="#f3c567"/><path d="M823.0 121v-2.5a2.3 2.3 0 0 1 4.6 0v1" fill="none" stroke="#f3c567" stroke-width="1.4"/><path d="M838.5 111.5h9l-3.5 3h-9z" fill="#dedede"/><path d="M838.5 115.2h9l-3.5 3h-9z" fill="#dedede"/><path d="M838.5 118.9h9l-3.5 3h-9z" fill="#dedede"/><path d="M843 118l4.5 5.5l3 -2.5l-4.5 -5.5z" fill="#f3c567"/><path d="M847 116l2.5 -2l1.5 1.8l-2.5 2z" fill="#f0f0f0"/>
<path d="M966.5 60.5h11.5l5 5v25.5h-16.5z" fill="#5db7ee"/><path d="M978 60.5v5h5z" fill="#9fd3f5"/><rect x="951.5" y="70" width="21" height="14.5" fill="#7c7c7c" stroke="#dedede" stroke-width="1.1"/><circle cx="972.5" cy="84.5" r="7.2" fill="#7c7c7c" stroke="#dedede" stroke-width="1.1"/><rect x="950.3" y="83.3" width="2.6" height="2.6" fill="#dedede"/><rect x="992.5" y="66.5" width="8.5" height="6.5" fill="#7c7c7c" stroke="#dedede" stroke-width="1"/><circle cx="1002.5" cy="73.5" r="3.2" fill="#7c7c7c" stroke="#dedede" stroke-width="1"/><rect x="991.3" y="72.3" width="2" height="2" fill="#dedede"/><circle cx="1003.5" cy="66.5" r="1.8" fill="#f3c567"/><line x1="1006.3" y1="66.5" x2="1007.8" y2="66.5" stroke="#f3c567" stroke-width="1.1"/><line x1="1005.48" y1="68.48" x2="1006.54" y2="69.54" stroke="#f3c567" stroke-width="1.1"/><line x1="1003.5" y1="69.3" x2="1003.5" y2="70.8" stroke="#f3c567" stroke-width="1.1"/><line x1="1001.52" y1="68.48" x2="1000.46" y2="69.54" stroke="#f3c567" stroke-width="1.1"/><line x1="1000.7" y1="66.5" x2="999.2" y2="66.5" stroke="#f3c567" stroke-width="1.1"/><line x1="1001.52" y1="64.52" x2="1000.46" y2="63.46" stroke="#f3c567" stroke-width="1.1"/><line x1="1003.5" y1="63.7" x2="1003.5" y2="62.2" stroke="#f3c567" stroke-width="1.1"/><line x1="1005.48" y1="64.52" x2="1006.54" y2="63.46" stroke="#f3c567" stroke-width="1.1"/><rect x="992.5" y="90.5" width="8.5" height="6.5" fill="#7c7c7c" stroke="#dedede" stroke-width="1"/><circle cx="1002.5" cy="97.5" r="3.2" fill="#7c7c7c" stroke="#dedede" stroke-width="1"/><rect x="991.3" y="96.3" width="2" height="2" fill="#dedede"/><path d="M999 95l6 -7l2 1.7l-6 7z" fill="#f3c567"/><path d="M1005 88l1.2 -1.4l2 1.7l-1.2 1.4z" fill="#e84c4c"/><path d="M999 95l-0.8 2.6l2.8 -0.9z" fill="#f0f0f0"/><path d="M991.5 112l2 -1.5l6.5 0.5l5 6l-6.5 8l-7 -7z" fill="#dedede"/><path d="M994 114.5l3 3.5l4 -5" fill="none" stroke="#4a4a4a" stroke-width="1.2"/><path d="M1000 119l6 -7l2 1.7l-6 7z" fill="#f3c567"/><path d="M1006 112l1.2 -1.4l2 1.7l-1.2 1.4z" fill="#e84c4c"/>
<rect x="1124" y="62" width="19.5" height="27.5" fill="#dedede" rx="1"/><rect x="1126.3" y="64.5" width="12.5" height="9.5" fill="#5db7ee"/><path d="M1126.5 79.5h10M1129.5 77.5v4M1126.5 84.5h10M1133.5 82.5v4" fill="none" stroke="#666" stroke-width="1"/><path d="M1137.5 86.5l7 -6l6 7.5l-7 5.5z" fill="#f3c567"/><path d="M1146 79.5l4 -3.5l3.5 4l-4 3.5z" fill="#f0f0f0"/><path d="M1149.5 76.5l1.5 -1.5l1.3 1.5" fill="none" stroke="#f0f0f0" stroke-width="1.5"/><path d="M1178.7 70L1178.70 62.00A8 8 0 0 1 1185.63 66.00Z" fill="#f0b030"/><path d="M1178.7 70L1185.63 66.00A8 8 0 0 1 1185.63 74.00Z" fill="#f08030"/><path d="M1178.7 70L1185.63 74.00A8 8 0 0 1 1178.70 78.00Z" fill="#e84848"/><path d="M1178.7 70L1178.70 78.00A8 8 0 0 1 1171.77 74.00Z" fill="#4868e8"/><path d="M1178.7 70L1171.77 74.00A8 8 0 0 1 1171.77 66.00Z" fill="#40a0e8"/><path d="M1178.7 70L1171.77 66.00A8 8 0 0 1 1178.70 62.00Z" fill="#50c060"/><rect x="1171" y="86.5" width="16" height="1.4" fill="#dedede"/><rect x="1171" y="91" width="16" height="2.5" fill="#dedede"/><rect x="1171" y="97" width="16" height="4" fill="#dedede"/><line x1="1171" y1="111.5" x2="1187" y2="111.5" stroke="#dedede" stroke-width="1" stroke-dasharray="1 1"/><line x1="1171" y1="115.5" x2="1187" y2="115.5" stroke="#dedede" stroke-width="1.2" stroke-dasharray="4 1.5"/><line x1="1171" y1="119.5" x2="1187" y2="119.5" stroke="#dedede" stroke-width="1.2" stroke-dasharray="2.5 1.5"/><line x1="1171" y1="123.5" x2="1187" y2="123.5" stroke="#dedede" stroke-width="1.2" stroke-dasharray="3 1 1 1"/>
<path d="M1382 66h-4.5v27h4.5M1394.5 80v13h-4.5" fill="none" stroke="#dedede" stroke-width="1.5"/><rect x="1383" y="69" width="8.5" height="7.5" fill="#5db7ee"/><rect x="1385" y="67.5" width="4.5" height="2.5" fill="#3c3c3c"/><circle cx="1387.5" cy="84.5" r="4.2" fill="#8a8a8a" stroke="#dedede" stroke-width="1.3"/><circle cx="1399.5" cy="70.5" r="3" fill="#f3c567"/><line x1="1403.5" y1="70.5" x2="1406.5" y2="70.5" stroke="#f3c567" stroke-width="1.1"/><line x1="1402.33" y1="73.33" x2="1404.45" y2="75.45" stroke="#f3c567" stroke-width="1.1"/><line x1="1399.5" y1="74.5" x2="1399.5" y2="77.5" stroke="#f3c567" stroke-width="1.1"/><line x1="1396.67" y1="73.33" x2="1394.55" y2="75.45" stroke="#f3c567" stroke-width="1.1"/><line x1="1395.5" y1="70.5" x2="1392.5" y2="70.5" stroke="#f3c567" stroke-width="1.1"/><line x1="1396.67" y1="67.67" x2="1394.55" y2="65.55" stroke="#f3c567" stroke-width="1.1"/><line x1="1399.5" y1="66.5" x2="1399.5" y2="63.5" stroke="#f3c567" stroke-width="1.1"/><line x1="1402.33" y1="67.67" x2="1404.45" y2="65.55" stroke="#f3c567" stroke-width="1.1"/><rect x="1420" y="65.5" width="5" height="4.5" fill="none" stroke="#5db7ee" stroke-width="1"/><circle cx="1422.5" cy="75" r="2.5" fill="none" stroke="#dedede" stroke-width="1"/><path d="M1427.5 63.5h3v15h-3" fill="none" stroke="#dedede" stroke-width="1"/><path d="M1428.5 68.5l5 5m0 -5l-5 5" fill="none" stroke="#f03030" stroke-width="1.5"/><path d="M1421.5 87h-3v15h3M1427 87h3v6" fill="none" stroke="#dedede" stroke-width="1"/><rect x="1421.5" y="89.5" width="5" height="4.5" fill="none" stroke="#5db7ee" stroke-width="1"/><circle cx="1424" cy="98" r="2.3" fill="none" stroke="#dedede" stroke-width="1"/><path d="M1426 101l5 -6l1.8 1.5l-5 6z" fill="#f3c567"/><path d="M1431 95l1 -1.2l1.8 1.5l-1 1.2z" fill="#e84c4c"/><path d="M1421 111.5h-2.5v15h2.5M1426.5 111.5h2.5v3" fill="none" stroke="#f0f0f0" stroke-width="1"/><rect x="1421" y="113.5" width="5" height="4" fill="none" stroke="#60d060" stroke-width="1"/><circle cx="1423.5" cy="122" r="2.3" fill="none" stroke="#60d060" stroke-width="1"/><path d="M1427 115v11.5l2.8 -2.6l2 4l1.6 -0.8l-2 -4h3.6z" fill="#fff" stroke="#333" stroke-width="0.4"/>
<line x1="1463" y1="69" x2="1463" y2="77" stroke="#dedede" stroke-width="1.1"/><line x1="1491" y1="69" x2="1491" y2="77" stroke="#dedede" stroke-width="1.1"/><line x1="1464.5" y1="73" x2="1489.5" y2="73" stroke="#dedede" stroke-width="1.1"/><path d="M1464 73l3.5 -1.8v3.6zM1490 73l-3.5 -1.8v3.6z" fill="#dedede"/><rect x="1463" y="80" width="28" height="6" fill="#f3c567"/><path d="M1465.5 80v2M1468.0 80v3M1470.6 80v2M1473.2 80v3M1475.7 80v2M1478.2 80v3M1480.8 80v2M1483.3 80v3M1485.9 80v2M1488.5 80v3" fill="none" stroke="#9a7a30" stroke-width="0.7"/><path d="M1515.5 65.5v11l2.6 -2.4l1.8 3.8l1.5 -0.7l-1.8 -3.8h3.5z" fill="#f4f4f4"/><rect x="1522.5" y="70.5" width="8.5" height="7.5" fill="#f4f4f4"/><path d="M1524 72.5h1M1526 72.5h4M1524 74.5h1M1526 74.5h4M1524 76.3h1M1526 76.3h4" fill="none" stroke="#3a78c8" stroke-width="0.9"/><path d="M1523 62.5l-2 3.5h2l-1 3l4 -4.5h-2l1.5 -2z" fill="#f3c567"/><rect x="1516" y="88.5" width="13.5" height="13.5" fill="none" stroke="#58c858" stroke-width="1.1" stroke-dasharray="1.6 1"/><rect x="1518" y="92" width="6.5" height="8" fill="#58c858"/><rect x="1521" y="90.5" width="6.5" height="8" fill="none" stroke="#58c858" stroke-width="1"/><path d="M1524 92.5v11l2.6 -2.4l1.8 3.8l1.5 -0.7l-1.8 -3.8h3.5z" fill="#f4f4f4" stroke="#444" stroke-width="0.4"/><rect x="1517.5" y="111" width="11" height="15.5" fill="none" stroke="#dedede" stroke-width="1.2"/><rect x="1519.5" y="113" width="7" height="3" fill="#dedede"/><rect x="1519.5" y="117.7" width="1.7" height="1.7" fill="#dedede"/><rect x="1522.2" y="117.7" width="1.7" height="1.7" fill="#dedede"/><rect x="1524.9" y="117.7" width="1.7" height="1.7" fill="#dedede"/><rect x="1519.5" y="120.4" width="1.7" height="1.7" fill="#dedede"/><rect x="1522.2" y="120.4" width="1.7" height="1.7" fill="#dedede"/><rect x="1524.9" y="120.4" width="1.7" height="1.7" fill="#dedede"/><rect x="1519.5" y="123.10000000000001" width="1.7" height="1.7" fill="#dedede"/><rect x="1522.2" y="123.10000000000001" width="1.7" height="1.7" fill="#dedede"/><rect x="1524.9" y="123.10000000000001" width="1.7" height="1.7" fill="#dedede"/>
<rect x="1551.8" y="65" width="20" height="25" fill="#f3c567" rx="1"/><rect x="1557.5" y="62" width="8.5" height="4" fill="#f0f0f0" rx="1"/><path d="M1560 73h12l6 6v14.7h-18z" fill="#dedede"/><path d="M1572 73v6h6z" fill="#b8b8b8"/><rect x="1595.5" y="64" width="10" height="11" fill="none" stroke="#dedede" stroke-width="1.2"/><path d="M1597.5 67h6M1597.5 69.5h6M1597.5 72h4" fill="none" stroke="#dedede" stroke-width="1"/><path d="M1603 68l6 8M1609 68l-6 8" fill="none" stroke="#f4f4f4" stroke-width="1.1"/><circle cx="1603.5" cy="77.5" r="1.5" fill="none" stroke="#f4f4f4" stroke-width="0.9"/><circle cx="1608.5" cy="77.5" r="1.5" fill="none" stroke="#f4f4f4" stroke-width="0.9"/><path d="M1596.5 88h6.5v12h-6.5z" fill="#b0b0b0"/><path d="M1600 91h6l3 3v9h-9z" fill="#dedede"/><path d="M1606 91v3h3z" fill="#999"/><path d="M1633 66h14v10h18v13.7h-32z" fill="#dedede"/>
<text x="615.5" y="907.3" font-size="13" fill="#fff" textLength="692" lengthAdjust="spacingAndGlyphs" font-family="Liberation Mono, monospace" xml:space="preserve" style="white-space:pre">Autodesk DWG.  This file is a TrustedDWG last saved by an Autodesk application or Autodesk licensed</text>
<text x="615.5" y="921.5" font-size="13" fill="#fff" textLength="83.5" lengthAdjust="spacingAndGlyphs" font-family="Liberation Mono, monospace">application.</text>
<text x="615.5" y="942" font-size="13" fill="#fff" textLength="55.5" lengthAdjust="spacingAndGlyphs" font-family="Liberation Mono, monospace">Command:</text>
<text x="615.5" y="962" font-size="13" fill="#fff" textLength="55.5" lengthAdjust="spacingAndGlyphs" font-family="Liberation Mono, monospace">Command:</text>
<text x="644" y="985" font-size="13" fill="#8e8e8e" textLength="97" lengthAdjust="spacingAndGlyphs" font-family="Liberation Mono, monospace" font-style="italic">Type a command</text>
<rect x="557.5" y="972" width="1.2" height="1.2" fill="#999"/>
<rect x="560.5" y="972" width="1.2" height="1.2" fill="#999"/>
<rect x="557.5" y="975" width="1.2" height="1.2" fill="#999"/>
<rect x="560.5" y="975" width="1.2" height="1.2" fill="#999"/>
<rect x="557.5" y="978" width="1.2" height="1.2" fill="#999"/>
<rect x="560.5" y="978" width="1.2" height="1.2" fill="#999"/>
<rect x="557.5" y="981" width="1.2" height="1.2" fill="#999"/>
<rect x="560.5" y="981" width="1.2" height="1.2" fill="#999"/>
<rect x="557.5" y="984" width="1.2" height="1.2" fill="#999"/>
<rect x="560.5" y="984" width="1.2" height="1.2" fill="#999"/>
<rect x="557.5" y="987" width="1.2" height="1.2" fill="#999"/>
<rect x="560.5" y="987" width="1.2" height="1.2" fill="#999"/>
<rect x="557.5" y="990" width="1.2" height="1.2" fill="#999"/>
<rect x="560.5" y="990" width="1.2" height="1.2" fill="#999"/>
<path d="M569 977l7.5 7.5m0 -7.5l-7.5 7.5" fill="none" stroke="#eee" stroke-width="2"/>
<path d="M589.5 975.5a3.6 3.6 0 1 0 3.5 4.8l6.5 6.5l2 -2l-6.5 -6.5a3.6 3.6 0 0 0 -1.5 -3.4l-1.5 2.6l-2 -0.5z" fill="#eee"/>
<rect x="612.5" y="974.5" width="14" height="12" fill="#c8c8c8" stroke="#777" stroke-width="1" rx="1.5"/>
<path d="M615 977.5l3.5 3l-3.5 3M620 984.5h4" fill="none" stroke="#555" stroke-width="1.2"/>
<path d="M629.5 979.5h5l-2.5 3z" fill="#888"/>
<path d="M1351 983l4 -4.5l4 4.5z" fill="#333"/>
<path d="M13 995.5 C20 995.5 21 1000 23 1006 C25 1011.5 27 1012.5 31 1012.5 L68 1012.5 C72 1012.5 73 1008 74.5 1003 C76 998 77 995.5 81 995.5Z" fill="#525252" stroke="#686868" stroke-width="0.7"/>
<path d="M74 995.5 C80 995.5 81 1000 83 1006 C85 1011.5 87 1012.5 91 1012.5 L133 1012.5 C138 1012.5 139.5 1008 141 1003 C142.5 998 144 995.5 148 995.5Z" fill="#6c6c6c" stroke="#808080" stroke-width="0.7"/>
<path d="M152.5 996 L170 996 C169 1003 167 1011 160 1011 L147.5 1011 C150 1007 151 1001 152.5 996Z" fill="#505050" stroke="#5e5e5e" stroke-width="0.7"/>
<text x="31.7" y="1007.8" font-size="12" fill="#bdbdbd" textLength="33" lengthAdjust="spacingAndGlyphs">Model</text>
<text x="88.5" y="1007.8" font-size="12" fill="#fff" textLength="42.3" lengthAdjust="spacingAndGlyphs" font-weight="bold">Layout1</text>
<path d="M154.5 1004h8.5m-4.25 -4.25v8.5" fill="none" stroke="#e8e8e8" stroke-width="1.7"/>
<text x="1455.5" y="1012.7" font-size="12" fill="#fff" textLength="33.5" lengthAdjust="spacingAndGlyphs">PAPER</text>
<path d="M1501 1002v13.5h12 M1501 1010.5h4.5v5" fill="none" stroke="#fff" stroke-width="1.3"/>
<circle cx="1530" cy="1009.5" r="5.8" fill="none" stroke="#e0e0e0" stroke-width="1.2"/>
<path d="M1530 1009.5h8.5M1530 1009.5l7 -7.5" fill="none" stroke="#e0e0e0" stroke-width="1.2"/>
<path d="M1547 1007h6.5l-3.25 3.6z" fill="#f2f2f2"/>
<line x1="1563" y1="1001.5" x2="1575" y2="1015" stroke="#ff4040" stroke-width="1.2"/>
<line x1="1569.5" y1="1000" x2="1569.5" y2="1016" stroke="#40d060" stroke-width="1.2"/>
<rect x="1568" y="1007" width="3" height="3" fill="#4a4a4a" stroke="#fff" stroke-width="0.8"/>
<path d="M1586 1007h6.5l-3.25 3.6z" fill="#f2f2f2"/>
<path d="M1614 1003l-11 11h13.5" fill="none" stroke="#e8e8e8" stroke-width="1.3"/>
<path d="M1610 1014a6 6 0 0 0 -2 -4.5" fill="none" stroke="#e8e8e8" stroke-width="1"/>
<rect x="1628.5" y="1004.5" width="12.5" height="11.5" fill="none" stroke="#fff" stroke-width="1.3"/>
<rect x="1626.5" y="1002.5" width="4" height="4" fill="#5f93cb" stroke="#fff" stroke-width="1"/>
<path d="M1650 1007h6.5l-3.25 3.6z" fill="#f2f2f2"/>
<rect x="1668.5" y="1002" width="14" height="14" fill="none" stroke="#e0e0e0" stroke-width="1.2" stroke-dasharray="3 1.5"/>
<rect x="1673.5" y="1007.5" width="6" height="6" fill="none" stroke="#e0e0e0" stroke-width="1.1"/>
<path d="M1669 1002.5l4 4M1669 1002.5h3M1669 1002.5v3" fill="none" stroke="#e0e0e0" stroke-width="1.1"/>
<path d="M1698.5 1001.5l-6 14.5l6 -4l6 4z" fill="#d8d8d8"/>
<path d="M1698.5 1006l-1.8 5h3.6z" fill="#4a4a4a"/>
<path d="M1723 1001.5l-6 14.5l6 -4l6 4z" fill="#d8d8d8"/>
<path d="M1723 1006l-1.8 5h3.6z" fill="#4a4a4a"/>
<circle cx="1705.5" cy="1003.5" r="2" fill="none" stroke="#e0e0e0" stroke-width="1"/>
<path d="M1730 1000l-2.5 4h2l-1.5 3.5l4 -5h-2l1.5 -2.5z" fill="#e0e0e0"/>
<circle cx="1749.7" cy="1008.5" r="4.6" fill="none" stroke="#d8d8d8" stroke-width="3"/>
<circle cx="1749.7" cy="1008.5" r="7" fill="none" stroke="#d8d8d8" stroke-width="2.2" stroke-dasharray="2.75 2.75"/>
<path d="M1766.5 1007h6.5l-3.25 3.6z" fill="#f2f2f2"/>
<path d="M1782.5 1008.7h16m-8 -8v16" fill="none" stroke="#fff" stroke-width="1.5"/>
<rect x="1810" y="1002" width="5" height="5" fill="none" stroke="#e0e0e0" stroke-width="1"/>
<circle cx="1822.5" cy="1007" r="3" fill="none" stroke="#e0e0e0" stroke-width="1"/>
<path d="M1816 1010l-3.2 5.5h6.4z" fill="none" stroke="#e0e0e0" stroke-width="1"/>
<rect x="1836.5" y="1001.5" width="11" height="7" fill="#3f8fdf"/>
<rect x="1836.5" y="1008.5" width="11" height="6.5" fill="#e8c838"/>
<path d="M1842 1001.5v7M1838 1005h8" fill="none" stroke="#fff" stroke-width="1"/>
<path d="M1844 1001l4 4v-4z" fill="#e8e8e8"/>
<path d="M1844.5 1012.5l2.5 2.5l4.5 -5" fill="none" stroke="#3cb04a" stroke-width="1.8"/>
<rect x="1862" y="1003" width="15" height="11" fill="none" stroke="#d8d8d8" stroke-width="1.1"/>
<path d="M1865 1011.5l9 -6M1865 1011.5v-2.8M1865 1011.5h3M1874 1005.5h-3M1874 1005.5v2.8" fill="none" stroke="#d8d8d8" stroke-width="1"/>
<line x1="1886" y1="1003.2" x2="1902.2" y2="1003.2" stroke="#f0f0f0" stroke-width="2"/>
<line x1="1886" y1="1009.2" x2="1902.2" y2="1009.2" stroke="#f0f0f0" stroke-width="2"/>
<line x1="1886" y1="1015.2" x2="1902.2" y2="1015.2" stroke="#f0f0f0" stroke-width="2"/>
</svg>
</div></div>
</body></html>
